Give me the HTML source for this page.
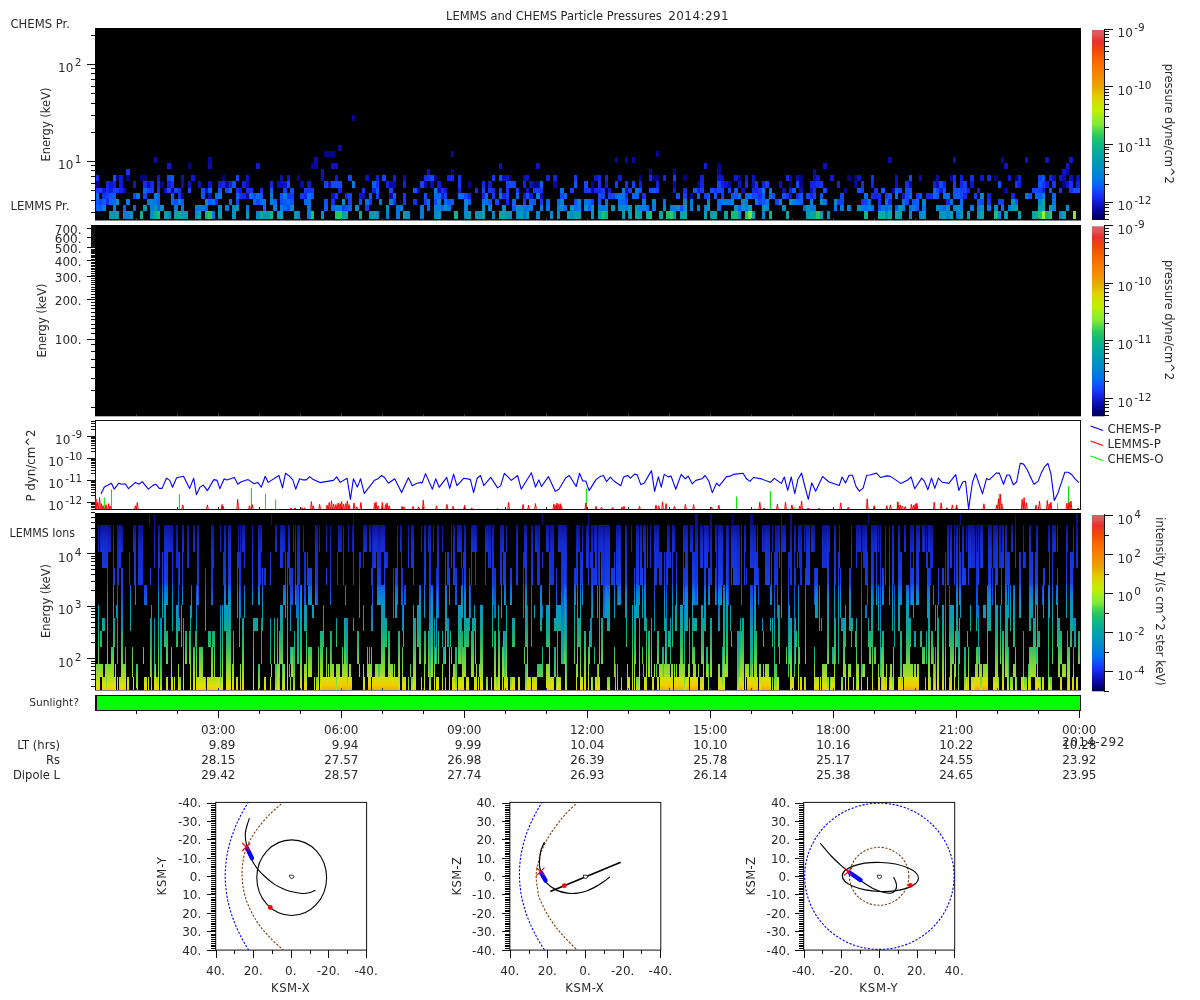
<!DOCTYPE html>
<html><head><meta charset="utf-8"><title>LEMMS and CHEMS Particle Pressures</title>
<style>html,body{margin:0;padding:0;background:#fff}svg{display:block;will-change:transform}text{font-family:"DejaVu Sans","Liberation Sans",sans-serif;fill:#2a2a2a}</style></head><body>
<svg width="1200" height="1000" viewBox="0 0 1200 1000">
<defs>
<linearGradient id="cb" x1="0" y1="1" x2="0" y2="0">
<stop offset="0.000" stop-color="#000050"/>
<stop offset="0.021" stop-color="#000070"/>
<stop offset="0.053" stop-color="#0808a0"/>
<stop offset="0.089" stop-color="#1018d0"/>
<stop offset="0.126" stop-color="#1830f8"/>
<stop offset="0.163" stop-color="#1050ff"/>
<stop offset="0.200" stop-color="#0070f0"/>
<stop offset="0.253" stop-color="#0088d0"/>
<stop offset="0.300" stop-color="#0098b8"/>
<stop offset="0.353" stop-color="#08a8a0"/>
<stop offset="0.400" stop-color="#10b880"/>
<stop offset="0.442" stop-color="#28c860"/>
<stop offset="0.474" stop-color="#50d850"/>
<stop offset="0.500" stop-color="#80e838"/>
<stop offset="0.547" stop-color="#a0f020"/>
<stop offset="0.574" stop-color="#c0f000"/>
<stop offset="0.600" stop-color="#c8e800"/>
<stop offset="0.647" stop-color="#e0d000"/>
<stop offset="0.700" stop-color="#e8a800"/>
<stop offset="0.747" stop-color="#f09000"/>
<stop offset="0.800" stop-color="#f87800"/>
<stop offset="0.847" stop-color="#f86000"/>
<stop offset="0.895" stop-color="#f04808"/>
<stop offset="0.942" stop-color="#e83030"/>
<stop offset="0.979" stop-color="#e05858"/>
<stop offset="1.000" stop-color="#d86068"/>
</linearGradient>
<linearGradient id="p4" gradientUnits="userSpaceOnUse" x1="0" y1="514" x2="0" y2="690.5">
<stop offset="0.0000" stop-color="#0c0c80"/>
<stop offset="0.0680" stop-color="#0c1498"/>
<stop offset="0.1473" stop-color="#1428c8"/>
<stop offset="0.2153" stop-color="#1430d8"/>
<stop offset="0.3173" stop-color="#1838e0"/>
<stop offset="0.3909" stop-color="#1840e8"/>
<stop offset="0.4164" stop-color="#1064e8"/>
<stop offset="0.4589" stop-color="#0c80dc"/>
<stop offset="0.5156" stop-color="#0898c4"/>
<stop offset="0.5892" stop-color="#08a0b0"/>
<stop offset="0.6629" stop-color="#10ac88"/>
<stop offset="0.7535" stop-color="#30c060"/>
<stop offset="0.8499" stop-color="#78d838"/>
<stop offset="0.9235" stop-color="#b0dc20"/>
<stop offset="0.9745" stop-color="#e0e008"/>
<stop offset="1.0000" stop-color="#f0c800"/>
</linearGradient>
<linearGradient id="p4b" gradientUnits="userSpaceOnUse" x1="0" y1="514" x2="0" y2="690.5">
<stop offset="0.0000" stop-color="#080870"/>
<stop offset="0.0680" stop-color="#0c1090"/>
<stop offset="0.1473" stop-color="#1020b8"/>
<stop offset="0.2153" stop-color="#1428d0"/>
<stop offset="0.3173" stop-color="#1430d8"/>
<stop offset="0.4023" stop-color="#1438e0"/>
<stop offset="0.4589" stop-color="#1050e8"/>
<stop offset="0.5156" stop-color="#0c68e0"/>
<stop offset="0.5892" stop-color="#0880c8"/>
<stop offset="0.6629" stop-color="#0898b8"/>
<stop offset="0.7535" stop-color="#10a8a0"/>
<stop offset="0.8499" stop-color="#28c070"/>
<stop offset="0.9235" stop-color="#60d048"/>
<stop offset="0.9745" stop-color="#98e030"/>
<stop offset="1.0000" stop-color="#c0e818"/>
</linearGradient>
<linearGradient id="p4c" gradientUnits="userSpaceOnUse" x1="0" y1="514" x2="0" y2="690.5">
<stop offset="0.0000" stop-color="#0c0c80"/>
<stop offset="0.8499" stop-color="#a0e030"/>
<stop offset="0.9235" stop-color="#d0e010"/>
<stop offset="0.9688" stop-color="#f0d000"/>
<stop offset="1.0000" stop-color="#f0a800"/>
</linearGradient>
</defs>
<rect width="1200" height="1000" fill="#fff"/>
<text y="20" font-size="11.5"><tspan x="446">LEMMS and CHEMS Particle Pressures  </tspan><tspan x="668.2" font-size="12" textLength="60.5" lengthAdjust="spacing">2014:291</tspan></text>
<rect x="95" y="28" width="986" height="192.5" fill="#000"/>
<g shape-rendering="crispEdges">
<rect x="96" y="205" width="3" height="6" fill="#036af3"/>
<rect x="96" y="199" width="3" height="6" fill="#0d56fc"/>
<rect x="96" y="193" width="3" height="6" fill="#0469f3"/>
<rect x="96" y="188" width="3" height="5" fill="#1638fa"/>
<rect x="96" y="181" width="3" height="7" fill="#040485"/>
<rect x="96" y="175" width="3" height="6" fill="#172cf1"/>
<rect x="99" y="205" width="3" height="6" fill="#095ff8"/>
<rect x="99" y="199" width="3" height="6" fill="#1345fd"/>
<rect x="99" y="188" width="3" height="5" fill="#1345fd"/>
<rect x="102" y="205" width="4" height="6" fill="#0082d8"/>
<rect x="102" y="199" width="4" height="6" fill="#095ef9"/>
<rect x="102" y="193" width="4" height="6" fill="#1831f8"/>
<rect x="102" y="188" width="4" height="5" fill="#111ad3"/>
<rect x="106" y="199" width="3" height="6" fill="#162bf0"/>
<rect x="106" y="193" width="3" height="6" fill="#1441fc"/>
<rect x="106" y="188" width="3" height="5" fill="#162bef"/>
<rect x="106" y="181" width="3" height="7" fill="#1526e7"/>
<rect x="109" y="211" width="4" height="8" fill="#019bb4"/>
<rect x="109" y="199" width="4" height="6" fill="#0468f4"/>
<rect x="109" y="193" width="4" height="6" fill="#0a5bfa"/>
<rect x="109" y="188" width="4" height="5" fill="#121eda"/>
<rect x="109" y="181" width="4" height="7" fill="#0f16c9"/>
<rect x="113" y="211" width="3" height="8" fill="#0093c0"/>
<rect x="113" y="205" width="3" height="6" fill="#0083d7"/>
<rect x="113" y="199" width="3" height="6" fill="#0762f6"/>
<rect x="113" y="193" width="3" height="6" fill="#0c59fb"/>
<rect x="113" y="188" width="3" height="5" fill="#1343fc"/>
<rect x="113" y="181" width="3" height="7" fill="#121fdc"/>
<rect x="113" y="175" width="3" height="6" fill="#0f52fe"/>
<rect x="116" y="211" width="3" height="8" fill="#029cb2"/>
<rect x="116" y="199" width="3" height="6" fill="#0090c5"/>
<rect x="116" y="188" width="3" height="5" fill="#153bfa"/>
<rect x="116" y="175" width="3" height="6" fill="#040485"/>
<rect x="119" y="188" width="4" height="5" fill="#1423e2"/>
<rect x="119" y="181" width="4" height="7" fill="#111bd5"/>
<rect x="119" y="175" width="4" height="6" fill="#111ad4"/>
<rect x="123" y="211" width="3" height="8" fill="#0082d9"/>
<rect x="123" y="205" width="3" height="6" fill="#0d56fc"/>
<rect x="123" y="188" width="3" height="5" fill="#0e13c2"/>
<rect x="126" y="211" width="4" height="8" fill="#007ce0"/>
<rect x="126" y="199" width="4" height="6" fill="#007ede"/>
<rect x="126" y="175" width="4" height="6" fill="#040485"/>
<rect x="126" y="169" width="4" height="6" fill="#1831f8"/>
<rect x="130" y="211" width="3" height="8" fill="#0094bd"/>
<rect x="133" y="205" width="3" height="6" fill="#095ef8"/>
<rect x="133" y="193" width="3" height="6" fill="#1440fb"/>
<rect x="133" y="181" width="3" height="7" fill="#1018cf"/>
<rect x="136" y="193" width="4" height="6" fill="#0078e5"/>
<rect x="140" y="211" width="3" height="8" fill="#0cb08f"/>
<rect x="140" y="175" width="3" height="6" fill="#040485"/>
<rect x="143" y="205" width="4" height="6" fill="#0098b8"/>
<rect x="143" y="193" width="4" height="6" fill="#143ffb"/>
<rect x="143" y="188" width="4" height="5" fill="#0369f3"/>
<rect x="143" y="181" width="4" height="7" fill="#162aee"/>
<rect x="143" y="175" width="4" height="6" fill="#040485"/>
<rect x="147" y="199" width="3" height="6" fill="#0079e4"/>
<rect x="147" y="188" width="3" height="5" fill="#1248fd"/>
<rect x="147" y="181" width="3" height="7" fill="#0b0eb2"/>
<rect x="150" y="211" width="4" height="8" fill="#008fc5"/>
<rect x="150" y="205" width="4" height="6" fill="#007ede"/>
<rect x="150" y="199" width="4" height="6" fill="#0083d6"/>
<rect x="150" y="188" width="4" height="5" fill="#1735f9"/>
<rect x="150" y="181" width="4" height="7" fill="#162aef"/>
<rect x="154" y="211" width="3" height="8" fill="#0baf93"/>
<rect x="154" y="205" width="3" height="6" fill="#0094bd"/>
<rect x="154" y="199" width="3" height="6" fill="#0073ec"/>
<rect x="154" y="193" width="3" height="6" fill="#0077e6"/>
<rect x="157" y="211" width="3" height="8" fill="#1bbf72"/>
<rect x="157" y="205" width="3" height="6" fill="#0762f7"/>
<rect x="157" y="199" width="3" height="6" fill="#0663f6"/>
<rect x="157" y="193" width="3" height="6" fill="#0860f8"/>
<rect x="157" y="188" width="3" height="5" fill="#1830f8"/>
<rect x="157" y="181" width="3" height="7" fill="#1424e5"/>
<rect x="157" y="175" width="3" height="6" fill="#1017ce"/>
<rect x="160" y="205" width="4" height="6" fill="#008fc6"/>
<rect x="160" y="181" width="4" height="7" fill="#040485"/>
<rect x="164" y="211" width="3" height="8" fill="#04a0ac"/>
<rect x="164" y="188" width="3" height="5" fill="#0e14c5"/>
<rect x="167" y="211" width="4" height="8" fill="#008cc9"/>
<rect x="167" y="188" width="4" height="5" fill="#124afe"/>
<rect x="167" y="181" width="4" height="7" fill="#121eda"/>
<rect x="167" y="175" width="4" height="6" fill="#1346fd"/>
<rect x="167" y="163" width="4" height="6" fill="#1018d0"/>
<rect x="171" y="199" width="3" height="6" fill="#0467f4"/>
<rect x="171" y="193" width="3" height="6" fill="#026bf2"/>
<rect x="171" y="188" width="3" height="5" fill="#040485"/>
<rect x="171" y="181" width="3" height="7" fill="#182ff6"/>
<rect x="171" y="175" width="3" height="6" fill="#095df9"/>
<rect x="174" y="211" width="4" height="8" fill="#07a6a3"/>
<rect x="174" y="205" width="4" height="6" fill="#007edd"/>
<rect x="174" y="199" width="4" height="6" fill="#114cfe"/>
<rect x="174" y="188" width="4" height="5" fill="#1248fd"/>
<rect x="178" y="211" width="3" height="8" fill="#09ab9b"/>
<rect x="178" y="199" width="3" height="6" fill="#007be2"/>
<rect x="178" y="193" width="3" height="6" fill="#182ff6"/>
<rect x="178" y="188" width="3" height="5" fill="#172ef5"/>
<rect x="181" y="211" width="3" height="8" fill="#039eb0"/>
<rect x="181" y="205" width="3" height="6" fill="#0079e3"/>
<rect x="181" y="199" width="3" height="6" fill="#0d56fc"/>
<rect x="181" y="193" width="3" height="6" fill="#05058e"/>
<rect x="181" y="181" width="3" height="7" fill="#0a0cad"/>
<rect x="181" y="175" width="3" height="6" fill="#0c10b8"/>
<rect x="184" y="211" width="4" height="8" fill="#0099b7"/>
<rect x="188" y="188" width="3" height="5" fill="#124afe"/>
<rect x="188" y="181" width="3" height="7" fill="#0e13c2"/>
<rect x="188" y="163" width="3" height="6" fill="#040485"/>
<rect x="191" y="175" width="4" height="6" fill="#1019d2"/>
<rect x="195" y="211" width="3" height="8" fill="#008ec7"/>
<rect x="195" y="205" width="3" height="6" fill="#0077e6"/>
<rect x="198" y="211" width="3" height="8" fill="#06a5a5"/>
<rect x="198" y="205" width="3" height="6" fill="#0079e4"/>
<rect x="198" y="181" width="3" height="7" fill="#0d12be"/>
<rect x="201" y="205" width="4" height="6" fill="#0074eb"/>
<rect x="201" y="193" width="4" height="6" fill="#0e54fd"/>
<rect x="201" y="188" width="4" height="5" fill="#104fff"/>
<rect x="205" y="211" width="3" height="8" fill="#0fb684"/>
<rect x="205" y="205" width="3" height="6" fill="#0d57fc"/>
<rect x="205" y="199" width="3" height="6" fill="#008acd"/>
<rect x="205" y="188" width="3" height="5" fill="#0e14c3"/>
<rect x="208" y="211" width="4" height="8" fill="#26c763"/>
<rect x="208" y="199" width="4" height="6" fill="#0a5cfa"/>
<rect x="208" y="193" width="4" height="6" fill="#0b0daf"/>
<rect x="208" y="188" width="4" height="5" fill="#095df9"/>
<rect x="208" y="181" width="4" height="7" fill="#0f16cb"/>
<rect x="208" y="157" width="4" height="6" fill="#0808a0"/>
<rect x="212" y="211" width="3" height="8" fill="#0075e9"/>
<rect x="212" y="199" width="3" height="6" fill="#006ff0"/>
<rect x="215" y="199" width="3" height="6" fill="#162aed"/>
<rect x="215" y="193" width="3" height="6" fill="#0566f5"/>
<rect x="218" y="211" width="4" height="8" fill="#04a0ac"/>
<rect x="218" y="205" width="4" height="6" fill="#0090c4"/>
<rect x="218" y="193" width="4" height="6" fill="#0078e5"/>
<rect x="218" y="188" width="4" height="5" fill="#0c58fb"/>
<rect x="218" y="181" width="4" height="7" fill="#121ed9"/>
<rect x="222" y="181" width="3" height="7" fill="#162aee"/>
<rect x="222" y="175" width="3" height="6" fill="#040485"/>
<rect x="225" y="205" width="4" height="6" fill="#0079e4"/>
<rect x="225" y="188" width="4" height="5" fill="#1345fd"/>
<rect x="225" y="181" width="4" height="7" fill="#0a0ba9"/>
<rect x="229" y="199" width="3" height="6" fill="#0074eb"/>
<rect x="229" y="188" width="3" height="5" fill="#0075e9"/>
<rect x="229" y="181" width="3" height="7" fill="#1321df"/>
<rect x="232" y="211" width="4" height="8" fill="#0095bd"/>
<rect x="232" y="205" width="4" height="6" fill="#0090c3"/>
<rect x="232" y="181" width="4" height="7" fill="#0e53fd"/>
<rect x="236" y="205" width="3" height="6" fill="#0097b9"/>
<rect x="236" y="199" width="3" height="6" fill="#153bfa"/>
<rect x="236" y="193" width="3" height="6" fill="#095df9"/>
<rect x="236" y="188" width="3" height="5" fill="#1830f8"/>
<rect x="236" y="175" width="3" height="6" fill="#1344fc"/>
<rect x="239" y="193" width="3" height="6" fill="#1629ed"/>
<rect x="239" y="188" width="3" height="5" fill="#111bd5"/>
<rect x="242" y="193" width="4" height="6" fill="#1526e8"/>
<rect x="242" y="181" width="4" height="7" fill="#121fdb"/>
<rect x="246" y="211" width="3" height="8" fill="#0098b8"/>
<rect x="246" y="205" width="3" height="6" fill="#0073ec"/>
<rect x="246" y="193" width="3" height="6" fill="#0a0baa"/>
<rect x="246" y="188" width="3" height="5" fill="#182ff6"/>
<rect x="246" y="181" width="3" height="7" fill="#0b0db0"/>
<rect x="246" y="175" width="3" height="6" fill="#0f16c9"/>
<rect x="249" y="193" width="4" height="6" fill="#0073ec"/>
<rect x="249" y="188" width="4" height="5" fill="#172ef4"/>
<rect x="253" y="199" width="3" height="6" fill="#0566f5"/>
<rect x="253" y="193" width="3" height="6" fill="#1345fd"/>
<rect x="256" y="211" width="4" height="8" fill="#008dc9"/>
<rect x="256" y="199" width="4" height="6" fill="#1441fc"/>
<rect x="256" y="193" width="4" height="6" fill="#016df1"/>
<rect x="256" y="163" width="4" height="6" fill="#111ad4"/>
<rect x="260" y="211" width="3" height="8" fill="#08a99e"/>
<rect x="260" y="199" width="3" height="6" fill="#026bf2"/>
<rect x="260" y="193" width="3" height="6" fill="#0d57fc"/>
<rect x="260" y="188" width="3" height="5" fill="#162aee"/>
<rect x="263" y="211" width="3" height="8" fill="#0097b9"/>
<rect x="263" y="205" width="3" height="6" fill="#0664f6"/>
<rect x="263" y="199" width="3" height="6" fill="#0076e8"/>
<rect x="266" y="211" width="4" height="8" fill="#019bb4"/>
<rect x="270" y="211" width="3" height="8" fill="#0fb685"/>
<rect x="270" y="199" width="3" height="6" fill="#007fdd"/>
<rect x="270" y="193" width="3" height="6" fill="#007ae3"/>
<rect x="270" y="188" width="3" height="5" fill="#0861f7"/>
<rect x="270" y="181" width="3" height="7" fill="#1527e8"/>
<rect x="273" y="205" width="4" height="6" fill="#007fdd"/>
<rect x="273" y="199" width="4" height="6" fill="#0664f6"/>
<rect x="277" y="211" width="3" height="8" fill="#019ab5"/>
<rect x="277" y="181" width="3" height="7" fill="#0a0dae"/>
<rect x="280" y="211" width="3" height="8" fill="#039fae"/>
<rect x="280" y="205" width="3" height="6" fill="#0081d9"/>
<rect x="280" y="199" width="3" height="6" fill="#1248fd"/>
<rect x="280" y="193" width="3" height="6" fill="#0f52fe"/>
<rect x="280" y="181" width="3" height="7" fill="#0c11bb"/>
<rect x="280" y="175" width="3" height="6" fill="#0c10b7"/>
<rect x="283" y="205" width="4" height="6" fill="#0663f6"/>
<rect x="283" y="199" width="4" height="6" fill="#0d57fc"/>
<rect x="283" y="193" width="4" height="6" fill="#0080da"/>
<rect x="283" y="188" width="4" height="5" fill="#1442fc"/>
<rect x="283" y="181" width="4" height="7" fill="#0e14c5"/>
<rect x="287" y="205" width="3" height="6" fill="#1344fc"/>
<rect x="287" y="199" width="3" height="6" fill="#016ef1"/>
<rect x="287" y="193" width="3" height="6" fill="#1734f9"/>
<rect x="287" y="181" width="3" height="7" fill="#114dfe"/>
<rect x="287" y="175" width="3" height="6" fill="#0f16cb"/>
<rect x="290" y="205" width="4" height="6" fill="#008cca"/>
<rect x="290" y="199" width="4" height="6" fill="#0f52fe"/>
<rect x="290" y="193" width="4" height="6" fill="#1638fa"/>
<rect x="290" y="188" width="4" height="5" fill="#0f51fe"/>
<rect x="294" y="211" width="3" height="8" fill="#019bb4"/>
<rect x="297" y="211" width="3" height="8" fill="#008acd"/>
<rect x="297" y="175" width="3" height="6" fill="#040485"/>
<rect x="300" y="193" width="4" height="6" fill="#1637fa"/>
<rect x="300" y="181" width="4" height="7" fill="#0a0dae"/>
<rect x="304" y="199" width="3" height="6" fill="#0468f4"/>
<rect x="304" y="193" width="3" height="6" fill="#1527e9"/>
<rect x="304" y="188" width="3" height="5" fill="#163afa"/>
<rect x="307" y="211" width="4" height="8" fill="#007ddf"/>
<rect x="307" y="205" width="4" height="6" fill="#0074eb"/>
<rect x="307" y="199" width="4" height="6" fill="#0070f0"/>
<rect x="307" y="193" width="4" height="6" fill="#0076e8"/>
<rect x="307" y="188" width="4" height="5" fill="#1830f8"/>
<rect x="307" y="181" width="4" height="7" fill="#0f16cb"/>
<rect x="311" y="211" width="3" height="8" fill="#1dc16e"/>
<rect x="311" y="193" width="3" height="6" fill="#0e54fd"/>
<rect x="311" y="188" width="3" height="5" fill="#153bfa"/>
<rect x="321" y="211" width="3" height="8" fill="#0094be"/>
<rect x="324" y="205" width="4" height="6" fill="#0b5afa"/>
<rect x="324" y="199" width="4" height="6" fill="#104fff"/>
<rect x="324" y="181" width="4" height="7" fill="#1345fd"/>
<rect x="328" y="181" width="3" height="7" fill="#0e13c1"/>
<rect x="331" y="205" width="4" height="6" fill="#0469f3"/>
<rect x="331" y="199" width="4" height="6" fill="#172cf1"/>
<rect x="331" y="193" width="4" height="6" fill="#0d13c1"/>
<rect x="331" y="181" width="4" height="7" fill="#1248fd"/>
<rect x="335" y="211" width="3" height="8" fill="#21c369"/>
<rect x="335" y="205" width="3" height="6" fill="#007ae3"/>
<rect x="335" y="193" width="3" height="6" fill="#1735f9"/>
<rect x="335" y="181" width="3" height="7" fill="#1050ff"/>
<rect x="335" y="175" width="3" height="6" fill="#111ad3"/>
<rect x="338" y="211" width="4" height="8" fill="#28c860"/>
<rect x="338" y="205" width="4" height="6" fill="#0077e6"/>
<rect x="338" y="188" width="4" height="5" fill="#1320dd"/>
<rect x="338" y="181" width="4" height="7" fill="#114dfe"/>
<rect x="342" y="211" width="3" height="8" fill="#039fae"/>
<rect x="342" y="205" width="3" height="6" fill="#1639fa"/>
<rect x="342" y="199" width="3" height="6" fill="#0091c3"/>
<rect x="345" y="211" width="3" height="8" fill="#06a4a6"/>
<rect x="345" y="205" width="3" height="6" fill="#0e53fd"/>
<rect x="345" y="193" width="3" height="6" fill="#1527e9"/>
<rect x="348" y="205" width="4" height="6" fill="#0761f7"/>
<rect x="348" y="199" width="4" height="6" fill="#153dfb"/>
<rect x="348" y="193" width="4" height="6" fill="#1343fc"/>
<rect x="348" y="175" width="4" height="6" fill="#1246fd"/>
<rect x="352" y="181" width="3" height="7" fill="#007edd"/>
<rect x="355" y="205" width="4" height="6" fill="#008dc8"/>
<rect x="359" y="211" width="3" height="8" fill="#07a6a3"/>
<rect x="359" y="199" width="3" height="6" fill="#1249fd"/>
<rect x="359" y="193" width="3" height="6" fill="#0f17cd"/>
<rect x="362" y="193" width="3" height="6" fill="#0c11ba"/>
<rect x="362" y="188" width="3" height="5" fill="#1832f8"/>
<rect x="365" y="205" width="4" height="6" fill="#1638fa"/>
<rect x="365" y="199" width="4" height="6" fill="#0072ee"/>
<rect x="365" y="175" width="4" height="6" fill="#0c11ba"/>
<rect x="369" y="211" width="3" height="8" fill="#0094be"/>
<rect x="369" y="199" width="3" height="6" fill="#1732f8"/>
<rect x="369" y="193" width="3" height="6" fill="#0e54fd"/>
<rect x="372" y="211" width="4" height="8" fill="#04a0ac"/>
<rect x="372" y="188" width="4" height="5" fill="#1322e0"/>
<rect x="372" y="181" width="4" height="7" fill="#0861f7"/>
<rect x="376" y="211" width="3" height="8" fill="#0091c2"/>
<rect x="376" y="193" width="3" height="6" fill="#153dfb"/>
<rect x="376" y="188" width="3" height="5" fill="#0c58fb"/>
<rect x="376" y="181" width="3" height="7" fill="#1732f8"/>
<rect x="376" y="175" width="3" height="6" fill="#121fdc"/>
<rect x="379" y="199" width="3" height="6" fill="#007edd"/>
<rect x="382" y="175" width="4" height="6" fill="#1248fd"/>
<rect x="386" y="211" width="3" height="8" fill="#007ddf"/>
<rect x="386" y="205" width="3" height="6" fill="#0092c0"/>
<rect x="386" y="181" width="3" height="7" fill="#1423e2"/>
<rect x="389" y="199" width="4" height="6" fill="#007ae3"/>
<rect x="389" y="193" width="4" height="6" fill="#0b0eb2"/>
<rect x="389" y="188" width="4" height="5" fill="#1346fd"/>
<rect x="389" y="181" width="4" height="7" fill="#090ba8"/>
<rect x="393" y="199" width="3" height="6" fill="#1832f8"/>
<rect x="393" y="193" width="3" height="6" fill="#0a5cf9"/>
<rect x="393" y="181" width="3" height="7" fill="#090aa5"/>
<rect x="393" y="175" width="3" height="6" fill="#1322e1"/>
<rect x="396" y="211" width="4" height="8" fill="#0076e9"/>
<rect x="396" y="205" width="4" height="6" fill="#0073ec"/>
<rect x="400" y="205" width="3" height="6" fill="#007edd"/>
<rect x="403" y="211" width="3" height="8" fill="#039db0"/>
<rect x="403" y="199" width="3" height="6" fill="#1637fa"/>
<rect x="403" y="193" width="3" height="6" fill="#1637f9"/>
<rect x="403" y="181" width="3" height="7" fill="#1321df"/>
<rect x="403" y="175" width="3" height="6" fill="#0a0cac"/>
<rect x="406" y="211" width="4" height="8" fill="#008fc5"/>
<rect x="413" y="199" width="4" height="6" fill="#1732f8"/>
<rect x="413" y="188" width="4" height="5" fill="#0e54fd"/>
<rect x="417" y="188" width="3" height="5" fill="#0a0cab"/>
<rect x="420" y="211" width="4" height="8" fill="#007ddf"/>
<rect x="420" y="205" width="4" height="6" fill="#0077e6"/>
<rect x="420" y="181" width="4" height="7" fill="#1343fc"/>
<rect x="424" y="199" width="3" height="6" fill="#153cfb"/>
<rect x="424" y="193" width="3" height="6" fill="#114cfe"/>
<rect x="424" y="181" width="3" height="7" fill="#0b0eb2"/>
<rect x="424" y="175" width="3" height="6" fill="#1528eb"/>
<rect x="427" y="205" width="3" height="6" fill="#0663f6"/>
<rect x="427" y="199" width="3" height="6" fill="#0071ef"/>
<rect x="427" y="175" width="3" height="6" fill="#1831f8"/>
<rect x="427" y="169" width="3" height="6" fill="#0d12bd"/>
<rect x="430" y="181" width="4" height="7" fill="#0b0db0"/>
<rect x="430" y="175" width="4" height="6" fill="#114afe"/>
<rect x="434" y="211" width="3" height="8" fill="#008dc9"/>
<rect x="434" y="205" width="3" height="6" fill="#0081d9"/>
<rect x="434" y="199" width="3" height="6" fill="#1344fc"/>
<rect x="434" y="193" width="3" height="6" fill="#0469f3"/>
<rect x="434" y="188" width="3" height="5" fill="#007be2"/>
<rect x="434" y="175" width="3" height="6" fill="#060696"/>
<rect x="437" y="211" width="4" height="8" fill="#0095bc"/>
<rect x="437" y="205" width="4" height="6" fill="#0079e4"/>
<rect x="437" y="199" width="4" height="6" fill="#0088d0"/>
<rect x="437" y="193" width="4" height="6" fill="#0565f5"/>
<rect x="437" y="188" width="4" height="5" fill="#0a0cad"/>
<rect x="437" y="181" width="4" height="7" fill="#111bd5"/>
<rect x="441" y="205" width="3" height="6" fill="#0469f3"/>
<rect x="441" y="193" width="3" height="6" fill="#121fdc"/>
<rect x="441" y="188" width="3" height="5" fill="#172df2"/>
<rect x="444" y="205" width="3" height="6" fill="#008bcc"/>
<rect x="444" y="199" width="3" height="6" fill="#0469f3"/>
<rect x="444" y="193" width="3" height="6" fill="#143ffb"/>
<rect x="444" y="188" width="3" height="5" fill="#111bd4"/>
<rect x="447" y="205" width="4" height="6" fill="#0076e8"/>
<rect x="447" y="199" width="4" height="6" fill="#114dfe"/>
<rect x="447" y="175" width="4" height="6" fill="#1424e5"/>
<rect x="451" y="199" width="3" height="6" fill="#0762f7"/>
<rect x="451" y="175" width="3" height="6" fill="#162bf0"/>
<rect x="451" y="169" width="3" height="6" fill="#040485"/>
<rect x="454" y="211" width="4" height="8" fill="#0db28c"/>
<rect x="458" y="193" width="3" height="6" fill="#0071ef"/>
<rect x="458" y="188" width="3" height="5" fill="#121fdb"/>
<rect x="458" y="181" width="3" height="7" fill="#1735f9"/>
<rect x="458" y="175" width="3" height="6" fill="#1830f8"/>
<rect x="461" y="193" width="3" height="6" fill="#016ef1"/>
<rect x="464" y="211" width="4" height="8" fill="#008bcb"/>
<rect x="464" y="205" width="4" height="6" fill="#0081d9"/>
<rect x="464" y="199" width="4" height="6" fill="#0084d5"/>
<rect x="464" y="193" width="4" height="6" fill="#1442fc"/>
<rect x="468" y="211" width="3" height="8" fill="#019ab5"/>
<rect x="468" y="199" width="3" height="6" fill="#0663f6"/>
<rect x="468" y="193" width="3" height="6" fill="#121fdc"/>
<rect x="468" y="181" width="3" height="7" fill="#05058e"/>
<rect x="475" y="211" width="3" height="8" fill="#0098b8"/>
<rect x="475" y="188" width="3" height="5" fill="#172df4"/>
<rect x="478" y="211" width="4" height="8" fill="#0091c2"/>
<rect x="482" y="211" width="3" height="8" fill="#06a4a6"/>
<rect x="482" y="205" width="3" height="6" fill="#0091c2"/>
<rect x="482" y="199" width="3" height="6" fill="#0074eb"/>
<rect x="482" y="193" width="3" height="6" fill="#1424e4"/>
<rect x="482" y="188" width="3" height="5" fill="#1344fc"/>
<rect x="482" y="181" width="3" height="7" fill="#162bf0"/>
<rect x="485" y="199" width="3" height="6" fill="#026bf2"/>
<rect x="485" y="193" width="3" height="6" fill="#0566f5"/>
<rect x="488" y="205" width="4" height="6" fill="#0086d2"/>
<rect x="488" y="199" width="4" height="6" fill="#0c59fb"/>
<rect x="488" y="188" width="4" height="5" fill="#1733f9"/>
<rect x="488" y="181" width="4" height="7" fill="#1018d0"/>
<rect x="492" y="211" width="3" height="8" fill="#008acd"/>
<rect x="492" y="193" width="3" height="6" fill="#1638fa"/>
<rect x="492" y="188" width="3" height="5" fill="#1528eb"/>
<rect x="492" y="175" width="3" height="6" fill="#153bfa"/>
<rect x="495" y="199" width="4" height="6" fill="#1346fd"/>
<rect x="499" y="211" width="3" height="8" fill="#06a5a5"/>
<rect x="499" y="193" width="3" height="6" fill="#0077e7"/>
<rect x="499" y="188" width="3" height="5" fill="#143ffb"/>
<rect x="499" y="175" width="3" height="6" fill="#0e54fd"/>
<rect x="502" y="211" width="4" height="8" fill="#05a3a8"/>
<rect x="502" y="205" width="4" height="6" fill="#0090c4"/>
<rect x="502" y="193" width="4" height="6" fill="#1423e2"/>
<rect x="502" y="175" width="4" height="6" fill="#0b0daf"/>
<rect x="506" y="211" width="3" height="8" fill="#019ab6"/>
<rect x="506" y="199" width="3" height="6" fill="#1527ea"/>
<rect x="506" y="193" width="3" height="6" fill="#153bfa"/>
<rect x="506" y="188" width="3" height="5" fill="#1736f9"/>
<rect x="506" y="181" width="3" height="7" fill="#1441fc"/>
<rect x="506" y="175" width="3" height="6" fill="#0e15c6"/>
<rect x="509" y="211" width="3" height="8" fill="#0090c4"/>
<rect x="509" y="181" width="3" height="7" fill="#114efe"/>
<rect x="509" y="175" width="3" height="6" fill="#040485"/>
<rect x="512" y="205" width="4" height="6" fill="#0c58fb"/>
<rect x="512" y="199" width="4" height="6" fill="#026bf2"/>
<rect x="512" y="181" width="4" height="7" fill="#1246fd"/>
<rect x="516" y="211" width="3" height="8" fill="#008ec8"/>
<rect x="516" y="205" width="3" height="6" fill="#0094be"/>
<rect x="516" y="193" width="3" height="6" fill="#0566f5"/>
<rect x="516" y="188" width="3" height="5" fill="#153cfb"/>
<rect x="519" y="211" width="4" height="8" fill="#029cb2"/>
<rect x="519" y="205" width="4" height="6" fill="#0086d3"/>
<rect x="523" y="211" width="3" height="8" fill="#0073ec"/>
<rect x="523" y="205" width="3" height="6" fill="#0077e6"/>
<rect x="523" y="199" width="3" height="6" fill="#153cfb"/>
<rect x="523" y="193" width="3" height="6" fill="#111bd4"/>
<rect x="523" y="181" width="3" height="7" fill="#1320dd"/>
<rect x="523" y="175" width="3" height="6" fill="#0b0fb4"/>
<rect x="526" y="211" width="3" height="8" fill="#019ab6"/>
<rect x="526" y="205" width="3" height="6" fill="#0070ef"/>
<rect x="526" y="193" width="3" height="6" fill="#1051ff"/>
<rect x="526" y="188" width="3" height="5" fill="#0f15c8"/>
<rect x="526" y="175" width="3" height="6" fill="#0f16c9"/>
<rect x="529" y="205" width="4" height="6" fill="#0077e7"/>
<rect x="529" y="199" width="4" height="6" fill="#0860f7"/>
<rect x="529" y="193" width="4" height="6" fill="#111ad4"/>
<rect x="529" y="181" width="4" height="7" fill="#0e14c3"/>
<rect x="533" y="199" width="3" height="6" fill="#0e55fd"/>
<rect x="533" y="188" width="3" height="5" fill="#153cfb"/>
<rect x="533" y="181" width="3" height="7" fill="#040485"/>
<rect x="536" y="211" width="4" height="8" fill="#0088d0"/>
<rect x="536" y="193" width="4" height="6" fill="#007ce0"/>
<rect x="536" y="188" width="4" height="5" fill="#153dfb"/>
<rect x="536" y="181" width="4" height="7" fill="#05058e"/>
<rect x="540" y="205" width="3" height="6" fill="#007ce0"/>
<rect x="540" y="199" width="3" height="6" fill="#1735f9"/>
<rect x="540" y="193" width="3" height="6" fill="#0a0baa"/>
<rect x="540" y="188" width="3" height="5" fill="#1831f8"/>
<rect x="540" y="181" width="3" height="7" fill="#0860f8"/>
<rect x="546" y="205" width="4" height="6" fill="#0076e7"/>
<rect x="546" y="199" width="4" height="6" fill="#0663f6"/>
<rect x="546" y="175" width="4" height="6" fill="#1322e0"/>
<rect x="550" y="211" width="3" height="8" fill="#0089ce"/>
<rect x="553" y="181" width="4" height="7" fill="#08089f"/>
<rect x="553" y="175" width="4" height="6" fill="#1322e1"/>
<rect x="557" y="211" width="3" height="8" fill="#008bcb"/>
<rect x="557" y="205" width="3" height="6" fill="#0077e7"/>
<rect x="557" y="199" width="3" height="6" fill="#0663f6"/>
<rect x="560" y="205" width="4" height="6" fill="#008acc"/>
<rect x="560" y="199" width="4" height="6" fill="#0081d9"/>
<rect x="560" y="193" width="4" height="6" fill="#1249fd"/>
<rect x="560" y="188" width="4" height="5" fill="#0071ef"/>
<rect x="564" y="205" width="3" height="6" fill="#036bf3"/>
<rect x="564" y="193" width="3" height="6" fill="#0664f6"/>
<rect x="567" y="211" width="3" height="8" fill="#04a0ac"/>
<rect x="570" y="211" width="4" height="8" fill="#008ec7"/>
<rect x="570" y="205" width="4" height="6" fill="#0095bc"/>
<rect x="570" y="188" width="4" height="5" fill="#1342fc"/>
<rect x="574" y="211" width="3" height="8" fill="#06a3a7"/>
<rect x="574" y="205" width="3" height="6" fill="#026df1"/>
<rect x="574" y="199" width="3" height="6" fill="#114bfe"/>
<rect x="574" y="181" width="3" height="7" fill="#0a5cf9"/>
<rect x="574" y="175" width="3" height="6" fill="#1637f9"/>
<rect x="577" y="211" width="4" height="8" fill="#039fae"/>
<rect x="577" y="205" width="4" height="6" fill="#007ce0"/>
<rect x="577" y="199" width="4" height="6" fill="#0089cf"/>
<rect x="584" y="205" width="4" height="6" fill="#0097b9"/>
<rect x="584" y="199" width="4" height="6" fill="#0074eb"/>
<rect x="584" y="188" width="4" height="5" fill="#1637f9"/>
<rect x="584" y="181" width="4" height="7" fill="#1249fe"/>
<rect x="588" y="205" width="3" height="6" fill="#095df9"/>
<rect x="588" y="199" width="3" height="6" fill="#0072ee"/>
<rect x="588" y="188" width="3" height="5" fill="#153afa"/>
<rect x="591" y="211" width="3" height="8" fill="#0096bb"/>
<rect x="591" y="205" width="3" height="6" fill="#0099b7"/>
<rect x="591" y="199" width="3" height="6" fill="#143efb"/>
<rect x="591" y="188" width="3" height="5" fill="#060692"/>
<rect x="591" y="181" width="3" height="7" fill="#050591"/>
<rect x="594" y="188" width="4" height="5" fill="#1526e8"/>
<rect x="594" y="175" width="4" height="6" fill="#1017ce"/>
<rect x="598" y="211" width="3" height="8" fill="#05a1aa"/>
<rect x="598" y="205" width="3" height="6" fill="#007fdd"/>
<rect x="598" y="199" width="3" height="6" fill="#0d57fc"/>
<rect x="598" y="193" width="3" height="6" fill="#114dfe"/>
<rect x="598" y="188" width="3" height="5" fill="#1527e9"/>
<rect x="598" y="181" width="3" height="7" fill="#182ff6"/>
<rect x="598" y="175" width="3" height="6" fill="#1526e7"/>
<rect x="601" y="211" width="4" height="8" fill="#1bbf71"/>
<rect x="601" y="205" width="4" height="6" fill="#0077e7"/>
<rect x="601" y="193" width="4" height="6" fill="#1246fd"/>
<rect x="601" y="188" width="4" height="5" fill="#1638fa"/>
<rect x="605" y="211" width="3" height="8" fill="#0baf92"/>
<rect x="605" y="205" width="3" height="6" fill="#0080db"/>
<rect x="605" y="199" width="3" height="6" fill="#0073ec"/>
<rect x="605" y="181" width="3" height="7" fill="#111bd5"/>
<rect x="605" y="175" width="3" height="6" fill="#1425e6"/>
<rect x="608" y="193" width="3" height="6" fill="#1344fc"/>
<rect x="608" y="188" width="3" height="5" fill="#111cd7"/>
<rect x="611" y="205" width="4" height="6" fill="#0098b8"/>
<rect x="611" y="193" width="4" height="6" fill="#1440fc"/>
<rect x="615" y="193" width="3" height="6" fill="#0073ec"/>
<rect x="615" y="181" width="3" height="7" fill="#153afa"/>
<rect x="615" y="157" width="3" height="6" fill="#07079c"/>
<rect x="618" y="205" width="4" height="6" fill="#0089ce"/>
<rect x="618" y="199" width="4" height="6" fill="#026cf2"/>
<rect x="618" y="193" width="4" height="6" fill="#0079e4"/>
<rect x="618" y="175" width="4" height="6" fill="#1018cf"/>
<rect x="622" y="211" width="3" height="8" fill="#039db0"/>
<rect x="622" y="205" width="3" height="6" fill="#008dc8"/>
<rect x="622" y="199" width="3" height="6" fill="#0763f6"/>
<rect x="622" y="193" width="3" height="6" fill="#0071ef"/>
<rect x="622" y="188" width="3" height="5" fill="#0079e4"/>
<rect x="625" y="205" width="3" height="6" fill="#007ddf"/>
<rect x="625" y="199" width="3" height="6" fill="#114cfe"/>
<rect x="625" y="193" width="3" height="6" fill="#172cf1"/>
<rect x="625" y="188" width="3" height="5" fill="#0909a3"/>
<rect x="625" y="181" width="3" height="7" fill="#172df4"/>
<rect x="628" y="211" width="4" height="8" fill="#04a0ac"/>
<rect x="628" y="205" width="4" height="6" fill="#0097b9"/>
<rect x="628" y="188" width="4" height="5" fill="#1441fc"/>
<rect x="632" y="193" width="3" height="6" fill="#0467f4"/>
<rect x="632" y="181" width="3" height="7" fill="#1441fc"/>
<rect x="635" y="211" width="4" height="8" fill="#08a89f"/>
<rect x="635" y="205" width="4" height="6" fill="#0091c2"/>
<rect x="635" y="193" width="4" height="6" fill="#0762f7"/>
<rect x="635" y="188" width="4" height="5" fill="#0078e5"/>
<rect x="639" y="211" width="3" height="8" fill="#019bb4"/>
<rect x="639" y="205" width="3" height="6" fill="#0081d9"/>
<rect x="639" y="188" width="3" height="5" fill="#1050ff"/>
<rect x="639" y="181" width="3" height="7" fill="#121dd9"/>
<rect x="639" y="175" width="3" height="6" fill="#040485"/>
<rect x="642" y="205" width="4" height="6" fill="#0082d8"/>
<rect x="642" y="199" width="4" height="6" fill="#0079e4"/>
<rect x="642" y="193" width="4" height="6" fill="#182ff6"/>
<rect x="646" y="211" width="3" height="8" fill="#0bad95"/>
<rect x="646" y="205" width="3" height="6" fill="#0070f0"/>
<rect x="649" y="211" width="3" height="8" fill="#18be75"/>
<rect x="649" y="188" width="3" height="5" fill="#104eff"/>
<rect x="649" y="175" width="3" height="6" fill="#1527e9"/>
<rect x="649" y="169" width="3" height="6" fill="#070799"/>
<rect x="652" y="205" width="4" height="6" fill="#007edd"/>
<rect x="652" y="199" width="4" height="6" fill="#0087d2"/>
<rect x="652" y="188" width="4" height="5" fill="#0c58fb"/>
<rect x="652" y="175" width="4" height="6" fill="#040485"/>
<rect x="656" y="188" width="3" height="5" fill="#1343fc"/>
<rect x="656" y="181" width="3" height="7" fill="#1423e3"/>
<rect x="656" y="175" width="3" height="6" fill="#040485"/>
<rect x="659" y="211" width="4" height="8" fill="#06a5a5"/>
<rect x="663" y="205" width="3" height="6" fill="#0090c4"/>
<rect x="663" y="199" width="3" height="6" fill="#0073eb"/>
<rect x="663" y="175" width="3" height="6" fill="#1526e7"/>
<rect x="666" y="211" width="4" height="8" fill="#19be74"/>
<rect x="670" y="211" width="3" height="8" fill="#25c664"/>
<rect x="670" y="205" width="3" height="6" fill="#0078e5"/>
<rect x="673" y="211" width="3" height="8" fill="#029db1"/>
<rect x="673" y="205" width="3" height="6" fill="#0080db"/>
<rect x="673" y="188" width="3" height="5" fill="#111bd5"/>
<rect x="673" y="181" width="3" height="7" fill="#0909a4"/>
<rect x="673" y="175" width="3" height="6" fill="#1638fa"/>
<rect x="673" y="169" width="3" height="6" fill="#060695"/>
<rect x="676" y="205" width="4" height="6" fill="#008fc5"/>
<rect x="676" y="193" width="4" height="6" fill="#1051ff"/>
<rect x="680" y="211" width="3" height="8" fill="#05a2a9"/>
<rect x="680" y="205" width="3" height="6" fill="#104fff"/>
<rect x="683" y="211" width="4" height="8" fill="#08a89f"/>
<rect x="683" y="205" width="4" height="6" fill="#0092c1"/>
<rect x="683" y="199" width="4" height="6" fill="#0082d8"/>
<rect x="683" y="193" width="4" height="6" fill="#1442fc"/>
<rect x="683" y="188" width="4" height="5" fill="#172cf1"/>
<rect x="683" y="175" width="4" height="6" fill="#040485"/>
<rect x="690" y="205" width="3" height="6" fill="#007ddf"/>
<rect x="690" y="199" width="3" height="6" fill="#007be2"/>
<rect x="690" y="193" width="3" height="6" fill="#070798"/>
<rect x="693" y="188" width="4" height="5" fill="#0e54fd"/>
<rect x="697" y="205" width="3" height="6" fill="#0085d4"/>
<rect x="697" y="193" width="3" height="6" fill="#0763f6"/>
<rect x="697" y="188" width="3" height="5" fill="#1320de"/>
<rect x="697" y="181" width="3" height="7" fill="#040485"/>
<rect x="700" y="188" width="4" height="5" fill="#153dfb"/>
<rect x="700" y="181" width="4" height="7" fill="#1425e5"/>
<rect x="700" y="175" width="4" height="6" fill="#121fdc"/>
<rect x="704" y="211" width="3" height="8" fill="#049fad"/>
<rect x="704" y="205" width="3" height="6" fill="#0084d5"/>
<rect x="704" y="193" width="3" height="6" fill="#1440fb"/>
<rect x="704" y="163" width="3" height="6" fill="#111cd6"/>
<rect x="707" y="205" width="3" height="6" fill="#039eaf"/>
<rect x="707" y="199" width="3" height="6" fill="#008cc9"/>
<rect x="707" y="193" width="3" height="6" fill="#114efe"/>
<rect x="710" y="211" width="4" height="8" fill="#039eaf"/>
<rect x="710" y="188" width="4" height="5" fill="#0e54fd"/>
<rect x="714" y="211" width="3" height="8" fill="#07a7a2"/>
<rect x="714" y="193" width="3" height="6" fill="#0d56fc"/>
<rect x="714" y="188" width="3" height="5" fill="#1831f8"/>
<rect x="717" y="205" width="4" height="6" fill="#026cf2"/>
<rect x="717" y="199" width="4" height="6" fill="#0762f7"/>
<rect x="717" y="188" width="4" height="5" fill="#1249fd"/>
<rect x="717" y="181" width="4" height="7" fill="#1345fd"/>
<rect x="717" y="175" width="4" height="6" fill="#0f16cb"/>
<rect x="717" y="169" width="4" height="6" fill="#070798"/>
<rect x="717" y="163" width="4" height="6" fill="#040485"/>
<rect x="721" y="199" width="3" height="6" fill="#0079e4"/>
<rect x="721" y="193" width="3" height="6" fill="#153efb"/>
<rect x="721" y="188" width="3" height="5" fill="#1440fc"/>
<rect x="721" y="181" width="3" height="7" fill="#121dd8"/>
<rect x="721" y="175" width="3" height="6" fill="#0c10b8"/>
<rect x="724" y="211" width="4" height="8" fill="#05a2a9"/>
<rect x="724" y="199" width="4" height="6" fill="#0077e6"/>
<rect x="724" y="181" width="4" height="7" fill="#0f16ca"/>
<rect x="728" y="199" width="3" height="6" fill="#0074eb"/>
<rect x="728" y="188" width="3" height="5" fill="#1248fd"/>
<rect x="728" y="181" width="3" height="7" fill="#090aa5"/>
<rect x="731" y="211" width="3" height="8" fill="#14bb7b"/>
<rect x="731" y="199" width="3" height="6" fill="#0084d5"/>
<rect x="731" y="193" width="3" height="6" fill="#1051ff"/>
<rect x="734" y="211" width="4" height="8" fill="#18bd75"/>
<rect x="734" y="205" width="4" height="6" fill="#019ab4"/>
<rect x="734" y="193" width="4" height="6" fill="#0f52fe"/>
<rect x="734" y="188" width="4" height="5" fill="#0b5afa"/>
<rect x="734" y="175" width="4" height="6" fill="#111bd5"/>
<rect x="738" y="211" width="3" height="8" fill="#0094bf"/>
<rect x="738" y="205" width="3" height="6" fill="#0665f5"/>
<rect x="738" y="193" width="3" height="6" fill="#0078e5"/>
<rect x="738" y="181" width="3" height="7" fill="#0d13c1"/>
<rect x="738" y="175" width="3" height="6" fill="#05058c"/>
<rect x="741" y="205" width="4" height="6" fill="#0097ba"/>
<rect x="741" y="199" width="4" height="6" fill="#008cca"/>
<rect x="741" y="188" width="4" height="5" fill="#0c0fb5"/>
<rect x="745" y="211" width="3" height="8" fill="#1dc16e"/>
<rect x="745" y="205" width="3" height="6" fill="#0077e6"/>
<rect x="745" y="199" width="3" height="6" fill="#0076e8"/>
<rect x="745" y="193" width="3" height="6" fill="#0567f4"/>
<rect x="745" y="181" width="3" height="7" fill="#1629ec"/>
<rect x="745" y="175" width="3" height="6" fill="#111bd5"/>
<rect x="748" y="211" width="4" height="8" fill="#73e43f"/>
<rect x="748" y="205" width="4" height="6" fill="#04a0ac"/>
<rect x="748" y="193" width="4" height="6" fill="#026cf2"/>
<rect x="752" y="211" width="3" height="8" fill="#04a0ab"/>
<rect x="752" y="193" width="3" height="6" fill="#1246fd"/>
<rect x="752" y="188" width="3" height="5" fill="#1528ea"/>
<rect x="752" y="181" width="3" height="7" fill="#0c10b8"/>
<rect x="752" y="175" width="3" height="6" fill="#0f16c9"/>
<rect x="755" y="199" width="3" height="6" fill="#0078e6"/>
<rect x="755" y="193" width="3" height="6" fill="#1343fc"/>
<rect x="755" y="188" width="3" height="5" fill="#1528ea"/>
<rect x="755" y="181" width="3" height="7" fill="#182ff6"/>
<rect x="758" y="199" width="4" height="6" fill="#1345fd"/>
<rect x="758" y="193" width="4" height="6" fill="#1629ec"/>
<rect x="758" y="188" width="4" height="5" fill="#1639fa"/>
<rect x="762" y="211" width="3" height="8" fill="#0089ce"/>
<rect x="762" y="205" width="3" height="6" fill="#0099b7"/>
<rect x="762" y="199" width="3" height="6" fill="#0f52fe"/>
<rect x="762" y="193" width="3" height="6" fill="#095df9"/>
<rect x="762" y="188" width="3" height="5" fill="#007be1"/>
<rect x="762" y="181" width="3" height="7" fill="#1321de"/>
<rect x="765" y="205" width="4" height="6" fill="#0091c2"/>
<rect x="765" y="199" width="4" height="6" fill="#007ce0"/>
<rect x="765" y="181" width="4" height="7" fill="#143ffb"/>
<rect x="769" y="211" width="3" height="8" fill="#0fb684"/>
<rect x="769" y="193" width="3" height="6" fill="#026cf2"/>
<rect x="769" y="188" width="3" height="5" fill="#007dde"/>
<rect x="772" y="193" width="3" height="6" fill="#1050ff"/>
<rect x="775" y="199" width="4" height="6" fill="#1342fc"/>
<rect x="779" y="199" width="3" height="6" fill="#008acd"/>
<rect x="779" y="181" width="3" height="7" fill="#0e14c5"/>
<rect x="782" y="205" width="4" height="6" fill="#008acd"/>
<rect x="782" y="193" width="4" height="6" fill="#104eff"/>
<rect x="782" y="188" width="4" height="5" fill="#0c10b8"/>
<rect x="786" y="211" width="3" height="8" fill="#08a8a0"/>
<rect x="786" y="193" width="3" height="6" fill="#1732f9"/>
<rect x="786" y="175" width="3" height="6" fill="#162aef"/>
<rect x="789" y="199" width="3" height="6" fill="#0091c3"/>
<rect x="789" y="193" width="3" height="6" fill="#0c0fb5"/>
<rect x="789" y="188" width="3" height="5" fill="#1322e1"/>
<rect x="789" y="181" width="3" height="7" fill="#040485"/>
<rect x="789" y="175" width="3" height="6" fill="#090aa5"/>
<rect x="792" y="199" width="4" height="6" fill="#0083d7"/>
<rect x="792" y="188" width="4" height="5" fill="#0b59fb"/>
<rect x="796" y="199" width="3" height="6" fill="#0567f4"/>
<rect x="796" y="193" width="3" height="6" fill="#162aee"/>
<rect x="796" y="181" width="3" height="7" fill="#1249fd"/>
<rect x="796" y="175" width="3" height="6" fill="#0a0cab"/>
<rect x="799" y="199" width="4" height="6" fill="#095df9"/>
<rect x="799" y="193" width="4" height="6" fill="#0e55fd"/>
<rect x="799" y="188" width="4" height="5" fill="#0b0fb4"/>
<rect x="799" y="181" width="4" height="7" fill="#040485"/>
<rect x="799" y="175" width="4" height="6" fill="#040485"/>
<rect x="803" y="205" width="3" height="6" fill="#0567f4"/>
<rect x="806" y="211" width="4" height="8" fill="#019ab5"/>
<rect x="806" y="205" width="4" height="6" fill="#019bb4"/>
<rect x="806" y="193" width="4" height="6" fill="#1248fd"/>
<rect x="810" y="211" width="3" height="8" fill="#07a7a2"/>
<rect x="810" y="205" width="3" height="6" fill="#0076e8"/>
<rect x="810" y="199" width="3" height="6" fill="#0080da"/>
<rect x="810" y="193" width="3" height="6" fill="#1424e4"/>
<rect x="810" y="188" width="3" height="5" fill="#0e13c2"/>
<rect x="810" y="181" width="3" height="7" fill="#1423e3"/>
<rect x="813" y="211" width="3" height="8" fill="#06a5a5"/>
<rect x="813" y="205" width="3" height="6" fill="#0072ed"/>
<rect x="813" y="193" width="3" height="6" fill="#1342fc"/>
<rect x="813" y="188" width="3" height="5" fill="#162aef"/>
<rect x="813" y="181" width="3" height="7" fill="#1424e4"/>
<rect x="813" y="175" width="3" height="6" fill="#0a0daf"/>
<rect x="813" y="169" width="3" height="6" fill="#0b0daf"/>
<rect x="816" y="211" width="4" height="8" fill="#2cca5e"/>
<rect x="816" y="181" width="4" height="7" fill="#172cf1"/>
<rect x="816" y="175" width="4" height="6" fill="#111ad3"/>
<rect x="820" y="211" width="3" height="8" fill="#029cb3"/>
<rect x="820" y="199" width="3" height="6" fill="#0093bf"/>
<rect x="820" y="193" width="3" height="6" fill="#0c57fc"/>
<rect x="820" y="181" width="3" height="7" fill="#1734f9"/>
<rect x="823" y="199" width="4" height="6" fill="#026cf2"/>
<rect x="823" y="188" width="4" height="5" fill="#114dfe"/>
<rect x="823" y="163" width="4" height="6" fill="#0c11ba"/>
<rect x="827" y="211" width="3" height="8" fill="#008bcc"/>
<rect x="830" y="175" width="4" height="6" fill="#1018cf"/>
<rect x="834" y="205" width="3" height="6" fill="#0075e9"/>
<rect x="834" y="199" width="3" height="6" fill="#008bcb"/>
<rect x="837" y="199" width="3" height="6" fill="#1735f9"/>
<rect x="837" y="181" width="3" height="7" fill="#1322e0"/>
<rect x="840" y="205" width="4" height="6" fill="#0079e4"/>
<rect x="840" y="199" width="4" height="6" fill="#153efb"/>
<rect x="840" y="193" width="4" height="6" fill="#1345fd"/>
<rect x="844" y="188" width="3" height="5" fill="#08089f"/>
<rect x="847" y="205" width="4" height="6" fill="#0085d4"/>
<rect x="847" y="175" width="4" height="6" fill="#040485"/>
<rect x="854" y="181" width="3" height="7" fill="#070799"/>
<rect x="854" y="175" width="3" height="6" fill="#040485"/>
<rect x="857" y="205" width="4" height="6" fill="#0090c4"/>
<rect x="857" y="188" width="4" height="5" fill="#0f52fe"/>
<rect x="857" y="175" width="4" height="6" fill="#0d12bf"/>
<rect x="861" y="205" width="3" height="6" fill="#007ae2"/>
<rect x="861" y="199" width="3" height="6" fill="#1832f8"/>
<rect x="861" y="188" width="3" height="5" fill="#153cfb"/>
<rect x="861" y="181" width="3" height="7" fill="#162bf0"/>
<rect x="864" y="211" width="4" height="8" fill="#0fb685"/>
<rect x="864" y="205" width="4" height="6" fill="#0072ee"/>
<rect x="864" y="199" width="4" height="6" fill="#143ffb"/>
<rect x="864" y="193" width="4" height="6" fill="#0074eb"/>
<rect x="868" y="205" width="3" height="6" fill="#0086d2"/>
<rect x="868" y="199" width="3" height="6" fill="#0073ec"/>
<rect x="871" y="205" width="3" height="6" fill="#0074ea"/>
<rect x="871" y="193" width="3" height="6" fill="#1527ea"/>
<rect x="871" y="181" width="3" height="7" fill="#1424e3"/>
<rect x="871" y="175" width="3" height="6" fill="#182ff7"/>
<rect x="874" y="193" width="4" height="6" fill="#1322e0"/>
<rect x="874" y="188" width="4" height="5" fill="#182ff6"/>
<rect x="878" y="211" width="3" height="8" fill="#0aac98"/>
<rect x="878" y="205" width="3" height="6" fill="#114dfe"/>
<rect x="878" y="199" width="3" height="6" fill="#172ef4"/>
<rect x="878" y="193" width="3" height="6" fill="#162bef"/>
<rect x="881" y="211" width="4" height="8" fill="#0cb18f"/>
<rect x="881" y="205" width="4" height="6" fill="#007ce0"/>
<rect x="881" y="188" width="4" height="5" fill="#0762f6"/>
<rect x="885" y="211" width="3" height="8" fill="#008bcb"/>
<rect x="885" y="205" width="3" height="6" fill="#095df9"/>
<rect x="885" y="199" width="3" height="6" fill="#0073ec"/>
<rect x="885" y="193" width="3" height="6" fill="#153bfa"/>
<rect x="888" y="211" width="4" height="8" fill="#0aad96"/>
<rect x="888" y="205" width="4" height="6" fill="#007edd"/>
<rect x="888" y="199" width="4" height="6" fill="#1528ea"/>
<rect x="888" y="193" width="4" height="6" fill="#1050ff"/>
<rect x="892" y="188" width="3" height="5" fill="#0b0fb4"/>
<rect x="895" y="211" width="3" height="8" fill="#08a7a1"/>
<rect x="895" y="205" width="3" height="6" fill="#1050ff"/>
<rect x="895" y="193" width="3" height="6" fill="#0076e8"/>
<rect x="895" y="188" width="3" height="5" fill="#0762f7"/>
<rect x="895" y="181" width="3" height="7" fill="#0d12bd"/>
<rect x="895" y="175" width="3" height="6" fill="#0b0fb4"/>
<rect x="898" y="211" width="4" height="8" fill="#049fad"/>
<rect x="898" y="205" width="4" height="6" fill="#0199b6"/>
<rect x="898" y="188" width="4" height="5" fill="#114dfe"/>
<rect x="902" y="205" width="3" height="6" fill="#0081d9"/>
<rect x="902" y="199" width="3" height="6" fill="#006ff0"/>
<rect x="902" y="193" width="3" height="6" fill="#0e14c4"/>
<rect x="905" y="199" width="4" height="6" fill="#1346fd"/>
<rect x="905" y="193" width="4" height="6" fill="#114afe"/>
<rect x="905" y="188" width="4" height="5" fill="#114bfe"/>
<rect x="905" y="181" width="4" height="7" fill="#172df2"/>
<rect x="909" y="211" width="3" height="8" fill="#008bcc"/>
<rect x="909" y="205" width="3" height="6" fill="#026df2"/>
<rect x="909" y="193" width="3" height="6" fill="#036bf2"/>
<rect x="909" y="188" width="3" height="5" fill="#1050ff"/>
<rect x="909" y="181" width="3" height="7" fill="#0a0dae"/>
<rect x="909" y="175" width="3" height="6" fill="#1247fd"/>
<rect x="912" y="205" width="4" height="6" fill="#007dde"/>
<rect x="912" y="199" width="4" height="6" fill="#0e55fd"/>
<rect x="916" y="205" width="3" height="6" fill="#0b5afa"/>
<rect x="916" y="199" width="3" height="6" fill="#0762f7"/>
<rect x="916" y="193" width="3" height="6" fill="#1832f8"/>
<rect x="919" y="211" width="3" height="8" fill="#0089cf"/>
<rect x="919" y="193" width="3" height="6" fill="#1051ff"/>
<rect x="919" y="175" width="3" height="6" fill="#0b0daf"/>
<rect x="922" y="211" width="4" height="8" fill="#0093bf"/>
<rect x="922" y="205" width="4" height="6" fill="#0077e7"/>
<rect x="922" y="199" width="4" height="6" fill="#0088cf"/>
<rect x="926" y="193" width="3" height="6" fill="#1424e5"/>
<rect x="929" y="193" width="4" height="6" fill="#1527ea"/>
<rect x="933" y="193" width="3" height="6" fill="#0071ee"/>
<rect x="933" y="188" width="3" height="5" fill="#016df1"/>
<rect x="933" y="181" width="3" height="7" fill="#1320dd"/>
<rect x="936" y="205" width="3" height="6" fill="#008bcb"/>
<rect x="936" y="193" width="3" height="6" fill="#0b5afa"/>
<rect x="936" y="188" width="3" height="5" fill="#1246fd"/>
<rect x="936" y="181" width="3" height="7" fill="#0c10b7"/>
<rect x="936" y="175" width="3" height="6" fill="#0a0cac"/>
<rect x="939" y="211" width="4" height="8" fill="#0094be"/>
<rect x="939" y="205" width="4" height="6" fill="#007ce0"/>
<rect x="939" y="188" width="4" height="5" fill="#121dd8"/>
<rect x="939" y="181" width="4" height="7" fill="#1247fd"/>
<rect x="943" y="211" width="3" height="8" fill="#039fae"/>
<rect x="943" y="205" width="3" height="6" fill="#0860f8"/>
<rect x="943" y="193" width="3" height="6" fill="#0070ef"/>
<rect x="943" y="188" width="3" height="5" fill="#104eff"/>
<rect x="943" y="181" width="3" height="7" fill="#1320de"/>
<rect x="946" y="211" width="4" height="8" fill="#0081da"/>
<rect x="946" y="205" width="4" height="6" fill="#0089ce"/>
<rect x="946" y="199" width="4" height="6" fill="#1424e4"/>
<rect x="946" y="193" width="4" height="6" fill="#016df1"/>
<rect x="950" y="211" width="3" height="8" fill="#039fae"/>
<rect x="950" y="199" width="3" height="6" fill="#0071ee"/>
<rect x="950" y="175" width="3" height="6" fill="#08089e"/>
<rect x="953" y="205" width="3" height="6" fill="#0083d6"/>
<rect x="953" y="193" width="3" height="6" fill="#0e54fd"/>
<rect x="953" y="188" width="3" height="5" fill="#104eff"/>
<rect x="953" y="181" width="3" height="7" fill="#1638fa"/>
<rect x="953" y="175" width="3" height="6" fill="#162bf0"/>
<rect x="956" y="211" width="4" height="8" fill="#007ae2"/>
<rect x="956" y="205" width="4" height="6" fill="#0089cf"/>
<rect x="956" y="193" width="4" height="6" fill="#0a5df9"/>
<rect x="956" y="188" width="4" height="5" fill="#0f51fe"/>
<rect x="960" y="211" width="3" height="8" fill="#0097b9"/>
<rect x="960" y="205" width="3" height="6" fill="#007ae3"/>
<rect x="960" y="199" width="3" height="6" fill="#0070f0"/>
<rect x="960" y="193" width="3" height="6" fill="#1247fd"/>
<rect x="960" y="188" width="3" height="5" fill="#1342fc"/>
<rect x="960" y="181" width="3" height="7" fill="#1528eb"/>
<rect x="960" y="175" width="3" height="6" fill="#1321df"/>
<rect x="963" y="193" width="4" height="6" fill="#1527e9"/>
<rect x="963" y="188" width="4" height="5" fill="#153efb"/>
<rect x="963" y="181" width="4" height="7" fill="#153cfb"/>
<rect x="967" y="211" width="3" height="8" fill="#04a0ad"/>
<rect x="967" y="188" width="3" height="5" fill="#1322e1"/>
<rect x="970" y="205" width="4" height="6" fill="#0079e4"/>
<rect x="970" y="181" width="4" height="7" fill="#0f16c9"/>
<rect x="970" y="175" width="4" height="6" fill="#172ef5"/>
<rect x="974" y="193" width="3" height="6" fill="#153cfb"/>
<rect x="977" y="211" width="3" height="8" fill="#008fc5"/>
<rect x="977" y="205" width="3" height="6" fill="#0078e5"/>
<rect x="977" y="199" width="3" height="6" fill="#0c58fb"/>
<rect x="977" y="188" width="3" height="5" fill="#121dd9"/>
<rect x="980" y="211" width="4" height="8" fill="#08a7a1"/>
<rect x="980" y="205" width="4" height="6" fill="#008dc9"/>
<rect x="980" y="199" width="4" height="6" fill="#1248fd"/>
<rect x="980" y="193" width="4" height="6" fill="#0088d0"/>
<rect x="980" y="175" width="4" height="6" fill="#1019d1"/>
<rect x="987" y="205" width="4" height="6" fill="#007be2"/>
<rect x="987" y="199" width="4" height="6" fill="#182ff7"/>
<rect x="987" y="193" width="4" height="6" fill="#121fdc"/>
<rect x="987" y="175" width="4" height="6" fill="#1629ed"/>
<rect x="994" y="211" width="4" height="8" fill="#1bbf72"/>
<rect x="994" y="205" width="4" height="6" fill="#008cca"/>
<rect x="994" y="175" width="4" height="6" fill="#040485"/>
<rect x="998" y="211" width="3" height="8" fill="#0084d5"/>
<rect x="998" y="199" width="3" height="6" fill="#153dfb"/>
<rect x="998" y="181" width="3" height="7" fill="#0e55fd"/>
<rect x="1001" y="205" width="3" height="6" fill="#0078e6"/>
<rect x="1001" y="199" width="3" height="6" fill="#153cfb"/>
<rect x="1004" y="211" width="4" height="8" fill="#039eaf"/>
<rect x="1004" y="188" width="4" height="5" fill="#08089e"/>
<rect x="1008" y="205" width="3" height="6" fill="#007fdc"/>
<rect x="1008" y="175" width="3" height="6" fill="#1019d1"/>
<rect x="1011" y="205" width="4" height="6" fill="#029bb3"/>
<rect x="1011" y="199" width="4" height="6" fill="#0094be"/>
<rect x="1011" y="193" width="4" height="6" fill="#1527e9"/>
<rect x="1015" y="205" width="3" height="6" fill="#05a2a8"/>
<rect x="1015" y="199" width="3" height="6" fill="#0f51fe"/>
<rect x="1015" y="181" width="3" height="7" fill="#1831f8"/>
<rect x="1015" y="175" width="3" height="6" fill="#040485"/>
<rect x="1018" y="211" width="3" height="8" fill="#04a0ac"/>
<rect x="1018" y="181" width="3" height="7" fill="#121dd8"/>
<rect x="1018" y="175" width="3" height="6" fill="#121fdb"/>
<rect x="1025" y="193" width="3" height="6" fill="#007ce1"/>
<rect x="1028" y="193" width="4" height="6" fill="#0f53fe"/>
<rect x="1032" y="211" width="3" height="8" fill="#06a4a6"/>
<rect x="1032" y="188" width="3" height="5" fill="#1344fc"/>
<rect x="1035" y="211" width="3" height="8" fill="#0baf93"/>
<rect x="1035" y="193" width="3" height="6" fill="#0468f4"/>
<rect x="1035" y="188" width="3" height="5" fill="#1246fd"/>
<rect x="1038" y="211" width="4" height="8" fill="#22c467"/>
<rect x="1038" y="205" width="4" height="6" fill="#06a3a7"/>
<rect x="1038" y="199" width="4" height="6" fill="#0088d0"/>
<rect x="1038" y="193" width="4" height="6" fill="#0a5cf9"/>
<rect x="1038" y="188" width="4" height="5" fill="#143ffb"/>
<rect x="1038" y="181" width="4" height="7" fill="#0e55fd"/>
<rect x="1038" y="175" width="4" height="6" fill="#153dfb"/>
<rect x="1042" y="211" width="3" height="8" fill="#9ff021"/>
<rect x="1042" y="205" width="3" height="6" fill="#06a4a7"/>
<rect x="1042" y="199" width="3" height="6" fill="#08a8a0"/>
<rect x="1042" y="193" width="3" height="6" fill="#007ce0"/>
<rect x="1042" y="188" width="3" height="5" fill="#1321e0"/>
<rect x="1042" y="181" width="3" height="7" fill="#1639fa"/>
<rect x="1042" y="175" width="3" height="6" fill="#0a5cf9"/>
<rect x="1045" y="211" width="4" height="8" fill="#10b87f"/>
<rect x="1045" y="181" width="4" height="7" fill="#111cd6"/>
<rect x="1045" y="157" width="4" height="6" fill="#0d12be"/>
<rect x="1049" y="211" width="3" height="8" fill="#26c763"/>
<rect x="1049" y="205" width="3" height="6" fill="#06a4a6"/>
<rect x="1049" y="188" width="3" height="5" fill="#0d56fc"/>
<rect x="1049" y="175" width="3" height="6" fill="#1425e6"/>
<rect x="1052" y="205" width="4" height="6" fill="#008bcb"/>
<rect x="1052" y="199" width="4" height="6" fill="#007ae3"/>
<rect x="1052" y="193" width="4" height="6" fill="#0468f4"/>
<rect x="1052" y="181" width="4" height="7" fill="#1637fa"/>
<rect x="1052" y="175" width="4" height="6" fill="#0c10b9"/>
<rect x="1059" y="211" width="3" height="8" fill="#0089ce"/>
<rect x="1059" y="188" width="3" height="5" fill="#1734f9"/>
<rect x="1059" y="175" width="3" height="6" fill="#1017cd"/>
<rect x="1062" y="211" width="4" height="8" fill="#04a0ac"/>
<rect x="1062" y="181" width="4" height="7" fill="#040485"/>
<rect x="1062" y="175" width="4" height="6" fill="#0a0ba9"/>
<rect x="1066" y="205" width="3" height="6" fill="#008dc8"/>
<rect x="1066" y="181" width="3" height="7" fill="#0f16ca"/>
<rect x="1066" y="169" width="3" height="6" fill="#0809a2"/>
<rect x="1069" y="188" width="4" height="5" fill="#1830f8"/>
<rect x="1069" y="181" width="4" height="7" fill="#1732f8"/>
<rect x="1069" y="175" width="4" height="6" fill="#0c10b7"/>
<rect x="1073" y="211" width="3" height="8" fill="#87ea32"/>
<rect x="1073" y="188" width="3" height="5" fill="#0b5afb"/>
<rect x="1076" y="188" width="4" height="5" fill="#114eff"/>
<rect x="1076" y="181" width="4" height="7" fill="#1322e0"/>
<rect x="1076" y="175" width="4" height="6" fill="#0d12be"/>
<rect x="338" y="145" width="4" height="6" fill="#0a0ba9"/>
<rect x="324" y="151" width="4" height="6" fill="#05058c"/>
<rect x="328" y="151" width="3" height="6" fill="#05058c"/>
<rect x="331" y="151" width="4" height="6" fill="#05058c"/>
<rect x="331" y="163" width="4" height="6" fill="#0e14c4"/>
<rect x="335" y="163" width="3" height="6" fill="#0e14c4"/>
<rect x="314" y="157" width="4" height="6" fill="#0a0ba9"/>
<rect x="311" y="163" width="3" height="6" fill="#07079c"/>
<rect x="314" y="163" width="4" height="6" fill="#07079c"/>
<rect x="321" y="169" width="3" height="6" fill="#0e14c4"/>
<rect x="321" y="175" width="3" height="6" fill="#0c10b7"/>
<rect x="154" y="157" width="3" height="6" fill="#0a0ba9"/>
<rect x="208" y="163" width="4" height="6" fill="#0a0ba9"/>
<rect x="352" y="115" width="3" height="6" fill="#07079c"/>
<rect x="451" y="151" width="3" height="6" fill="#07079c"/>
<rect x="625" y="157" width="3" height="6" fill="#07079c"/>
<rect x="632" y="157" width="3" height="6" fill="#07079c"/>
<rect x="656" y="151" width="3" height="6" fill="#07079c"/>
<rect x="499" y="163" width="3" height="6" fill="#0c10b7"/>
<rect x="536" y="163" width="4" height="6" fill="#0e14c4"/>
<rect x="888" y="157" width="4" height="6" fill="#0a0ba9"/>
<rect x="953" y="157" width="3" height="6" fill="#0a0ba9"/>
<rect x="1001" y="157" width="3" height="6" fill="#07079c"/>
<rect x="1025" y="157" width="3" height="6" fill="#0e14c4"/>
<rect x="1069" y="157" width="4" height="6" fill="#1019d1"/>
<rect x="1066" y="163" width="3" height="6" fill="#1019d1"/>
<rect x="1062" y="169" width="4" height="6" fill="#0e14c4"/>
<rect x="1004" y="163" width="4" height="6" fill="#0e14c4"/>
</g>
<line x1="95.00" y1="212.50" x2="91.00" y2="212.50" stroke="#111" stroke-width="1" shape-rendering="crispEdges"/>
<line x1="95.00" y1="200.50" x2="91.00" y2="200.50" stroke="#111" stroke-width="1" shape-rendering="crispEdges"/>
<line x1="95.00" y1="190.50" x2="91.00" y2="190.50" stroke="#111" stroke-width="1" shape-rendering="crispEdges"/>
<line x1="95.00" y1="183.50" x2="91.00" y2="183.50" stroke="#111" stroke-width="1" shape-rendering="crispEdges"/>
<line x1="95.00" y1="176.50" x2="91.00" y2="176.50" stroke="#111" stroke-width="1" shape-rendering="crispEdges"/>
<line x1="95.00" y1="170.50" x2="91.00" y2="170.50" stroke="#111" stroke-width="1" shape-rendering="crispEdges"/>
<line x1="95.00" y1="165.50" x2="91.00" y2="165.50" stroke="#111" stroke-width="1" shape-rendering="crispEdges"/>
<line x1="95.00" y1="161.50" x2="87.00" y2="161.50" stroke="#111" stroke-width="1" shape-rendering="crispEdges"/>
<line x1="95.00" y1="132.50" x2="91.00" y2="132.50" stroke="#111" stroke-width="1" shape-rendering="crispEdges"/>
<line x1="95.00" y1="115.50" x2="91.00" y2="115.50" stroke="#111" stroke-width="1" shape-rendering="crispEdges"/>
<line x1="95.00" y1="103.50" x2="91.00" y2="103.50" stroke="#111" stroke-width="1" shape-rendering="crispEdges"/>
<line x1="95.00" y1="93.50" x2="91.00" y2="93.50" stroke="#111" stroke-width="1" shape-rendering="crispEdges"/>
<line x1="95.00" y1="86.50" x2="91.00" y2="86.50" stroke="#111" stroke-width="1" shape-rendering="crispEdges"/>
<line x1="95.00" y1="79.50" x2="91.00" y2="79.50" stroke="#111" stroke-width="1" shape-rendering="crispEdges"/>
<line x1="95.00" y1="73.50" x2="91.00" y2="73.50" stroke="#111" stroke-width="1" shape-rendering="crispEdges"/>
<line x1="95.00" y1="68.50" x2="91.00" y2="68.50" stroke="#111" stroke-width="1" shape-rendering="crispEdges"/>
<line x1="95.00" y1="64.50" x2="87.00" y2="64.50" stroke="#111" stroke-width="1" shape-rendering="crispEdges"/>
<line x1="95.00" y1="35.50" x2="91.00" y2="35.50" stroke="#111" stroke-width="1" shape-rendering="crispEdges"/>
<text x="81.50" y="72.00" text-anchor="end" font-size="12">10<tspan dx="1.5" dy="-6" font-size="10.5">2</tspan></text>
<text x="81.50" y="169.00" text-anchor="end" font-size="12">10<tspan dx="1.5" dy="-6" font-size="10.5">1</tspan></text>
<text transform="translate(50.00,124.50) rotate(-90)" text-anchor="middle" font-size="11.5" >Energy (keV)</text>
<text x="10.50" y="28.00" text-anchor="start" font-size="11.6" >CHEMS Pr.</text>
<text x="10.50" y="209.50" text-anchor="start" font-size="11.6" >LEMMS Pr.</text>
<line x1="136.50" y1="218.00" x2="136.50" y2="220.00" stroke="#3a3a3a" stroke-width="1" shape-rendering="crispEdges"/>
<line x1="177.50" y1="218.00" x2="177.50" y2="220.00" stroke="#3a3a3a" stroke-width="1" shape-rendering="crispEdges"/>
<line x1="218.50" y1="218.00" x2="218.50" y2="220.00" stroke="#3a3a3a" stroke-width="1" shape-rendering="crispEdges"/>
<line x1="259.50" y1="218.00" x2="259.50" y2="220.00" stroke="#3a3a3a" stroke-width="1" shape-rendering="crispEdges"/>
<line x1="300.50" y1="218.00" x2="300.50" y2="220.00" stroke="#3a3a3a" stroke-width="1" shape-rendering="crispEdges"/>
<line x1="341.50" y1="218.00" x2="341.50" y2="220.00" stroke="#3a3a3a" stroke-width="1" shape-rendering="crispEdges"/>
<line x1="382.50" y1="218.00" x2="382.50" y2="220.00" stroke="#3a3a3a" stroke-width="1" shape-rendering="crispEdges"/>
<line x1="423.50" y1="218.00" x2="423.50" y2="220.00" stroke="#3a3a3a" stroke-width="1" shape-rendering="crispEdges"/>
<line x1="464.50" y1="218.00" x2="464.50" y2="220.00" stroke="#3a3a3a" stroke-width="1" shape-rendering="crispEdges"/>
<line x1="505.50" y1="218.00" x2="505.50" y2="220.00" stroke="#3a3a3a" stroke-width="1" shape-rendering="crispEdges"/>
<line x1="546.50" y1="218.00" x2="546.50" y2="220.00" stroke="#3a3a3a" stroke-width="1" shape-rendering="crispEdges"/>
<line x1="587.50" y1="218.00" x2="587.50" y2="220.00" stroke="#3a3a3a" stroke-width="1" shape-rendering="crispEdges"/>
<line x1="628.50" y1="218.00" x2="628.50" y2="220.00" stroke="#3a3a3a" stroke-width="1" shape-rendering="crispEdges"/>
<line x1="669.50" y1="218.00" x2="669.50" y2="220.00" stroke="#3a3a3a" stroke-width="1" shape-rendering="crispEdges"/>
<line x1="710.50" y1="218.00" x2="710.50" y2="220.00" stroke="#3a3a3a" stroke-width="1" shape-rendering="crispEdges"/>
<line x1="751.50" y1="218.00" x2="751.50" y2="220.00" stroke="#3a3a3a" stroke-width="1" shape-rendering="crispEdges"/>
<line x1="792.50" y1="218.00" x2="792.50" y2="220.00" stroke="#3a3a3a" stroke-width="1" shape-rendering="crispEdges"/>
<line x1="833.50" y1="218.00" x2="833.50" y2="220.00" stroke="#3a3a3a" stroke-width="1" shape-rendering="crispEdges"/>
<line x1="874.50" y1="218.00" x2="874.50" y2="220.00" stroke="#3a3a3a" stroke-width="1" shape-rendering="crispEdges"/>
<line x1="915.50" y1="218.00" x2="915.50" y2="220.00" stroke="#3a3a3a" stroke-width="1" shape-rendering="crispEdges"/>
<line x1="956.50" y1="218.00" x2="956.50" y2="220.00" stroke="#3a3a3a" stroke-width="1" shape-rendering="crispEdges"/>
<line x1="997.50" y1="218.00" x2="997.50" y2="220.00" stroke="#3a3a3a" stroke-width="1" shape-rendering="crispEdges"/>
<line x1="1038.50" y1="218.00" x2="1038.50" y2="220.00" stroke="#3a3a3a" stroke-width="1" shape-rendering="crispEdges"/>
<rect x="1092" y="30" width="12.5" height="190" fill="url(#cb)"/>
<line x1="1104.50" y1="30.00" x2="1104.50" y2="220.00" stroke="#111" stroke-width="1" shape-rendering="crispEdges"/>
<line x1="1104.00" y1="219.50" x2="1109.00" y2="219.50" stroke="#111" stroke-width="1" shape-rendering="crispEdges"/>
<line x1="1104.00" y1="214.50" x2="1109.00" y2="214.50" stroke="#111" stroke-width="1" shape-rendering="crispEdges"/>
<line x1="1104.00" y1="211.50" x2="1109.00" y2="211.50" stroke="#111" stroke-width="1" shape-rendering="crispEdges"/>
<line x1="1104.00" y1="207.50" x2="1109.00" y2="207.50" stroke="#111" stroke-width="1" shape-rendering="crispEdges"/>
<line x1="1104.00" y1="204.50" x2="1109.00" y2="204.50" stroke="#111" stroke-width="1" shape-rendering="crispEdges"/>
<line x1="1104.00" y1="202.50" x2="1113.00" y2="202.50" stroke="#111" stroke-width="1" shape-rendering="crispEdges"/>
<line x1="1104.00" y1="184.50" x2="1109.00" y2="184.50" stroke="#111" stroke-width="1" shape-rendering="crispEdges"/>
<line x1="1104.00" y1="174.50" x2="1109.00" y2="174.50" stroke="#111" stroke-width="1" shape-rendering="crispEdges"/>
<line x1="1104.00" y1="167.50" x2="1109.00" y2="167.50" stroke="#111" stroke-width="1" shape-rendering="crispEdges"/>
<line x1="1104.00" y1="161.50" x2="1109.00" y2="161.50" stroke="#111" stroke-width="1" shape-rendering="crispEdges"/>
<line x1="1104.00" y1="157.50" x2="1109.00" y2="157.50" stroke="#111" stroke-width="1" shape-rendering="crispEdges"/>
<line x1="1104.00" y1="153.50" x2="1109.00" y2="153.50" stroke="#111" stroke-width="1" shape-rendering="crispEdges"/>
<line x1="1104.00" y1="149.50" x2="1109.00" y2="149.50" stroke="#111" stroke-width="1" shape-rendering="crispEdges"/>
<line x1="1104.00" y1="147.50" x2="1109.00" y2="147.50" stroke="#111" stroke-width="1" shape-rendering="crispEdges"/>
<line x1="1104.00" y1="144.50" x2="1113.00" y2="144.50" stroke="#111" stroke-width="1" shape-rendering="crispEdges"/>
<line x1="1104.00" y1="127.50" x2="1109.00" y2="127.50" stroke="#111" stroke-width="1" shape-rendering="crispEdges"/>
<line x1="1104.00" y1="116.50" x2="1109.00" y2="116.50" stroke="#111" stroke-width="1" shape-rendering="crispEdges"/>
<line x1="1104.00" y1="109.50" x2="1109.00" y2="109.50" stroke="#111" stroke-width="1" shape-rendering="crispEdges"/>
<line x1="1104.00" y1="104.50" x2="1109.00" y2="104.50" stroke="#111" stroke-width="1" shape-rendering="crispEdges"/>
<line x1="1104.00" y1="99.50" x2="1109.00" y2="99.50" stroke="#111" stroke-width="1" shape-rendering="crispEdges"/>
<line x1="1104.00" y1="95.50" x2="1109.00" y2="95.50" stroke="#111" stroke-width="1" shape-rendering="crispEdges"/>
<line x1="1104.00" y1="92.50" x2="1109.00" y2="92.50" stroke="#111" stroke-width="1" shape-rendering="crispEdges"/>
<line x1="1104.00" y1="89.50" x2="1109.00" y2="89.50" stroke="#111" stroke-width="1" shape-rendering="crispEdges"/>
<line x1="1104.00" y1="86.50" x2="1113.00" y2="86.50" stroke="#111" stroke-width="1" shape-rendering="crispEdges"/>
<line x1="1104.00" y1="69.50" x2="1109.00" y2="69.50" stroke="#111" stroke-width="1" shape-rendering="crispEdges"/>
<line x1="1104.00" y1="59.50" x2="1109.00" y2="59.50" stroke="#111" stroke-width="1" shape-rendering="crispEdges"/>
<line x1="1104.00" y1="51.50" x2="1109.00" y2="51.50" stroke="#111" stroke-width="1" shape-rendering="crispEdges"/>
<line x1="1104.00" y1="46.50" x2="1109.00" y2="46.50" stroke="#111" stroke-width="1" shape-rendering="crispEdges"/>
<line x1="1104.00" y1="41.50" x2="1109.00" y2="41.50" stroke="#111" stroke-width="1" shape-rendering="crispEdges"/>
<line x1="1104.00" y1="37.50" x2="1109.00" y2="37.50" stroke="#111" stroke-width="1" shape-rendering="crispEdges"/>
<line x1="1104.00" y1="34.50" x2="1109.00" y2="34.50" stroke="#111" stroke-width="1" shape-rendering="crispEdges"/>
<line x1="1104.00" y1="31.50" x2="1109.00" y2="31.50" stroke="#111" stroke-width="1" shape-rendering="crispEdges"/>
<line x1="1104.00" y1="29.50" x2="1113.00" y2="29.50" stroke="#111" stroke-width="1" shape-rendering="crispEdges"/>
<text x="1117.50" y="37.00" font-size="12">10<tspan dx="1.5" dy="-6" font-size="10.5">-9</tspan></text>
<text x="1117.50" y="94.50" font-size="12">10<tspan dx="1.5" dy="-6" font-size="10.5">-10</tspan></text>
<text x="1117.50" y="152.30" font-size="12">10<tspan dx="1.5" dy="-6" font-size="10.5">-11</tspan></text>
<text x="1117.50" y="210.00" font-size="12">10<tspan dx="1.5" dy="-6" font-size="10.5">-12</tspan></text>
<text transform="translate(1164.50,123.80) rotate(90)" text-anchor="middle" font-size="11.5" >pressure dyne/cm^2</text>
<rect x="95" y="225" width="986" height="191.3" fill="#000"/>
<line x1="136.50" y1="414.00" x2="136.50" y2="416.00" stroke="#3a3a3a" stroke-width="1" shape-rendering="crispEdges"/>
<line x1="177.50" y1="414.00" x2="177.50" y2="416.00" stroke="#3a3a3a" stroke-width="1" shape-rendering="crispEdges"/>
<line x1="218.50" y1="414.00" x2="218.50" y2="416.00" stroke="#3a3a3a" stroke-width="1" shape-rendering="crispEdges"/>
<line x1="259.50" y1="414.00" x2="259.50" y2="416.00" stroke="#3a3a3a" stroke-width="1" shape-rendering="crispEdges"/>
<line x1="300.50" y1="414.00" x2="300.50" y2="416.00" stroke="#3a3a3a" stroke-width="1" shape-rendering="crispEdges"/>
<line x1="341.50" y1="414.00" x2="341.50" y2="416.00" stroke="#3a3a3a" stroke-width="1" shape-rendering="crispEdges"/>
<line x1="382.50" y1="414.00" x2="382.50" y2="416.00" stroke="#3a3a3a" stroke-width="1" shape-rendering="crispEdges"/>
<line x1="423.50" y1="414.00" x2="423.50" y2="416.00" stroke="#3a3a3a" stroke-width="1" shape-rendering="crispEdges"/>
<line x1="464.50" y1="414.00" x2="464.50" y2="416.00" stroke="#3a3a3a" stroke-width="1" shape-rendering="crispEdges"/>
<line x1="505.50" y1="414.00" x2="505.50" y2="416.00" stroke="#3a3a3a" stroke-width="1" shape-rendering="crispEdges"/>
<line x1="546.50" y1="414.00" x2="546.50" y2="416.00" stroke="#3a3a3a" stroke-width="1" shape-rendering="crispEdges"/>
<line x1="587.50" y1="414.00" x2="587.50" y2="416.00" stroke="#3a3a3a" stroke-width="1" shape-rendering="crispEdges"/>
<line x1="628.50" y1="414.00" x2="628.50" y2="416.00" stroke="#3a3a3a" stroke-width="1" shape-rendering="crispEdges"/>
<line x1="669.50" y1="414.00" x2="669.50" y2="416.00" stroke="#3a3a3a" stroke-width="1" shape-rendering="crispEdges"/>
<line x1="710.50" y1="414.00" x2="710.50" y2="416.00" stroke="#3a3a3a" stroke-width="1" shape-rendering="crispEdges"/>
<line x1="751.50" y1="414.00" x2="751.50" y2="416.00" stroke="#3a3a3a" stroke-width="1" shape-rendering="crispEdges"/>
<line x1="792.50" y1="414.00" x2="792.50" y2="416.00" stroke="#3a3a3a" stroke-width="1" shape-rendering="crispEdges"/>
<line x1="833.50" y1="414.00" x2="833.50" y2="416.00" stroke="#3a3a3a" stroke-width="1" shape-rendering="crispEdges"/>
<line x1="874.50" y1="414.00" x2="874.50" y2="416.00" stroke="#3a3a3a" stroke-width="1" shape-rendering="crispEdges"/>
<line x1="915.50" y1="414.00" x2="915.50" y2="416.00" stroke="#3a3a3a" stroke-width="1" shape-rendering="crispEdges"/>
<line x1="956.50" y1="414.00" x2="956.50" y2="416.00" stroke="#3a3a3a" stroke-width="1" shape-rendering="crispEdges"/>
<line x1="997.50" y1="414.00" x2="997.50" y2="416.00" stroke="#3a3a3a" stroke-width="1" shape-rendering="crispEdges"/>
<line x1="1038.50" y1="414.00" x2="1038.50" y2="416.00" stroke="#3a3a3a" stroke-width="1" shape-rendering="crispEdges"/>
<line x1="95.00" y1="407.50" x2="91.00" y2="407.50" stroke="#111" stroke-width="1" shape-rendering="crispEdges"/>
<line x1="95.00" y1="390.50" x2="91.00" y2="390.50" stroke="#111" stroke-width="1" shape-rendering="crispEdges"/>
<line x1="95.00" y1="378.50" x2="91.00" y2="378.50" stroke="#111" stroke-width="1" shape-rendering="crispEdges"/>
<line x1="95.00" y1="367.50" x2="91.00" y2="367.50" stroke="#111" stroke-width="1" shape-rendering="crispEdges"/>
<line x1="95.00" y1="359.50" x2="91.00" y2="359.50" stroke="#111" stroke-width="1" shape-rendering="crispEdges"/>
<line x1="95.00" y1="351.50" x2="91.00" y2="351.50" stroke="#111" stroke-width="1" shape-rendering="crispEdges"/>
<line x1="95.00" y1="344.50" x2="91.00" y2="344.50" stroke="#111" stroke-width="1" shape-rendering="crispEdges"/>
<line x1="95.00" y1="339.50" x2="87.00" y2="339.50" stroke="#111" stroke-width="1" shape-rendering="crispEdges"/>
<line x1="95.00" y1="333.50" x2="91.00" y2="333.50" stroke="#111" stroke-width="1" shape-rendering="crispEdges"/>
<line x1="95.00" y1="328.50" x2="91.00" y2="328.50" stroke="#111" stroke-width="1" shape-rendering="crispEdges"/>
<line x1="95.00" y1="324.50" x2="91.00" y2="324.50" stroke="#111" stroke-width="1" shape-rendering="crispEdges"/>
<line x1="95.00" y1="319.50" x2="91.00" y2="319.50" stroke="#111" stroke-width="1" shape-rendering="crispEdges"/>
<line x1="95.00" y1="316.50" x2="91.00" y2="316.50" stroke="#111" stroke-width="1" shape-rendering="crispEdges"/>
<line x1="95.00" y1="312.50" x2="91.00" y2="312.50" stroke="#111" stroke-width="1" shape-rendering="crispEdges"/>
<line x1="95.00" y1="308.50" x2="91.00" y2="308.50" stroke="#111" stroke-width="1" shape-rendering="crispEdges"/>
<line x1="95.00" y1="305.50" x2="91.00" y2="305.50" stroke="#111" stroke-width="1" shape-rendering="crispEdges"/>
<line x1="95.00" y1="302.50" x2="91.00" y2="302.50" stroke="#111" stroke-width="1" shape-rendering="crispEdges"/>
<line x1="95.00" y1="299.50" x2="87.00" y2="299.50" stroke="#111" stroke-width="1" shape-rendering="crispEdges"/>
<line x1="95.00" y1="297.50" x2="91.00" y2="297.50" stroke="#111" stroke-width="1" shape-rendering="crispEdges"/>
<line x1="95.00" y1="294.50" x2="91.00" y2="294.50" stroke="#111" stroke-width="1" shape-rendering="crispEdges"/>
<line x1="95.00" y1="291.50" x2="91.00" y2="291.50" stroke="#111" stroke-width="1" shape-rendering="crispEdges"/>
<line x1="95.00" y1="289.50" x2="91.00" y2="289.50" stroke="#111" stroke-width="1" shape-rendering="crispEdges"/>
<line x1="95.00" y1="287.50" x2="91.00" y2="287.50" stroke="#111" stroke-width="1" shape-rendering="crispEdges"/>
<line x1="95.00" y1="284.50" x2="91.00" y2="284.50" stroke="#111" stroke-width="1" shape-rendering="crispEdges"/>
<line x1="95.00" y1="282.50" x2="91.00" y2="282.50" stroke="#111" stroke-width="1" shape-rendering="crispEdges"/>
<line x1="95.00" y1="280.50" x2="91.00" y2="280.50" stroke="#111" stroke-width="1" shape-rendering="crispEdges"/>
<line x1="95.00" y1="278.50" x2="91.00" y2="278.50" stroke="#111" stroke-width="1" shape-rendering="crispEdges"/>
<line x1="95.00" y1="276.50" x2="87.00" y2="276.50" stroke="#111" stroke-width="1" shape-rendering="crispEdges"/>
<line x1="95.00" y1="275.50" x2="91.00" y2="275.50" stroke="#111" stroke-width="1" shape-rendering="crispEdges"/>
<line x1="95.00" y1="273.50" x2="91.00" y2="273.50" stroke="#111" stroke-width="1" shape-rendering="crispEdges"/>
<line x1="95.00" y1="271.50" x2="91.00" y2="271.50" stroke="#111" stroke-width="1" shape-rendering="crispEdges"/>
<line x1="95.00" y1="269.50" x2="91.00" y2="269.50" stroke="#111" stroke-width="1" shape-rendering="crispEdges"/>
<line x1="95.00" y1="268.50" x2="91.00" y2="268.50" stroke="#111" stroke-width="1" shape-rendering="crispEdges"/>
<line x1="95.00" y1="266.50" x2="91.00" y2="266.50" stroke="#111" stroke-width="1" shape-rendering="crispEdges"/>
<line x1="95.00" y1="265.50" x2="91.00" y2="265.50" stroke="#111" stroke-width="1" shape-rendering="crispEdges"/>
<line x1="95.00" y1="263.50" x2="91.00" y2="263.50" stroke="#111" stroke-width="1" shape-rendering="crispEdges"/>
<line x1="95.00" y1="262.50" x2="91.00" y2="262.50" stroke="#111" stroke-width="1" shape-rendering="crispEdges"/>
<line x1="95.00" y1="260.50" x2="87.00" y2="260.50" stroke="#111" stroke-width="1" shape-rendering="crispEdges"/>
<line x1="95.00" y1="259.50" x2="91.00" y2="259.50" stroke="#111" stroke-width="1" shape-rendering="crispEdges"/>
<line x1="95.00" y1="257.50" x2="91.00" y2="257.50" stroke="#111" stroke-width="1" shape-rendering="crispEdges"/>
<line x1="95.00" y1="256.50" x2="91.00" y2="256.50" stroke="#111" stroke-width="1" shape-rendering="crispEdges"/>
<line x1="95.00" y1="255.50" x2="91.00" y2="255.50" stroke="#111" stroke-width="1" shape-rendering="crispEdges"/>
<line x1="95.00" y1="253.50" x2="91.00" y2="253.50" stroke="#111" stroke-width="1" shape-rendering="crispEdges"/>
<line x1="95.00" y1="252.50" x2="91.00" y2="252.50" stroke="#111" stroke-width="1" shape-rendering="crispEdges"/>
<line x1="95.00" y1="251.50" x2="91.00" y2="251.50" stroke="#111" stroke-width="1" shape-rendering="crispEdges"/>
<line x1="95.00" y1="250.50" x2="91.00" y2="250.50" stroke="#111" stroke-width="1" shape-rendering="crispEdges"/>
<line x1="95.00" y1="249.50" x2="91.00" y2="249.50" stroke="#111" stroke-width="1" shape-rendering="crispEdges"/>
<line x1="95.00" y1="247.50" x2="87.00" y2="247.50" stroke="#111" stroke-width="1" shape-rendering="crispEdges"/>
<line x1="95.00" y1="246.50" x2="91.00" y2="246.50" stroke="#111" stroke-width="1" shape-rendering="crispEdges"/>
<line x1="95.00" y1="245.50" x2="91.00" y2="245.50" stroke="#111" stroke-width="1" shape-rendering="crispEdges"/>
<line x1="95.00" y1="244.50" x2="91.00" y2="244.50" stroke="#111" stroke-width="1" shape-rendering="crispEdges"/>
<line x1="95.00" y1="243.50" x2="91.00" y2="243.50" stroke="#111" stroke-width="1" shape-rendering="crispEdges"/>
<line x1="95.00" y1="242.50" x2="91.00" y2="242.50" stroke="#111" stroke-width="1" shape-rendering="crispEdges"/>
<line x1="95.00" y1="241.50" x2="91.00" y2="241.50" stroke="#111" stroke-width="1" shape-rendering="crispEdges"/>
<line x1="95.00" y1="240.50" x2="91.00" y2="240.50" stroke="#111" stroke-width="1" shape-rendering="crispEdges"/>
<line x1="95.00" y1="239.50" x2="91.00" y2="239.50" stroke="#111" stroke-width="1" shape-rendering="crispEdges"/>
<line x1="95.00" y1="238.50" x2="91.00" y2="238.50" stroke="#111" stroke-width="1" shape-rendering="crispEdges"/>
<line x1="95.00" y1="237.50" x2="87.00" y2="237.50" stroke="#111" stroke-width="1" shape-rendering="crispEdges"/>
<line x1="95.00" y1="236.50" x2="91.00" y2="236.50" stroke="#111" stroke-width="1" shape-rendering="crispEdges"/>
<line x1="95.00" y1="235.50" x2="91.00" y2="235.50" stroke="#111" stroke-width="1" shape-rendering="crispEdges"/>
<line x1="95.00" y1="234.50" x2="91.00" y2="234.50" stroke="#111" stroke-width="1" shape-rendering="crispEdges"/>
<line x1="95.00" y1="234.50" x2="91.00" y2="234.50" stroke="#111" stroke-width="1" shape-rendering="crispEdges"/>
<line x1="95.00" y1="233.50" x2="91.00" y2="233.50" stroke="#111" stroke-width="1" shape-rendering="crispEdges"/>
<line x1="95.00" y1="232.50" x2="91.00" y2="232.50" stroke="#111" stroke-width="1" shape-rendering="crispEdges"/>
<line x1="95.00" y1="231.50" x2="91.00" y2="231.50" stroke="#111" stroke-width="1" shape-rendering="crispEdges"/>
<line x1="95.00" y1="230.50" x2="91.00" y2="230.50" stroke="#111" stroke-width="1" shape-rendering="crispEdges"/>
<line x1="95.00" y1="229.50" x2="91.00" y2="229.50" stroke="#111" stroke-width="1" shape-rendering="crispEdges"/>
<line x1="95.00" y1="228.50" x2="87.00" y2="228.50" stroke="#111" stroke-width="1" shape-rendering="crispEdges"/>
<line x1="95.00" y1="228.50" x2="91.00" y2="228.50" stroke="#111" stroke-width="1" shape-rendering="crispEdges"/>
<line x1="95.00" y1="227.50" x2="91.00" y2="227.50" stroke="#111" stroke-width="1" shape-rendering="crispEdges"/>
<line x1="95.00" y1="226.50" x2="91.00" y2="226.50" stroke="#111" stroke-width="1" shape-rendering="crispEdges"/>
<line x1="95.00" y1="225.50" x2="91.00" y2="225.50" stroke="#111" stroke-width="1" shape-rendering="crispEdges"/>
<line x1="95.00" y1="225.50" x2="91.00" y2="225.50" stroke="#111" stroke-width="1" shape-rendering="crispEdges"/>
<text x="81.50" y="234.37" text-anchor="end" font-size="12" >700.</text>
<text x="81.50" y="243.08" text-anchor="end" font-size="12" >600.</text>
<text x="81.50" y="253.39" text-anchor="end" font-size="12" >500.</text>
<text x="81.50" y="266.01" text-anchor="end" font-size="12" >400.</text>
<text x="81.50" y="282.28" text-anchor="end" font-size="12" >300.</text>
<text x="81.50" y="305.21" text-anchor="end" font-size="12" >200.</text>
<text x="81.50" y="344.40" text-anchor="end" font-size="12" >100.</text>
<text transform="translate(45.75,320.50) rotate(-90)" text-anchor="middle" font-size="11.5" >Energy (keV)</text>
<rect x="1092" y="226.3" width="12.5" height="190.0" fill="url(#cb)"/>
<line x1="1104.50" y1="226.00" x2="1104.50" y2="416.00" stroke="#111" stroke-width="1" shape-rendering="crispEdges"/>
<line x1="1104.00" y1="415.50" x2="1109.00" y2="415.50" stroke="#111" stroke-width="1" shape-rendering="crispEdges"/>
<line x1="1104.00" y1="411.50" x2="1109.00" y2="411.50" stroke="#111" stroke-width="1" shape-rendering="crispEdges"/>
<line x1="1104.00" y1="407.50" x2="1109.00" y2="407.50" stroke="#111" stroke-width="1" shape-rendering="crispEdges"/>
<line x1="1104.00" y1="404.50" x2="1109.00" y2="404.50" stroke="#111" stroke-width="1" shape-rendering="crispEdges"/>
<line x1="1104.00" y1="401.50" x2="1109.00" y2="401.50" stroke="#111" stroke-width="1" shape-rendering="crispEdges"/>
<line x1="1104.00" y1="398.50" x2="1113.00" y2="398.50" stroke="#111" stroke-width="1" shape-rendering="crispEdges"/>
<line x1="1104.00" y1="381.50" x2="1109.00" y2="381.50" stroke="#111" stroke-width="1" shape-rendering="crispEdges"/>
<line x1="1104.00" y1="371.50" x2="1109.00" y2="371.50" stroke="#111" stroke-width="1" shape-rendering="crispEdges"/>
<line x1="1104.00" y1="363.50" x2="1109.00" y2="363.50" stroke="#111" stroke-width="1" shape-rendering="crispEdges"/>
<line x1="1104.00" y1="358.50" x2="1109.00" y2="358.50" stroke="#111" stroke-width="1" shape-rendering="crispEdges"/>
<line x1="1104.00" y1="353.50" x2="1109.00" y2="353.50" stroke="#111" stroke-width="1" shape-rendering="crispEdges"/>
<line x1="1104.00" y1="349.50" x2="1109.00" y2="349.50" stroke="#111" stroke-width="1" shape-rendering="crispEdges"/>
<line x1="1104.00" y1="346.50" x2="1109.00" y2="346.50" stroke="#111" stroke-width="1" shape-rendering="crispEdges"/>
<line x1="1104.00" y1="343.50" x2="1109.00" y2="343.50" stroke="#111" stroke-width="1" shape-rendering="crispEdges"/>
<line x1="1104.00" y1="340.50" x2="1113.00" y2="340.50" stroke="#111" stroke-width="1" shape-rendering="crispEdges"/>
<line x1="1104.00" y1="323.50" x2="1109.00" y2="323.50" stroke="#111" stroke-width="1" shape-rendering="crispEdges"/>
<line x1="1104.00" y1="313.50" x2="1109.00" y2="313.50" stroke="#111" stroke-width="1" shape-rendering="crispEdges"/>
<line x1="1104.00" y1="306.50" x2="1109.00" y2="306.50" stroke="#111" stroke-width="1" shape-rendering="crispEdges"/>
<line x1="1104.00" y1="300.50" x2="1109.00" y2="300.50" stroke="#111" stroke-width="1" shape-rendering="crispEdges"/>
<line x1="1104.00" y1="296.50" x2="1109.00" y2="296.50" stroke="#111" stroke-width="1" shape-rendering="crispEdges"/>
<line x1="1104.00" y1="292.50" x2="1109.00" y2="292.50" stroke="#111" stroke-width="1" shape-rendering="crispEdges"/>
<line x1="1104.00" y1="288.50" x2="1109.00" y2="288.50" stroke="#111" stroke-width="1" shape-rendering="crispEdges"/>
<line x1="1104.00" y1="285.50" x2="1109.00" y2="285.50" stroke="#111" stroke-width="1" shape-rendering="crispEdges"/>
<line x1="1104.00" y1="283.50" x2="1113.00" y2="283.50" stroke="#111" stroke-width="1" shape-rendering="crispEdges"/>
<line x1="1104.00" y1="265.50" x2="1109.00" y2="265.50" stroke="#111" stroke-width="1" shape-rendering="crispEdges"/>
<line x1="1104.00" y1="255.50" x2="1109.00" y2="255.50" stroke="#111" stroke-width="1" shape-rendering="crispEdges"/>
<line x1="1104.00" y1="248.50" x2="1109.00" y2="248.50" stroke="#111" stroke-width="1" shape-rendering="crispEdges"/>
<line x1="1104.00" y1="242.50" x2="1109.00" y2="242.50" stroke="#111" stroke-width="1" shape-rendering="crispEdges"/>
<line x1="1104.00" y1="238.50" x2="1109.00" y2="238.50" stroke="#111" stroke-width="1" shape-rendering="crispEdges"/>
<line x1="1104.00" y1="234.50" x2="1109.00" y2="234.50" stroke="#111" stroke-width="1" shape-rendering="crispEdges"/>
<line x1="1104.00" y1="231.50" x2="1109.00" y2="231.50" stroke="#111" stroke-width="1" shape-rendering="crispEdges"/>
<line x1="1104.00" y1="228.50" x2="1109.00" y2="228.50" stroke="#111" stroke-width="1" shape-rendering="crispEdges"/>
<line x1="1104.00" y1="225.50" x2="1113.00" y2="225.50" stroke="#111" stroke-width="1" shape-rendering="crispEdges"/>
<text x="1117.50" y="233.50" font-size="12">10<tspan dx="1.5" dy="-6" font-size="10.5">-9</tspan></text>
<text x="1117.50" y="290.50" font-size="12">10<tspan dx="1.5" dy="-6" font-size="10.5">-10</tspan></text>
<text x="1117.50" y="349.00" font-size="12">10<tspan dx="1.5" dy="-6" font-size="10.5">-11</tspan></text>
<text x="1117.50" y="406.50" font-size="12">10<tspan dx="1.5" dy="-6" font-size="10.5">-12</tspan></text>
<text transform="translate(1164.50,320.00) rotate(90)" text-anchor="middle" font-size="11.5" >pressure dyne/cm^2</text>
<rect x="95.5" y="420.5" width="985" height="89.0" fill="#fff" stroke="#111" stroke-width="1"/>
<line x1="136.50" y1="507.00" x2="136.50" y2="510.00" stroke="#222" stroke-width="1" shape-rendering="crispEdges"/>
<line x1="177.50" y1="507.00" x2="177.50" y2="510.00" stroke="#222" stroke-width="1" shape-rendering="crispEdges"/>
<line x1="218.50" y1="507.00" x2="218.50" y2="510.00" stroke="#222" stroke-width="1" shape-rendering="crispEdges"/>
<line x1="259.50" y1="507.00" x2="259.50" y2="510.00" stroke="#222" stroke-width="1" shape-rendering="crispEdges"/>
<line x1="300.50" y1="507.00" x2="300.50" y2="510.00" stroke="#222" stroke-width="1" shape-rendering="crispEdges"/>
<line x1="341.50" y1="507.00" x2="341.50" y2="510.00" stroke="#222" stroke-width="1" shape-rendering="crispEdges"/>
<line x1="382.50" y1="507.00" x2="382.50" y2="510.00" stroke="#222" stroke-width="1" shape-rendering="crispEdges"/>
<line x1="423.50" y1="507.00" x2="423.50" y2="510.00" stroke="#222" stroke-width="1" shape-rendering="crispEdges"/>
<line x1="464.50" y1="507.00" x2="464.50" y2="510.00" stroke="#222" stroke-width="1" shape-rendering="crispEdges"/>
<line x1="505.50" y1="507.00" x2="505.50" y2="510.00" stroke="#222" stroke-width="1" shape-rendering="crispEdges"/>
<line x1="546.50" y1="507.00" x2="546.50" y2="510.00" stroke="#222" stroke-width="1" shape-rendering="crispEdges"/>
<line x1="587.50" y1="507.00" x2="587.50" y2="510.00" stroke="#222" stroke-width="1" shape-rendering="crispEdges"/>
<line x1="628.50" y1="507.00" x2="628.50" y2="510.00" stroke="#222" stroke-width="1" shape-rendering="crispEdges"/>
<line x1="669.50" y1="507.00" x2="669.50" y2="510.00" stroke="#222" stroke-width="1" shape-rendering="crispEdges"/>
<line x1="710.50" y1="507.00" x2="710.50" y2="510.00" stroke="#222" stroke-width="1" shape-rendering="crispEdges"/>
<line x1="751.50" y1="507.00" x2="751.50" y2="510.00" stroke="#222" stroke-width="1" shape-rendering="crispEdges"/>
<line x1="792.50" y1="507.00" x2="792.50" y2="510.00" stroke="#222" stroke-width="1" shape-rendering="crispEdges"/>
<line x1="833.50" y1="507.00" x2="833.50" y2="510.00" stroke="#222" stroke-width="1" shape-rendering="crispEdges"/>
<line x1="874.50" y1="507.00" x2="874.50" y2="510.00" stroke="#222" stroke-width="1" shape-rendering="crispEdges"/>
<line x1="915.50" y1="507.00" x2="915.50" y2="510.00" stroke="#222" stroke-width="1" shape-rendering="crispEdges"/>
<line x1="956.50" y1="507.00" x2="956.50" y2="510.00" stroke="#222" stroke-width="1" shape-rendering="crispEdges"/>
<line x1="997.50" y1="507.00" x2="997.50" y2="510.00" stroke="#222" stroke-width="1" shape-rendering="crispEdges"/>
<line x1="1038.50" y1="507.00" x2="1038.50" y2="510.00" stroke="#222" stroke-width="1" shape-rendering="crispEdges"/>
<line x1="95.00" y1="509.50" x2="91.00" y2="509.50" stroke="#111" stroke-width="1" shape-rendering="crispEdges"/>
<line x1="95.00" y1="507.50" x2="91.00" y2="507.50" stroke="#111" stroke-width="1" shape-rendering="crispEdges"/>
<line x1="95.00" y1="506.50" x2="91.00" y2="506.50" stroke="#111" stroke-width="1" shape-rendering="crispEdges"/>
<line x1="95.00" y1="504.50" x2="91.00" y2="504.50" stroke="#111" stroke-width="1" shape-rendering="crispEdges"/>
<line x1="95.00" y1="503.50" x2="91.00" y2="503.50" stroke="#111" stroke-width="1" shape-rendering="crispEdges"/>
<line x1="95.00" y1="502.50" x2="87.00" y2="502.50" stroke="#111" stroke-width="1" shape-rendering="crispEdges"/>
<line x1="95.00" y1="495.50" x2="91.00" y2="495.50" stroke="#111" stroke-width="1" shape-rendering="crispEdges"/>
<line x1="95.00" y1="492.50" x2="91.00" y2="492.50" stroke="#111" stroke-width="1" shape-rendering="crispEdges"/>
<line x1="95.00" y1="489.50" x2="91.00" y2="489.50" stroke="#111" stroke-width="1" shape-rendering="crispEdges"/>
<line x1="95.00" y1="487.50" x2="91.00" y2="487.50" stroke="#111" stroke-width="1" shape-rendering="crispEdges"/>
<line x1="95.00" y1="485.50" x2="91.00" y2="485.50" stroke="#111" stroke-width="1" shape-rendering="crispEdges"/>
<line x1="95.00" y1="484.50" x2="91.00" y2="484.50" stroke="#111" stroke-width="1" shape-rendering="crispEdges"/>
<line x1="95.00" y1="482.50" x2="91.00" y2="482.50" stroke="#111" stroke-width="1" shape-rendering="crispEdges"/>
<line x1="95.00" y1="481.50" x2="91.00" y2="481.50" stroke="#111" stroke-width="1" shape-rendering="crispEdges"/>
<line x1="95.00" y1="480.50" x2="87.00" y2="480.50" stroke="#111" stroke-width="1" shape-rendering="crispEdges"/>
<line x1="95.00" y1="473.50" x2="91.00" y2="473.50" stroke="#111" stroke-width="1" shape-rendering="crispEdges"/>
<line x1="95.00" y1="470.50" x2="91.00" y2="470.50" stroke="#111" stroke-width="1" shape-rendering="crispEdges"/>
<line x1="95.00" y1="467.50" x2="91.00" y2="467.50" stroke="#111" stroke-width="1" shape-rendering="crispEdges"/>
<line x1="95.00" y1="465.50" x2="91.00" y2="465.50" stroke="#111" stroke-width="1" shape-rendering="crispEdges"/>
<line x1="95.00" y1="463.50" x2="91.00" y2="463.50" stroke="#111" stroke-width="1" shape-rendering="crispEdges"/>
<line x1="95.00" y1="462.50" x2="91.00" y2="462.50" stroke="#111" stroke-width="1" shape-rendering="crispEdges"/>
<line x1="95.00" y1="460.50" x2="91.00" y2="460.50" stroke="#111" stroke-width="1" shape-rendering="crispEdges"/>
<line x1="95.00" y1="459.50" x2="91.00" y2="459.50" stroke="#111" stroke-width="1" shape-rendering="crispEdges"/>
<line x1="95.00" y1="458.50" x2="87.00" y2="458.50" stroke="#111" stroke-width="1" shape-rendering="crispEdges"/>
<line x1="95.00" y1="451.50" x2="91.00" y2="451.50" stroke="#111" stroke-width="1" shape-rendering="crispEdges"/>
<line x1="95.00" y1="448.50" x2="91.00" y2="448.50" stroke="#111" stroke-width="1" shape-rendering="crispEdges"/>
<line x1="95.00" y1="445.50" x2="91.00" y2="445.50" stroke="#111" stroke-width="1" shape-rendering="crispEdges"/>
<line x1="95.00" y1="443.50" x2="91.00" y2="443.50" stroke="#111" stroke-width="1" shape-rendering="crispEdges"/>
<line x1="95.00" y1="441.50" x2="91.00" y2="441.50" stroke="#111" stroke-width="1" shape-rendering="crispEdges"/>
<line x1="95.00" y1="440.50" x2="91.00" y2="440.50" stroke="#111" stroke-width="1" shape-rendering="crispEdges"/>
<line x1="95.00" y1="438.50" x2="91.00" y2="438.50" stroke="#111" stroke-width="1" shape-rendering="crispEdges"/>
<line x1="95.00" y1="437.50" x2="91.00" y2="437.50" stroke="#111" stroke-width="1" shape-rendering="crispEdges"/>
<line x1="95.00" y1="436.50" x2="87.00" y2="436.50" stroke="#111" stroke-width="1" shape-rendering="crispEdges"/>
<line x1="95.00" y1="429.50" x2="91.00" y2="429.50" stroke="#111" stroke-width="1" shape-rendering="crispEdges"/>
<line x1="95.00" y1="426.50" x2="91.00" y2="426.50" stroke="#111" stroke-width="1" shape-rendering="crispEdges"/>
<line x1="95.00" y1="423.50" x2="91.00" y2="423.50" stroke="#111" stroke-width="1" shape-rendering="crispEdges"/>
<line x1="95.00" y1="421.50" x2="91.00" y2="421.50" stroke="#111" stroke-width="1" shape-rendering="crispEdges"/>
<text x="82.30" y="443.80" text-anchor="end" font-size="12">10<tspan dx="1.5" dy="-6" font-size="10.5">-9</tspan></text>
<text x="82.30" y="465.70" text-anchor="end" font-size="12">10<tspan dx="1.5" dy="-6" font-size="10.5">-10</tspan></text>
<text x="82.30" y="487.80" text-anchor="end" font-size="12">10<tspan dx="1.5" dy="-6" font-size="10.5">-11</tspan></text>
<text x="82.30" y="509.70" text-anchor="end" font-size="12">10<tspan dx="1.5" dy="-6" font-size="10.5">-12</tspan></text>
<text transform="translate(35.00,465.50) rotate(-90)" text-anchor="middle" font-size="11.8" >P dyn/cm^2</text>
<polyline fill="none" stroke="#0000ff" stroke-width="1.1" stroke-linejoin="round" points="101.0,493.9 104.3,487.1 111.5,483.2 114.2,489.2 118.9,483.2 121.6,484.3 125.2,483.8 128.5,488.7 135.4,482.4 138.9,484.3 142.2,481.6 148.3,489.2 153.2,485.1 156.0,484.3 159.3,488.4 162.1,488.4 166.4,478.2 169.8,480.4 172.5,487.3 176.6,477.7 183.5,476.3 189.6,488.4 193.7,478.2 196.4,494.8 200.0,487.1 203.3,485.1 207.4,490.6 213.8,479.6 217.1,480.4 219.8,488.7 224.2,478.8 226.7,479.9 234.4,477.4 237.7,484.3 241.2,481.8 248.1,479.6 254.2,483.8 257.8,482.4 261.3,487.3 265.2,476.3 268.2,482.4 278.9,475.5 282.5,487.9 285.5,473.3 289.4,476.1 292.7,479.6 295.7,489.2 299.6,478.8 303.1,479.9 306.4,479.9 309.7,476.6 313.3,479.6 319.9,482.6 333.4,480.4 336.7,476.9 340.2,482.4 347.1,478.2 350.4,499.4 353.4,478.8 357.3,487.1 360.6,478.8 364.2,493.4 374.6,480.2 377.9,478.8 381.5,475.5 384.8,477.7 388.4,483.2 394.7,478.8 401.6,492.6 408.4,477.7 412.3,485.7 415.9,483.8 420.0,482.4 422.2,482.9 425.5,473.6 432.4,489.2 435.7,478.8 439.2,487.3 446.7,477.4 449.7,488.4 453.6,474.1 456.9,485.7 464.0,478.2 470.3,479.4 473.6,492.6 477.2,478.2 480.5,475.5 483.8,485.7 490.7,477.4 497.6,487.9 500.6,485.9 504.4,473.3 511.3,480.4 517.6,475.5 521.2,489.2 531.4,472.8 535.5,487.1 538.8,479.9 541.5,486.5 548.4,476.6 555.3,491.4 558.9,489.2 565.8,477.7 569.3,475.5 576.2,486.5 579.5,473.3 582.8,481.0 585.8,481.0 589.1,490.6 596.0,479.6 600.1,476.6 603.4,475.5 606.5,481.6 610.3,477.1 613.9,481.0 620.8,485.7 623.5,477.1 627.6,475.5 630.4,478.2 634.5,474.1 637.2,474.9 640.8,484.6 644.1,483.2 651.5,470.6 654.6,491.4 658.4,476.9 661.2,487.1 664.2,474.4 668.3,476.9 671.1,476.1 675.8,489.2 681.2,474.4 685.4,478.8 688.1,476.1 692.2,483.8 695.8,480.4 701.9,478.8 705.2,475.5 708.8,481.0 712.3,492.6 716.5,483.2 719.2,485.9 726.6,476.6 730.2,476.1 733.5,474.4 743.1,473.3 746.4,478.8 750.0,481.4 753.4,477.5 760.3,478.6 770.4,482.3 774.3,478.4 781.3,483.4 784.3,477.0 787.7,490.4 791.3,477.0 794.7,493.7 798.0,479.2 801.6,473.1 805.0,487.0 808.3,499.3 811.7,482.8 815.6,491.2 822.6,476.4 829.0,482.0 839.3,485.4 842.1,477.0 845.5,483.1 849.1,475.3 852.5,475.3 856.1,486.7 859.4,491.2 863.1,488.1 866.7,475.3 870.0,475.0 876.5,473.1 880.4,477.5 886.8,475.9 890.4,476.4 900.8,483.4 907.7,480.0 911.1,477.0 914.7,488.7 921.7,478.1 924.5,481.4 927.8,489.8 931.5,478.1 934.8,488.4 938.4,478.1 941.8,482.0 948.8,483.4 955.7,474.7 958.8,490.4 962.7,482.0 965.5,481.2 968.6,508.8 972.5,482.0 975.6,473.6 982.5,493.7 986.5,478.6 989.2,479.8 996.2,473.1 999.3,473.1 1003.5,484.2 1006.8,475.0 1009.6,475.0 1013.3,484.8 1016.6,482.0 1020.2,463.3 1023.6,464.1 1027.2,469.7 1033.9,484.2 1038.1,481.4 1041.2,473.1 1044.5,466.9 1047.9,463.3 1050.9,473.6 1054.3,500.4 1057.9,493.2 1064.9,472.2 1068.2,472.2 1071.6,474.5 1075.2,479.2 1078.9,482.6"/>
<path d="M104.3,509.0V497.5M111.5,509.0V489.2M179.4,509.0V494.2M251.4,509.0V488.1M265.5,509.0V493.4M275.6,509.0V499.4M497.6,509.0V507.9M586.4,509.0V488.4M736.5,509.0V496.4M770.4,509.0V490.9M794.1,509.0V507.1M897.4,509.0V501.5M999.3,509.0V494.0M1057.6,509.0V503.2M1068.5,509.0V486.2" stroke="#00ee00" stroke-width="1.1" fill="none"/>
<path d="M95.2,509.0L96.0,498.9L96.8,509.0M96.9,509.0L97.7,502.4L98.5,509.0M98.8,509.0L99.6,497.5L100.4,509.0M100.8,509.0L101.5,503.6L102.3,509.0M102.4,509.0L103.2,505.8L104.0,509.0M105.2,509.0L106.0,504.6L106.8,509.0M107.9,509.0L108.7,503.6L109.5,509.0M109.5,509.0L110.3,506.3L111.1,509.0M134.6,509.0L135.4,505.8L136.2,509.0M136.5,509.0L137.3,502.4L138.1,509.0M181.9,509.0L182.7,504.9L183.5,509.0M206.6,509.0L207.4,504.9L208.2,509.0M221.2,509.0L222.0,504.4L222.8,509.0M222.3,509.0L223.1,506.3L223.9,509.0M236.9,509.0L237.7,499.4L238.5,509.0M248.7,509.0L249.5,505.8L250.3,509.0M251.4,509.0L252.2,504.6L253.1,509.0M289.9,509.0L290.8,507.9L291.6,509.0M294.1,509.0L294.9,507.9L295.7,509.0M300.9,509.0L301.8,507.7L302.6,509.0M303.7,509.0L304.5,507.7L305.3,509.0M310.6,509.0L311.4,501.6L312.2,509.0M312.5,509.0L313.3,505.8L314.1,509.0M318.8,509.0L319.6,504.4L320.4,509.0M326.2,509.0L327.1,505.2L327.9,509.0M328.4,509.0L329.2,502.4L330.1,509.0M330.7,509.0L331.5,500.8L332.3,509.0M332.8,509.0L333.6,504.1L334.4,509.0M335.1,509.0L335.9,504.6L336.7,509.0M337.2,509.0L338.1,503.0L338.9,509.0M339.4,509.0L340.2,503.6L341.1,509.0M340.8,509.0L341.6,501.4L342.4,509.0M342.8,509.0L343.6,504.1L344.4,509.0M344.9,509.0L345.8,503.6L346.6,509.0M346.6,509.0L347.4,500.8L348.2,509.0M348.2,509.0L349.1,504.6L349.9,509.0M353.2,509.0L354.0,503.0L354.8,509.0M355.9,509.0L356.8,506.9L357.6,509.0M360.1,509.0L360.9,502.4L361.7,509.0M373.8,509.0L374.6,503.0L375.4,509.0M375.2,509.0L376.0,501.9L376.8,509.0M377.4,509.0L378.2,505.8L379.0,509.0M381.5,509.0L382.3,502.4L383.1,509.0M384.8,509.0L385.6,504.6L386.4,509.0M386.2,509.0L387.0,503.0L387.8,509.0M388.4,509.0L389.2,505.8L390.0,509.0M401.3,509.0L402.1,506.3L402.9,509.0M403.2,509.0L404.1,506.9L404.9,509.0M412.3,509.0L413.1,506.3L413.9,509.0M417.8,509.0L418.6,506.9L419.4,509.0M422.5,509.0L423.3,500.2L424.1,509.0M435.7,509.0L436.5,505.8L437.3,509.0M446.1,509.0L446.9,504.4L447.8,509.0M452.2,509.0L453.0,506.3L453.8,509.0M463.8,509.0L464.6,505.2L465.4,509.0M470.9,509.0L471.7,507.9L472.5,509.0M507.8,509.0L508.6,502.4L509.4,509.0M522.3,509.0L523.1,504.4L523.9,509.0M527.8,509.0L528.6,505.2L529.4,509.0M534.7,509.0L535.5,503.6L536.3,509.0M553.1,509.0L553.9,504.1L554.7,509.0M554.8,509.0L555.6,505.2L556.4,509.0M556.2,509.0L557.0,503.0L557.8,509.0M557.8,509.0L558.6,504.6L559.4,509.0M559.5,509.0L560.2,503.6L561.0,509.0M560.6,509.0L561.4,505.8L562.1,509.0M585.0,509.0L585.8,503.0L586.6,509.0M595.2,509.0L596.0,506.3L596.8,509.0M600.7,509.0L601.5,507.1L602.3,509.0M611.7,509.0L612.5,507.4L613.3,509.0M621.3,509.0L622.1,506.9L622.9,509.0M623.2,509.0L624.0,506.3L624.8,509.0M638.7,509.0L639.5,506.3L640.2,509.0M655.2,509.0L656.0,505.2L656.8,509.0M657.9,509.0L658.7,505.8L659.5,509.0M661.8,509.0L662.5,501.9L663.3,509.0M665.3,509.0L666.1,503.6L666.9,509.0M673.6,509.0L674.4,506.3L675.2,509.0M684.6,509.0L685.4,504.4L686.2,509.0M692.8,509.0L693.6,504.6L694.4,509.0M710.7,509.0L711.5,506.9L712.3,509.0M718.1,509.0L718.9,505.2L719.7,509.0M759.0,509.0L759.8,502.1L760.6,509.0M763.2,509.0L764.0,508.0L764.8,509.0M776.6,509.0L777.4,504.3L778.2,509.0M784.7,509.0L785.5,502.1L786.3,509.0M791.1,509.0L791.9,504.9L792.7,509.0M798.9,509.0L799.7,506.0L800.5,509.0M800.8,509.0L801.6,501.0L802.4,509.0M807.3,509.0L808.1,508.0L808.9,509.0M818.4,509.0L819.2,508.0L820.0,509.0M839.9,509.0L840.7,502.9L841.5,509.0M847.5,509.0L848.3,507.1L849.1,509.0M866.5,509.0L867.2,498.8L868.0,509.0M873.4,509.0L874.2,505.7L875.0,509.0M886.0,509.0L886.8,505.7L887.6,509.0M889.6,509.0L890.4,504.9L891.2,509.0M897.2,509.0L898.0,502.1L898.8,509.0M899.4,509.0L900.2,504.9L901.0,509.0M901.6,509.0L902.4,506.0L903.2,509.0M904.4,509.0L905.2,506.6L906.0,509.0M910.6,509.0L911.4,504.3L912.2,509.0M912.8,509.0L913.6,505.4L914.4,509.0M914.5,509.0L915.3,503.8L916.1,509.0M916.1,509.0L916.9,503.2L917.7,509.0M933.5,509.0L934.2,502.1L935.0,509.0M940.4,509.0L941.2,502.9L942.0,509.0M946.0,509.0L946.8,507.7L947.6,509.0M951.6,509.0L952.4,504.9L953.2,509.0M955.8,509.0L956.6,504.9L957.4,509.0M983.1,509.0L983.9,503.8L984.7,509.0M996.0,509.0L996.8,504.9L997.6,509.0M997.7,509.0L998.5,498.8L999.3,509.0M999.6,509.0L1000.4,494.3L1001.2,509.0M1001.0,509.0L1001.8,503.8L1002.6,509.0M1021.4,509.0L1022.2,499.3L1023.0,509.0M1023.3,509.0L1024.1,497.6L1024.9,509.0M1025.6,509.0L1026.4,502.7L1027.2,509.0M1035.3,509.0L1036.1,504.9L1036.9,509.0M1038.7,509.0L1039.5,501.0L1040.3,509.0M1046.5,509.0L1047.3,500.4L1048.1,509.0M1048.5,509.0L1049.3,503.8L1050.1,509.0M1050.1,509.0L1050.9,502.1L1051.7,509.0M1066.1,509.0L1066.9,503.2L1067.7,509.0M1068.3,509.0L1069.1,502.1L1069.9,509.0M1070.2,509.0L1071.0,501.0L1071.8,509.0M1077.2,509.0L1078.0,508.0L1078.8,509.0" stroke="#ff0000" stroke-width="1" fill="none" stroke-linejoin="round"/>
<line x1="1090.50" y1="426.00" x2="1103.00" y2="430.50" stroke="#0000ff" stroke-width="1.2" />
<text x="1107.50" y="432.50" text-anchor="start" font-size="11.8" >CHEMS-P</text>
<line x1="1090.50" y1="441.00" x2="1103.00" y2="445.50" stroke="#ff0000" stroke-width="1.2" />
<text x="1107.50" y="447.50" text-anchor="start" font-size="11.8" >LEMMS-P</text>
<line x1="1090.50" y1="456.00" x2="1103.00" y2="460.50" stroke="#00ee00" stroke-width="1.2" />
<text x="1107.50" y="462.50" text-anchor="start" font-size="11.8" >CHEMS-O</text>
<rect x="95" y="513" width="986" height="177.5" fill="#000"/>
<path d="M149,514.0h1v11.4h-1zM154,514.0h1v11.4h-1zM271,514.0h1v11.4h-1zM353,514.0h1v11.4h-1zM542,514.0h1v11.4h-1zM588,514.0h1v11.4h-1zM695,514.0h3v11.4h-3zM781,514.0h1v11.4h-1zM790,514.0h2v11.4h-2zM868,514.0h1v11.4h-1zM960,514.0h1v11.4h-1zM1076,514.0h2v11.4h-2zM100,525.4h8v26.4h-8zM113,525.4h1v26.4h-1zM119,525.4h2v26.4h-2zM133,525.4h3v26.4h-3zM154,525.4h1v26.4h-1zM158,525.4h1v26.4h-1zM164,525.4h6v26.4h-6zM172,525.4h1v26.4h-1zM182,525.4h2v26.4h-2zM193,525.4h2v26.4h-2zM197,525.4h1v26.4h-1zM211,525.4h1v26.4h-1zM213,525.4h1v26.4h-1zM224,525.4h2v26.4h-2zM228,525.4h3v26.4h-3zM242,525.4h3v26.4h-3zM252,525.4h1v26.4h-1zM258,525.4h2v26.4h-2zM261,525.4h1v26.4h-1zM275,525.4h2v26.4h-2zM280,525.4h5v26.4h-5zM288,525.4h2v26.4h-2zM293,525.4h1v26.4h-1zM295,525.4h1v26.4h-1zM299,525.4h1v26.4h-1zM303,525.4h1v26.4h-1zM315,525.4h1v26.4h-1zM326,525.4h1v26.4h-1zM338,525.4h1v26.4h-1zM343,525.4h1v26.4h-1zM353,525.4h1v26.4h-1zM364,525.4h3v26.4h-3zM369,525.4h2v26.4h-2zM373,525.4h4v26.4h-4zM381,525.4h4v26.4h-4zM397,525.4h1v26.4h-1zM400,525.4h1v26.4h-1zM408,525.4h1v26.4h-1zM411,525.4h3v26.4h-3zM424,525.4h2v26.4h-2zM428,525.4h1v26.4h-1zM433,525.4h1v26.4h-1zM437,525.4h1v26.4h-1zM451,525.4h1v26.4h-1zM453,525.4h2v26.4h-2zM458,525.4h3v26.4h-3zM464,525.4h2v26.4h-2zM471,525.4h5v26.4h-5zM485,525.4h3v26.4h-3zM492,525.4h1v26.4h-1zM501,525.4h3v26.4h-3zM506,525.4h1v26.4h-1zM517,525.4h1v26.4h-1zM524,525.4h3v26.4h-3zM532,525.4h1v26.4h-1zM535,525.4h2v26.4h-2zM546,525.4h3v26.4h-3zM558,525.4h8v26.4h-8zM577,525.4h1v26.4h-1zM582,525.4h1v26.4h-1zM586,525.4h3v26.4h-3zM592,525.4h1v26.4h-1zM594,525.4h3v26.4h-3zM599,525.4h4v26.4h-4zM605,525.4h5v26.4h-5zM616,525.4h1v26.4h-1zM618,525.4h3v26.4h-3zM625,525.4h2v26.4h-2zM636,525.4h3v26.4h-3zM640,525.4h2v26.4h-2zM643,525.4h3v26.4h-3zM647,525.4h1v26.4h-1zM650,525.4h1v26.4h-1zM654,525.4h2v26.4h-2zM657,525.4h2v26.4h-2zM667,525.4h1v26.4h-1zM672,525.4h3v26.4h-3zM683,525.4h5v26.4h-5zM690,525.4h3v26.4h-3zM697,525.4h1v26.4h-1zM700,525.4h3v26.4h-3zM704,525.4h4v26.4h-4zM715,525.4h1v26.4h-1zM718,525.4h5v26.4h-5zM726,525.4h2v26.4h-2zM731,525.4h6v26.4h-6zM741,525.4h1v26.4h-1zM744,525.4h2v26.4h-2zM750,525.4h3v26.4h-3zM754,525.4h2v26.4h-2zM757,525.4h1v26.4h-1zM762,525.4h1v26.4h-1zM765,525.4h5v26.4h-5zM772,525.4h1v26.4h-1zM779,525.4h1v26.4h-1zM781,525.4h5v26.4h-5zM798,525.4h1v26.4h-1zM804,525.4h1v26.4h-1zM806,525.4h4v26.4h-4zM811,525.4h3v26.4h-3zM822,525.4h1v26.4h-1zM827,525.4h2v26.4h-2zM834,525.4h2v26.4h-2zM839,525.4h1v26.4h-1zM851,525.4h1v26.4h-1zM856,525.4h1v26.4h-1zM859,525.4h2v26.4h-2zM865,525.4h2v26.4h-2zM871,525.4h2v26.4h-2zM874,525.4h3v26.4h-3zM878,525.4h1v26.4h-1zM885,525.4h1v26.4h-1zM889,525.4h1v26.4h-1zM892,525.4h2v26.4h-2zM898,525.4h2v26.4h-2zM904,525.4h2v26.4h-2zM913,525.4h1v26.4h-1zM916,525.4h4v26.4h-4zM922,525.4h3v26.4h-3zM928,525.4h2v26.4h-2zM947,525.4h2v26.4h-2zM950,525.4h2v26.4h-2zM954,525.4h1v26.4h-1zM956,525.4h2v26.4h-2zM959,525.4h1v26.4h-1zM962,525.4h2v26.4h-2zM968,525.4h3v26.4h-3zM978,525.4h1v26.4h-1zM980,525.4h3v26.4h-3zM988,525.4h3v26.4h-3zM995,525.4h3v26.4h-3zM1002,525.4h2v26.4h-2zM1005,525.4h2v26.4h-2zM1011,525.4h2v26.4h-2zM1015,525.4h1v26.4h-1zM1023,525.4h1v26.4h-1zM1029,525.4h2v26.4h-2zM1036,525.4h2v26.4h-2zM1049,525.4h1v26.4h-1zM1052,525.4h4v26.4h-4zM1057,525.4h1v26.4h-1zM1066,525.4h1v26.4h-1zM1073,525.4h1v26.4h-1zM102,551.8h6v16.6h-6zM113,551.8h1v16.6h-1zM119,551.8h2v16.6h-2zM134,551.8h2v16.6h-2zM154,551.8h1v16.6h-1zM158,551.8h2v16.6h-2zM162,551.8h1v16.6h-1zM164,551.8h4v16.6h-4zM172,551.8h1v16.6h-1zM179,551.8h1v16.6h-1zM182,551.8h1v16.6h-1zM197,551.8h1v16.6h-1zM213,551.8h1v16.6h-1zM224,551.8h2v16.6h-2zM228,551.8h3v16.6h-3zM237,551.8h1v16.6h-1zM239,551.8h1v16.6h-1zM244,551.8h1v16.6h-1zM252,551.8h1v16.6h-1zM258,551.8h2v16.6h-2zM270,551.8h1v16.6h-1zM280,551.8h3v16.6h-3zM285,551.8h1v16.6h-1zM287,551.8h3v16.6h-3zM295,551.8h1v16.6h-1zM299,551.8h1v16.6h-1zM307,551.8h1v16.6h-1zM315,551.8h1v16.6h-1zM343,551.8h1v16.6h-1zM353,551.8h1v16.6h-1zM359,551.8h1v16.6h-1zM373,551.8h3v16.6h-3zM384,551.8h3v16.6h-3zM397,551.8h1v16.6h-1zM408,551.8h1v16.6h-1zM411,551.8h3v16.6h-3zM424,551.8h2v16.6h-2zM437,551.8h1v16.6h-1zM445,551.8h1v16.6h-1zM447,551.8h2v16.6h-2zM451,551.8h1v16.6h-1zM453,551.8h2v16.6h-2zM463,551.8h3v16.6h-3zM471,551.8h1v16.6h-1zM475,551.8h1v16.6h-1zM485,551.8h1v16.6h-1zM492,551.8h1v16.6h-1zM501,551.8h1v16.6h-1zM503,551.8h3v16.6h-3zM517,551.8h1v16.6h-1zM524,551.8h3v16.6h-3zM532,551.8h1v16.6h-1zM542,551.8h1v16.6h-1zM549,551.8h1v16.6h-1zM561,551.8h5v16.6h-5zM577,551.8h1v16.6h-1zM580,551.8h3v16.6h-3zM586,551.8h3v16.6h-3zM590,551.8h1v16.6h-1zM592,551.8h1v16.6h-1zM595,551.8h2v16.6h-2zM599,551.8h1v16.6h-1zM601,551.8h2v16.6h-2zM605,551.8h5v16.6h-5zM614,551.8h1v16.6h-1zM616,551.8h1v16.6h-1zM618,551.8h3v16.6h-3zM625,551.8h2v16.6h-2zM636,551.8h3v16.6h-3zM640,551.8h2v16.6h-2zM644,551.8h2v16.6h-2zM647,551.8h1v16.6h-1zM650,551.8h1v16.6h-1zM655,551.8h1v16.6h-1zM664,551.8h1v16.6h-1zM667,551.8h1v16.6h-1zM670,551.8h1v16.6h-1zM672,551.8h1v16.6h-1zM676,551.8h1v16.6h-1zM683,551.8h1v16.6h-1zM685,551.8h3v16.6h-3zM692,551.8h3v16.6h-3zM697,551.8h1v16.6h-1zM700,551.8h3v16.6h-3zM704,551.8h4v16.6h-4zM718,551.8h5v16.6h-5zM726,551.8h2v16.6h-2zM731,551.8h6v16.6h-6zM741,551.8h1v16.6h-1zM744,551.8h1v16.6h-1zM750,551.8h3v16.6h-3zM754,551.8h4v16.6h-4zM765,551.8h5v16.6h-5zM771,551.8h1v16.6h-1zM779,551.8h1v16.6h-1zM781,551.8h1v16.6h-1zM797,551.8h1v16.6h-1zM806,551.8h4v16.6h-4zM822,551.8h1v16.6h-1zM827,551.8h2v16.6h-2zM834,551.8h2v16.6h-2zM838,551.8h2v16.6h-2zM851,551.8h1v16.6h-1zM856,551.8h1v16.6h-1zM865,551.8h2v16.6h-2zM871,551.8h2v16.6h-2zM876,551.8h1v16.6h-1zM885,551.8h1v16.6h-1zM889,551.8h1v16.6h-1zM892,551.8h2v16.6h-2zM898,551.8h4v16.6h-4zM913,551.8h1v16.6h-1zM916,551.8h3v16.6h-3zM926,551.8h2v16.6h-2zM947,551.8h2v16.6h-2zM950,551.8h2v16.6h-2zM954,551.8h1v16.6h-1zM956,551.8h2v16.6h-2zM959,551.8h2v16.6h-2zM962,551.8h2v16.6h-2zM968,551.8h3v16.6h-3zM978,551.8h1v16.6h-1zM980,551.8h3v16.6h-3zM988,551.8h3v16.6h-3zM995,551.8h3v16.6h-3zM1001,551.8h3v16.6h-3zM1005,551.8h4v16.6h-4zM1015,551.8h1v16.6h-1zM1019,551.8h2v16.6h-2zM1023,551.8h1v16.6h-1zM1029,551.8h4v16.6h-4zM1035,551.8h3v16.6h-3zM1049,551.8h1v16.6h-1zM1052,551.8h1v16.6h-1zM1066,551.8h1v16.6h-1zM1070,551.8h4v16.6h-4zM107,568.4h1v16.6h-1zM113,568.4h2v16.6h-2zM121,568.4h2v16.6h-2zM134,568.4h2v16.6h-2zM150,568.4h1v16.6h-1zM158,568.4h1v16.6h-1zM162,568.4h1v16.6h-1zM164,568.4h4v16.6h-4zM172,568.4h1v16.6h-1zM179,568.4h1v16.6h-1zM182,568.4h1v16.6h-1zM197,568.4h1v16.6h-1zM205,568.4h1v16.6h-1zM224,568.4h2v16.6h-2zM228,568.4h3v16.6h-3zM237,568.4h1v16.6h-1zM239,568.4h1v16.6h-1zM252,568.4h1v16.6h-1zM258,568.4h2v16.6h-2zM262,568.4h1v16.6h-1zM270,568.4h1v16.6h-1zM285,568.4h1v16.6h-1zM287,568.4h1v16.6h-1zM289,568.4h1v16.6h-1zM295,568.4h1v16.6h-1zM299,568.4h1v16.6h-1zM307,568.4h5v16.6h-5zM315,568.4h1v16.6h-1zM326,568.4h1v16.6h-1zM343,568.4h1v16.6h-1zM353,568.4h1v16.6h-1zM359,568.4h1v16.6h-1zM371,568.4h1v16.6h-1zM377,568.4h4v16.6h-4zM384,568.4h1v16.6h-1zM395,568.4h3v16.6h-3zM413,568.4h1v16.6h-1zM424,568.4h2v16.6h-2zM437,568.4h1v16.6h-1zM445,568.4h1v16.6h-1zM447,568.4h3v16.6h-3zM453,568.4h2v16.6h-2zM462,568.4h1v16.6h-1zM464,568.4h2v16.6h-2zM469,568.4h1v16.6h-1zM471,568.4h1v16.6h-1zM475,568.4h1v16.6h-1zM485,568.4h1v16.6h-1zM492,568.4h1v16.6h-1zM501,568.4h1v16.6h-1zM503,568.4h3v16.6h-3zM510,568.4h2v16.6h-2zM517,568.4h1v16.6h-1zM525,568.4h2v16.6h-2zM532,568.4h1v16.6h-1zM549,568.4h1v16.6h-1zM564,568.4h2v16.6h-2zM575,568.4h1v16.6h-1zM577,568.4h1v16.6h-1zM580,568.4h3v16.6h-3zM588,568.4h1v16.6h-1zM592,568.4h1v16.6h-1zM595,568.4h2v16.6h-2zM599,568.4h1v16.6h-1zM601,568.4h2v16.6h-2zM605,568.4h5v16.6h-5zM611,568.4h4v16.6h-4zM616,568.4h1v16.6h-1zM618,568.4h3v16.6h-3zM625,568.4h2v16.6h-2zM634,568.4h1v16.6h-1zM636,568.4h3v16.6h-3zM640,568.4h3v16.6h-3zM644,568.4h2v16.6h-2zM655,568.4h1v16.6h-1zM664,568.4h1v16.6h-1zM667,568.4h1v16.6h-1zM672,568.4h1v16.6h-1zM676,568.4h1v16.6h-1zM683,568.4h1v16.6h-1zM685,568.4h3v16.6h-3zM692,568.4h3v16.6h-3zM697,568.4h1v16.6h-1zM704,568.4h2v16.6h-2zM708,568.4h2v16.6h-2zM715,568.4h1v16.6h-1zM718,568.4h5v16.6h-5zM726,568.4h2v16.6h-2zM731,568.4h1v16.6h-1zM733,568.4h4v16.6h-4zM744,568.4h1v16.6h-1zM754,568.4h4v16.6h-4zM765,568.4h5v16.6h-5zM771,568.4h1v16.6h-1zM781,568.4h1v16.6h-1zM805,568.4h5v16.6h-5zM815,568.4h3v16.6h-3zM827,568.4h2v16.6h-2zM834,568.4h2v16.6h-2zM838,568.4h1v16.6h-1zM840,568.4h1v16.6h-1zM849,568.4h2v16.6h-2zM865,568.4h2v16.6h-2zM871,568.4h2v16.6h-2zM876,568.4h1v16.6h-1zM882,568.4h2v16.6h-2zM885,568.4h1v16.6h-1zM889,568.4h1v16.6h-1zM892,568.4h2v16.6h-2zM898,568.4h4v16.6h-4zM911,568.4h3v16.6h-3zM916,568.4h3v16.6h-3zM927,568.4h3v16.6h-3zM938,568.4h1v16.6h-1zM942,568.4h2v16.6h-2zM947,568.4h2v16.6h-2zM954,568.4h1v16.6h-1zM956,568.4h2v16.6h-2zM959,568.4h2v16.6h-2zM962,568.4h4v16.6h-4zM968,568.4h1v16.6h-1zM978,568.4h1v16.6h-1zM988,568.4h3v16.6h-3zM995,568.4h3v16.6h-3zM1001,568.4h1v16.6h-1zM1005,568.4h4v16.6h-4zM1019,568.4h2v16.6h-2zM1029,568.4h4v16.6h-4zM1035,568.4h3v16.6h-3zM1043,568.4h2v16.6h-2zM1049,568.4h1v16.6h-1zM1052,568.4h1v16.6h-1zM1057,568.4h1v16.6h-1zM1066,568.4h1v16.6h-1zM1070,568.4h3v16.6h-3zM107,585.0h1v20.4h-1zM113,585.0h1v20.4h-1zM130,585.0h1v20.4h-1zM135,585.0h1v20.4h-1zM158,585.0h1v20.4h-1zM162,585.0h1v20.4h-1zM164,585.0h4v20.4h-4zM172,585.0h1v20.4h-1zM182,585.0h1v20.4h-1zM191,585.0h1v20.4h-1zM197,585.0h1v20.4h-1zM205,585.0h1v20.4h-1zM224,585.0h2v20.4h-2zM228,585.0h3v20.4h-3zM237,585.0h1v20.4h-1zM239,585.0h1v20.4h-1zM244,585.0h1v20.4h-1zM252,585.0h1v20.4h-1zM258,585.0h2v20.4h-2zM262,585.0h1v20.4h-1zM283,585.0h3v20.4h-3zM287,585.0h1v20.4h-1zM295,585.0h1v20.4h-1zM300,585.0h2v20.4h-2zM308,585.0h4v20.4h-4zM315,585.0h1v20.4h-1zM345,585.0h1v20.4h-1zM359,585.0h1v20.4h-1zM377,585.0h8v20.4h-8zM395,585.0h3v20.4h-3zM419,585.0h2v20.4h-2zM424,585.0h1v20.4h-1zM431,585.0h2v20.4h-2zM437,585.0h1v20.4h-1zM445,585.0h2v20.4h-2zM449,585.0h1v20.4h-1zM461,585.0h2v20.4h-2zM464,585.0h2v20.4h-2zM469,585.0h1v20.4h-1zM492,585.0h1v20.4h-1zM501,585.0h1v20.4h-1zM504,585.0h2v20.4h-2zM510,585.0h2v20.4h-2zM525,585.0h2v20.4h-2zM540,585.0h2v20.4h-2zM549,585.0h1v20.4h-1zM564,585.0h2v20.4h-2zM574,585.0h2v20.4h-2zM577,585.0h1v20.4h-1zM580,585.0h1v20.4h-1zM582,585.0h1v20.4h-1zM592,585.0h1v20.4h-1zM597,585.0h1v20.4h-1zM599,585.0h1v20.4h-1zM605,585.0h5v20.4h-5zM614,585.0h1v20.4h-1zM618,585.0h3v20.4h-3zM625,585.0h2v20.4h-2zM634,585.0h1v20.4h-1zM636,585.0h4v20.4h-4zM642,585.0h1v20.4h-1zM644,585.0h2v20.4h-2zM664,585.0h1v20.4h-1zM672,585.0h1v20.4h-1zM676,585.0h1v20.4h-1zM683,585.0h1v20.4h-1zM685,585.0h3v20.4h-3zM692,585.0h3v20.4h-3zM697,585.0h1v20.4h-1zM704,585.0h2v20.4h-2zM708,585.0h2v20.4h-2zM715,585.0h1v20.4h-1zM718,585.0h4v20.4h-4zM723,585.0h2v20.4h-2zM726,585.0h2v20.4h-2zM754,585.0h2v20.4h-2zM770,585.0h2v20.4h-2zM781,585.0h1v20.4h-1zM798,585.0h1v20.4h-1zM805,585.0h1v20.4h-1zM815,585.0h3v20.4h-3zM819,585.0h1v20.4h-1zM827,585.0h2v20.4h-2zM834,585.0h1v20.4h-1zM838,585.0h1v20.4h-1zM840,585.0h1v20.4h-1zM849,585.0h2v20.4h-2zM871,585.0h2v20.4h-2zM876,585.0h1v20.4h-1zM878,585.0h1v20.4h-1zM882,585.0h2v20.4h-2zM889,585.0h1v20.4h-1zM892,585.0h1v20.4h-1zM898,585.0h4v20.4h-4zM906,585.0h3v20.4h-3zM911,585.0h3v20.4h-3zM916,585.0h3v20.4h-3zM927,585.0h3v20.4h-3zM933,585.0h1v20.4h-1zM956,585.0h2v20.4h-2zM959,585.0h2v20.4h-2zM987,585.0h4v20.4h-4zM995,585.0h1v20.4h-1zM1001,585.0h1v20.4h-1zM1005,585.0h2v20.4h-2zM1008,585.0h1v20.4h-1zM1010,585.0h1v20.4h-1zM1013,585.0h2v20.4h-2zM1019,585.0h2v20.4h-2zM1029,585.0h4v20.4h-4zM1035,585.0h3v20.4h-3zM1043,585.0h1v20.4h-1zM1048,585.0h2v20.4h-2zM1052,585.0h1v20.4h-1zM1056,585.0h2v20.4h-2zM1066,585.0h1v20.4h-1zM1070,585.0h3v20.4h-3zM98,605.4h1v12.6h-1zM107,605.4h1v12.6h-1zM113,605.4h1v12.6h-1zM116,605.4h1v12.6h-1zM130,605.4h1v12.6h-1zM151,605.4h1v12.6h-1zM158,605.4h1v12.6h-1zM162,605.4h1v12.6h-1zM164,605.4h2v12.6h-2zM172,605.4h1v12.6h-1zM176,605.4h2v12.6h-2zM181,605.4h1v12.6h-1zM190,605.4h2v12.6h-2zM205,605.4h1v12.6h-1zM222,605.4h1v12.6h-1zM224,605.4h7v12.6h-7zM237,605.4h1v12.6h-1zM239,605.4h1v12.6h-1zM244,605.4h1v12.6h-1zM262,605.4h1v12.6h-1zM280,605.4h3v12.6h-3zM285,605.4h1v12.6h-1zM287,605.4h1v12.6h-1zM300,605.4h2v12.6h-2zM304,605.4h3v12.6h-3zM312,605.4h2v12.6h-2zM323,605.4h1v12.6h-1zM359,605.4h1v12.6h-1zM363,605.4h1v12.6h-1zM381,605.4h4v12.6h-4zM395,605.4h2v12.6h-2zM403,605.4h1v12.6h-1zM413,605.4h1v12.6h-1zM417,605.4h4v12.6h-4zM424,605.4h1v12.6h-1zM431,605.4h2v12.6h-2zM437,605.4h1v12.6h-1zM445,605.4h2v12.6h-2zM458,605.4h5v12.6h-5zM464,605.4h2v12.6h-2zM469,605.4h1v12.6h-1zM474,605.4h1v12.6h-1zM480,605.4h3v12.6h-3zM492,605.4h1v12.6h-1zM498,605.4h1v12.6h-1zM501,605.4h1v12.6h-1zM506,605.4h1v12.6h-1zM525,605.4h2v12.6h-2zM534,605.4h1v12.6h-1zM540,605.4h2v12.6h-2zM546,605.4h4v12.6h-4zM556,605.4h5v12.6h-5zM564,605.4h2v12.6h-2zM574,605.4h1v12.6h-1zM577,605.4h1v12.6h-1zM580,605.4h1v12.6h-1zM592,605.4h1v12.6h-1zM597,605.4h1v12.6h-1zM599,605.4h1v12.6h-1zM605,605.4h5v12.6h-5zM614,605.4h1v12.6h-1zM625,605.4h2v12.6h-2zM632,605.4h1v12.6h-1zM634,605.4h5v12.6h-5zM642,605.4h1v12.6h-1zM644,605.4h2v12.6h-2zM664,605.4h1v12.6h-1zM672,605.4h1v12.6h-1zM675,605.4h2v12.6h-2zM680,605.4h3v12.6h-3zM685,605.4h3v12.6h-3zM692,605.4h1v12.6h-1zM701,605.4h2v12.6h-2zM704,605.4h2v12.6h-2zM723,605.4h2v12.6h-2zM726,605.4h2v12.6h-2zM730,605.4h1v12.6h-1zM754,605.4h2v12.6h-2zM778,605.4h1v12.6h-1zM781,605.4h1v12.6h-1zM789,605.4h1v12.6h-1zM798,605.4h1v12.6h-1zM805,605.4h1v12.6h-1zM815,605.4h3v12.6h-3zM819,605.4h1v12.6h-1zM827,605.4h2v12.6h-2zM834,605.4h1v12.6h-1zM838,605.4h1v12.6h-1zM840,605.4h1v12.6h-1zM845,605.4h1v12.6h-1zM849,605.4h2v12.6h-2zM871,605.4h2v12.6h-2zM878,605.4h1v12.6h-1zM892,605.4h1v12.6h-1zM898,605.4h2v12.6h-2zM906,605.4h3v12.6h-3zM913,605.4h1v12.6h-1zM927,605.4h3v12.6h-3zM935,605.4h1v12.6h-1zM937,605.4h1v12.6h-1zM942,605.4h2v12.6h-2zM950,605.4h4v12.6h-4zM956,605.4h2v12.6h-2zM960,605.4h1v12.6h-1zM970,605.4h1v12.6h-1zM983,605.4h3v12.6h-3zM987,605.4h4v12.6h-4zM995,605.4h3v12.6h-3zM1000,605.4h1v12.6h-1zM1005,605.4h4v12.6h-4zM1010,605.4h1v12.6h-1zM1013,605.4h2v12.6h-2zM1019,605.4h2v12.6h-2zM1029,605.4h4v12.6h-4zM1035,605.4h1v12.6h-1zM1037,605.4h1v12.6h-1zM1043,605.4h1v12.6h-1zM1048,605.4h2v12.6h-2zM1052,605.4h1v12.6h-1zM1057,605.4h1v12.6h-1zM1066,605.4h1v12.6h-1zM1070,605.4h3v12.6h-3zM98,618.0h1v12.7h-1zM102,618.0h3v12.7h-3zM107,618.0h1v12.7h-1zM113,618.0h2v12.7h-2zM130,618.0h1v12.7h-1zM150,618.0h1v12.7h-1zM158,618.0h1v12.7h-1zM164,618.0h2v12.7h-2zM172,618.0h1v12.7h-1zM176,618.0h2v12.7h-2zM179,618.0h1v12.7h-1zM181,618.0h1v12.7h-1zM183,618.0h1v12.7h-1zM190,618.0h1v12.7h-1zM205,618.0h1v12.7h-1zM222,618.0h1v12.7h-1zM224,618.0h7v12.7h-7zM239,618.0h1v12.7h-1zM242,618.0h2v12.7h-2zM253,618.0h5v12.7h-5zM262,618.0h1v12.7h-1zM274,618.0h1v12.7h-1zM277,618.0h1v12.7h-1zM280,618.0h3v12.7h-3zM287,618.0h1v12.7h-1zM300,618.0h2v12.7h-2zM304,618.0h3v12.7h-3zM323,618.0h1v12.7h-1zM336,618.0h1v12.7h-1zM344,618.0h2v12.7h-2zM353,618.0h1v12.7h-1zM363,618.0h1v12.7h-1zM381,618.0h6v12.7h-6zM403,618.0h1v12.7h-1zM413,618.0h3v12.7h-3zM417,618.0h4v12.7h-4zM431,618.0h2v12.7h-2zM445,618.0h2v12.7h-2zM458,618.0h3v12.7h-3zM464,618.0h6v12.7h-6zM472,618.0h4v12.7h-4zM480,618.0h3v12.7h-3zM492,618.0h1v12.7h-1zM498,618.0h1v12.7h-1zM506,618.0h1v12.7h-1zM512,618.0h3v12.7h-3zM525,618.0h2v12.7h-2zM540,618.0h2v12.7h-2zM546,618.0h4v12.7h-4zM554,618.0h7v12.7h-7zM564,618.0h2v12.7h-2zM574,618.0h1v12.7h-1zM577,618.0h4v12.7h-4zM599,618.0h1v12.7h-1zM601,618.0h2v12.7h-2zM607,618.0h3v12.7h-3zM626,618.0h1v12.7h-1zM632,618.0h1v12.7h-1zM634,618.0h2v12.7h-2zM639,618.0h1v12.7h-1zM644,618.0h3v12.7h-3zM651,618.0h1v12.7h-1zM664,618.0h2v12.7h-2zM672,618.0h1v12.7h-1zM675,618.0h2v12.7h-2zM680,618.0h3v12.7h-3zM685,618.0h3v12.7h-3zM692,618.0h5v12.7h-5zM701,618.0h5v12.7h-5zM710,618.0h2v12.7h-2zM723,618.0h2v12.7h-2zM726,618.0h2v12.7h-2zM730,618.0h1v12.7h-1zM740,618.0h1v12.7h-1zM742,618.0h2v12.7h-2zM754,618.0h2v12.7h-2zM770,618.0h1v12.7h-1zM772,618.0h1v12.7h-1zM778,618.0h1v12.7h-1zM789,618.0h3v12.7h-3zM795,618.0h1v12.7h-1zM798,618.0h1v12.7h-1zM805,618.0h1v12.7h-1zM819,618.0h1v12.7h-1zM821,618.0h1v12.7h-1zM827,618.0h2v12.7h-2zM834,618.0h2v12.7h-2zM838,618.0h1v12.7h-1zM843,618.0h3v12.7h-3zM849,618.0h4v12.7h-4zM856,618.0h1v12.7h-1zM868,618.0h1v12.7h-1zM871,618.0h2v12.7h-2zM878,618.0h1v12.7h-1zM892,618.0h1v12.7h-1zM898,618.0h2v12.7h-2zM906,618.0h5v12.7h-5zM928,618.0h2v12.7h-2zM935,618.0h1v12.7h-1zM937,618.0h2v12.7h-2zM942,618.0h2v12.7h-2zM950,618.0h4v12.7h-4zM956,618.0h2v12.7h-2zM959,618.0h1v12.7h-1zM970,618.0h1v12.7h-1zM976,618.0h1v12.7h-1zM987,618.0h4v12.7h-4zM995,618.0h3v12.7h-3zM1000,618.0h1v12.7h-1zM1005,618.0h3v12.7h-3zM1010,618.0h1v12.7h-1zM1013,618.0h2v12.7h-2zM1029,618.0h2v12.7h-2zM1033,618.0h3v12.7h-3zM1037,618.0h1v12.7h-1zM1048,618.0h1v12.7h-1zM1052,618.0h1v12.7h-1zM1057,618.0h3v12.7h-3zM1070,618.0h3v12.7h-3zM98,630.7h1v16.6h-1zM100,630.7h2v16.6h-2zM107,630.7h1v16.6h-1zM113,630.7h2v16.6h-2zM121,630.7h2v16.6h-2zM150,630.7h1v16.6h-1zM158,630.7h1v16.6h-1zM164,630.7h4v16.6h-4zM176,630.7h2v16.6h-2zM181,630.7h1v16.6h-1zM183,630.7h1v16.6h-1zM185,630.7h2v16.6h-2zM189,630.7h2v16.6h-2zM196,630.7h1v16.6h-1zM208,630.7h3v16.6h-3zM212,630.7h3v16.6h-3zM222,630.7h1v16.6h-1zM226,630.7h5v16.6h-5zM233,630.7h1v16.6h-1zM239,630.7h1v16.6h-1zM242,630.7h2v16.6h-2zM253,630.7h1v16.6h-1zM274,630.7h1v16.6h-1zM277,630.7h1v16.6h-1zM279,630.7h4v16.6h-4zM287,630.7h1v16.6h-1zM300,630.7h2v16.6h-2zM306,630.7h1v16.6h-1zM320,630.7h4v16.6h-4zM330,630.7h1v16.6h-1zM336,630.7h1v16.6h-1zM344,630.7h2v16.6h-2zM357,630.7h2v16.6h-2zM381,630.7h6v16.6h-6zM388,630.7h2v16.6h-2zM398,630.7h2v16.6h-2zM403,630.7h1v16.6h-1zM413,630.7h3v16.6h-3zM417,630.7h4v16.6h-4zM424,630.7h2v16.6h-2zM428,630.7h1v16.6h-1zM431,630.7h2v16.6h-2zM438,630.7h1v16.6h-1zM445,630.7h1v16.6h-1zM450,630.7h1v16.6h-1zM458,630.7h3v16.6h-3zM462,630.7h1v16.6h-1zM464,630.7h5v16.6h-5zM471,630.7h3v16.6h-3zM475,630.7h1v16.6h-1zM480,630.7h3v16.6h-3zM492,630.7h1v16.6h-1zM494,630.7h2v16.6h-2zM498,630.7h2v16.6h-2zM503,630.7h1v16.6h-1zM506,630.7h1v16.6h-1zM512,630.7h3v16.6h-3zM525,630.7h3v16.6h-3zM546,630.7h4v16.6h-4zM564,630.7h2v16.6h-2zM574,630.7h1v16.6h-1zM577,630.7h4v16.6h-4zM584,630.7h2v16.6h-2zM589,630.7h1v16.6h-1zM599,630.7h1v16.6h-1zM601,630.7h2v16.6h-2zM626,630.7h1v16.6h-1zM632,630.7h1v16.6h-1zM634,630.7h2v16.6h-2zM639,630.7h1v16.6h-1zM646,630.7h1v16.6h-1zM648,630.7h2v16.6h-2zM651,630.7h1v16.6h-1zM657,630.7h2v16.6h-2zM665,630.7h1v16.6h-1zM668,630.7h2v16.6h-2zM672,630.7h1v16.6h-1zM680,630.7h3v16.6h-3zM692,630.7h1v16.6h-1zM701,630.7h3v16.6h-3zM710,630.7h2v16.6h-2zM723,630.7h2v16.6h-2zM726,630.7h2v16.6h-2zM731,630.7h1v16.6h-1zM740,630.7h4v16.6h-4zM754,630.7h3v16.6h-3zM763,630.7h1v16.6h-1zM772,630.7h1v16.6h-1zM778,630.7h1v16.6h-1zM789,630.7h3v16.6h-3zM795,630.7h2v16.6h-2zM798,630.7h1v16.6h-1zM805,630.7h1v16.6h-1zM827,630.7h2v16.6h-2zM834,630.7h2v16.6h-2zM843,630.7h3v16.6h-3zM851,630.7h1v16.6h-1zM855,630.7h2v16.6h-2zM868,630.7h5v16.6h-5zM882,630.7h2v16.6h-2zM900,630.7h2v16.6h-2zM906,630.7h5v16.6h-5zM920,630.7h2v16.6h-2zM928,630.7h2v16.6h-2zM931,630.7h2v16.6h-2zM937,630.7h2v16.6h-2zM942,630.7h2v16.6h-2zM949,630.7h5v16.6h-5zM955,630.7h3v16.6h-3zM967,630.7h1v16.6h-1zM987,630.7h1v16.6h-1zM995,630.7h3v16.6h-3zM1000,630.7h1v16.6h-1zM1002,630.7h2v16.6h-2zM1005,630.7h3v16.6h-3zM1013,630.7h2v16.6h-2zM1033,630.7h3v16.6h-3zM1037,630.7h3v16.6h-3zM1048,630.7h1v16.6h-1zM1052,630.7h1v16.6h-1zM1057,630.7h5v16.6h-5zM1067,630.7h1v16.6h-1zM1070,630.7h2v16.6h-2zM1078,630.7h2v16.6h-2zM98,647.3h1v16.6h-1zM107,647.3h1v16.6h-1zM111,647.3h3v16.6h-3zM121,647.3h2v16.6h-2zM132,647.3h1v16.6h-1zM143,647.3h1v16.6h-1zM150,647.3h1v16.6h-1zM158,647.3h1v16.6h-1zM166,647.3h2v16.6h-2zM171,647.3h1v16.6h-1zM183,647.3h1v16.6h-1zM185,647.3h2v16.6h-2zM189,647.3h2v16.6h-2zM193,647.3h2v16.6h-2zM196,647.3h1v16.6h-1zM199,647.3h4v16.6h-4zM211,647.3h2v16.6h-2zM214,647.3h1v16.6h-1zM222,647.3h1v16.6h-1zM226,647.3h5v16.6h-5zM233,647.3h1v16.6h-1zM242,647.3h2v16.6h-2zM253,647.3h1v16.6h-1zM274,647.3h1v16.6h-1zM277,647.3h1v16.6h-1zM279,647.3h4v16.6h-4zM287,647.3h1v16.6h-1zM291,647.3h2v16.6h-2zM300,647.3h2v16.6h-2zM306,647.3h1v16.6h-1zM308,647.3h4v16.6h-4zM318,647.3h1v16.6h-1zM320,647.3h3v16.6h-3zM326,647.3h1v16.6h-1zM330,647.3h1v16.6h-1zM342,647.3h1v16.6h-1zM344,647.3h2v16.6h-2zM357,647.3h2v16.6h-2zM367,647.3h1v16.6h-1zM371,647.3h1v16.6h-1zM381,647.3h4v16.6h-4zM388,647.3h2v16.6h-2zM398,647.3h2v16.6h-2zM402,647.3h1v16.6h-1zM413,647.3h3v16.6h-3zM419,647.3h2v16.6h-2zM424,647.3h2v16.6h-2zM428,647.3h1v16.6h-1zM431,647.3h2v16.6h-2zM435,647.3h1v16.6h-1zM438,647.3h1v16.6h-1zM445,647.3h1v16.6h-1zM449,647.3h1v16.6h-1zM451,647.3h1v16.6h-1zM458,647.3h3v16.6h-3zM462,647.3h4v16.6h-4zM471,647.3h3v16.6h-3zM475,647.3h1v16.6h-1zM480,647.3h3v16.6h-3zM494,647.3h2v16.6h-2zM498,647.3h2v16.6h-2zM502,647.3h2v16.6h-2zM506,647.3h1v16.6h-1zM524,647.3h1v16.6h-1zM527,647.3h1v16.6h-1zM549,647.3h1v16.6h-1zM564,647.3h2v16.6h-2zM574,647.3h1v16.6h-1zM577,647.3h1v16.6h-1zM580,647.3h1v16.6h-1zM584,647.3h2v16.6h-2zM588,647.3h2v16.6h-2zM599,647.3h1v16.6h-1zM601,647.3h2v16.6h-2zM614,647.3h1v16.6h-1zM632,647.3h1v16.6h-1zM634,647.3h2v16.6h-2zM639,647.3h1v16.6h-1zM642,647.3h1v16.6h-1zM646,647.3h1v16.6h-1zM648,647.3h2v16.6h-2zM651,647.3h1v16.6h-1zM657,647.3h2v16.6h-2zM665,647.3h1v16.6h-1zM680,647.3h3v16.6h-3zM692,647.3h3v16.6h-3zM701,647.3h3v16.6h-3zM710,647.3h2v16.6h-2zM723,647.3h2v16.6h-2zM726,647.3h2v16.6h-2zM740,647.3h4v16.6h-4zM754,647.3h3v16.6h-3zM786,647.3h1v16.6h-1zM789,647.3h3v16.6h-3zM795,647.3h1v16.6h-1zM798,647.3h2v16.6h-2zM805,647.3h1v16.6h-1zM827,647.3h2v16.6h-2zM834,647.3h1v16.6h-1zM843,647.3h2v16.6h-2zM856,647.3h1v16.6h-1zM869,647.3h2v16.6h-2zM872,647.3h1v16.6h-1zM874,647.3h2v16.6h-2zM881,647.3h3v16.6h-3zM893,647.3h1v16.6h-1zM906,647.3h4v16.6h-4zM922,647.3h3v16.6h-3zM928,647.3h2v16.6h-2zM931,647.3h2v16.6h-2zM937,647.3h2v16.6h-2zM942,647.3h2v16.6h-2zM945,647.3h1v16.6h-1zM950,647.3h4v16.6h-4zM955,647.3h1v16.6h-1zM959,647.3h1v16.6h-1zM968,647.3h1v16.6h-1zM976,647.3h2v16.6h-2zM979,647.3h1v16.6h-1zM987,647.3h1v16.6h-1zM995,647.3h3v16.6h-3zM1000,647.3h1v16.6h-1zM1002,647.3h2v16.6h-2zM1005,647.3h3v16.6h-3zM1015,647.3h1v16.6h-1zM1029,647.3h7v16.6h-7zM1037,647.3h1v16.6h-1zM1052,647.3h1v16.6h-1zM1058,647.3h4v16.6h-4zM1067,647.3h3v16.6h-3zM1078,647.3h2v16.6h-2zM96,663.9h7v12.6h-7zM105,663.9h9v12.6h-9zM115,663.9h1v12.6h-1zM121,663.9h5v12.6h-5zM132,663.9h1v12.6h-1zM150,663.9h1v12.6h-1zM155,663.9h1v12.6h-1zM158,663.9h1v12.6h-1zM171,663.9h1v12.6h-1zM178,663.9h1v12.6h-1zM183,663.9h1v12.6h-1zM190,663.9h1v12.6h-1zM193,663.9h2v12.6h-2zM196,663.9h1v12.6h-1zM199,663.9h4v12.6h-4zM211,663.9h2v12.6h-2zM214,663.9h1v12.6h-1zM222,663.9h1v12.6h-1zM226,663.9h5v12.6h-5zM232,663.9h2v12.6h-2zM240,663.9h1v12.6h-1zM242,663.9h2v12.6h-2zM253,663.9h1v12.6h-1zM271,663.9h1v12.6h-1zM277,663.9h3v12.6h-3zM283,663.9h2v12.6h-2zM287,663.9h1v12.6h-1zM291,663.9h2v12.6h-2zM300,663.9h2v12.6h-2zM304,663.9h3v12.6h-3zM308,663.9h4v12.6h-4zM318,663.9h1v12.6h-1zM320,663.9h3v12.6h-3zM326,663.9h1v12.6h-1zM328,663.9h1v12.6h-1zM330,663.9h4v12.6h-4zM336,663.9h4v12.6h-4zM342,663.9h5v12.6h-5zM349,663.9h2v12.6h-2zM359,663.9h1v12.6h-1zM363,663.9h1v12.6h-1zM367,663.9h5v12.6h-5zM375,663.9h3v12.6h-3zM380,663.9h5v12.6h-5zM388,663.9h5v12.6h-5zM394,663.9h1v12.6h-1zM398,663.9h2v12.6h-2zM402,663.9h1v12.6h-1zM413,663.9h3v12.6h-3zM424,663.9h1v12.6h-1zM428,663.9h1v12.6h-1zM431,663.9h2v12.6h-2zM434,663.9h1v12.6h-1zM442,663.9h1v12.6h-1zM449,663.9h1v12.6h-1zM453,663.9h2v12.6h-2zM462,663.9h4v12.6h-4zM471,663.9h3v12.6h-3zM476,663.9h1v12.6h-1zM479,663.9h4v12.6h-4zM494,663.9h2v12.6h-2zM498,663.9h2v12.6h-2zM502,663.9h2v12.6h-2zM506,663.9h1v12.6h-1zM527,663.9h1v12.6h-1zM546,663.9h4v12.6h-4zM565,663.9h1v12.6h-1zM576,663.9h2v12.6h-2zM580,663.9h1v12.6h-1zM584,663.9h2v12.6h-2zM588,663.9h1v12.6h-1zM598,663.9h1v12.6h-1zM614,663.9h1v12.6h-1zM627,663.9h1v12.6h-1zM632,663.9h1v12.6h-1zM634,663.9h1v12.6h-1zM639,663.9h1v12.6h-1zM646,663.9h1v12.6h-1zM648,663.9h2v12.6h-2zM651,663.9h1v12.6h-1zM654,663.9h1v12.6h-1zM659,663.9h4v12.6h-4zM664,663.9h6v12.6h-6zM671,663.9h2v12.6h-2zM674,663.9h1v12.6h-1zM676,663.9h1v12.6h-1zM679,663.9h6v12.6h-6zM688,663.9h2v12.6h-2zM693,663.9h3v12.6h-3zM698,663.9h1v12.6h-1zM703,663.9h1v12.6h-1zM706,663.9h2v12.6h-2zM710,663.9h2v12.6h-2zM718,663.9h2v12.6h-2zM723,663.9h5v12.6h-5zM740,663.9h4v12.6h-4zM745,663.9h4v12.6h-4zM752,663.9h1v12.6h-1zM754,663.9h3v12.6h-3zM759,663.9h2v12.6h-2zM763,663.9h1v12.6h-1zM765,663.9h4v12.6h-4zM790,663.9h2v12.6h-2zM798,663.9h1v12.6h-1zM814,663.9h1v12.6h-1zM822,663.9h5v12.6h-5zM834,663.9h1v12.6h-1zM843,663.9h3v12.6h-3zM848,663.9h3v12.6h-3zM856,663.9h3v12.6h-3zM863,663.9h2v12.6h-2zM872,663.9h1v12.6h-1zM878,663.9h1v12.6h-1zM882,663.9h2v12.6h-2zM886,663.9h1v12.6h-1zM890,663.9h2v12.6h-2zM893,663.9h1v12.6h-1zM903,663.9h10v12.6h-10zM914,663.9h2v12.6h-2zM917,663.9h2v12.6h-2zM928,663.9h2v12.6h-2zM934,663.9h1v12.6h-1zM937,663.9h2v12.6h-2zM942,663.9h2v12.6h-2zM945,663.9h1v12.6h-1zM950,663.9h2v12.6h-2zM954,663.9h2v12.6h-2zM968,663.9h1v12.6h-1zM975,663.9h3v12.6h-3zM979,663.9h3v12.6h-3zM983,663.9h5v12.6h-5zM995,663.9h3v12.6h-3zM1002,663.9h2v12.6h-2zM1005,663.9h3v12.6h-3zM1013,663.9h3v12.6h-3zM1029,663.9h7v12.6h-7zM1037,663.9h1v12.6h-1zM1058,663.9h2v12.6h-2zM1062,663.9h4v12.6h-4zM1067,663.9h3v12.6h-3zM1073,663.9h1v12.6h-1zM96,676.5h4v13.7h-4zM102,676.5h4v13.7h-4zM107,676.5h9v13.7h-9zM117,676.5h1v13.7h-1zM119,676.5h7v13.7h-7zM127,676.5h2v13.7h-2zM133,676.5h1v13.7h-1zM144,676.5h3v13.7h-3zM148,676.5h1v13.7h-1zM154,676.5h3v13.7h-3zM158,676.5h1v13.7h-1zM166,676.5h2v13.7h-2zM171,676.5h2v13.7h-2zM174,676.5h1v13.7h-1zM178,676.5h1v13.7h-1zM183,676.5h1v13.7h-1zM190,676.5h1v13.7h-1zM193,676.5h2v13.7h-2zM196,676.5h9v13.7h-9zM207,676.5h13v13.7h-13zM221,676.5h2v13.7h-2zM226,676.5h5v13.7h-5zM232,676.5h2v13.7h-2zM236,676.5h2v13.7h-2zM240,676.5h1v13.7h-1zM242,676.5h2v13.7h-2zM253,676.5h1v13.7h-1zM264,676.5h2v13.7h-2zM270,676.5h1v13.7h-1zM277,676.5h2v13.7h-2zM283,676.5h2v13.7h-2zM287,676.5h1v13.7h-1zM300,676.5h2v13.7h-2zM304,676.5h3v13.7h-3zM314,676.5h1v13.7h-1zM318,676.5h1v13.7h-1zM320,676.5h2v13.7h-2zM363,676.5h2v13.7h-2zM398,676.5h2v13.7h-2zM402,676.5h4v13.7h-4zM413,676.5h3v13.7h-3zM421,676.5h1v13.7h-1zM424,676.5h1v13.7h-1zM434,676.5h1v13.7h-1zM436,676.5h3v13.7h-3zM442,676.5h1v13.7h-1zM449,676.5h1v13.7h-1zM452,676.5h3v13.7h-3zM458,676.5h6v13.7h-6zM466,676.5h3v13.7h-3zM474,676.5h3v13.7h-3zM478,676.5h1v13.7h-1zM480,676.5h3v13.7h-3zM491,676.5h1v13.7h-1zM494,676.5h2v13.7h-2zM498,676.5h2v13.7h-2zM502,676.5h1v13.7h-1zM504,676.5h4v13.7h-4zM512,676.5h3v13.7h-3zM518,676.5h2v13.7h-2zM527,676.5h4v13.7h-4zM532,676.5h5v13.7h-5zM546,676.5h8v13.7h-8zM557,676.5h4v13.7h-4zM565,676.5h1v13.7h-1zM576,676.5h1v13.7h-1zM580,676.5h3v13.7h-3zM584,676.5h2v13.7h-2zM588,676.5h1v13.7h-1zM591,676.5h1v13.7h-1zM595,676.5h2v13.7h-2zM598,676.5h2v13.7h-2zM627,676.5h3v13.7h-3zM632,676.5h1v13.7h-1zM634,676.5h1v13.7h-1zM639,676.5h1v13.7h-1zM644,676.5h3v13.7h-3zM652,676.5h2v13.7h-2zM657,676.5h2v13.7h-2zM665,676.5h1v13.7h-1zM671,676.5h1v13.7h-1zM685,676.5h2v13.7h-2zM700,676.5h4v13.7h-4zM718,676.5h4v13.7h-4zM723,676.5h2v13.7h-2zM742,676.5h2v13.7h-2zM754,676.5h2v13.7h-2zM759,676.5h2v13.7h-2zM770,676.5h1v13.7h-1zM777,676.5h2v13.7h-2zM790,676.5h4v13.7h-4zM798,676.5h1v13.7h-1zM800,676.5h2v13.7h-2zM804,676.5h1v13.7h-1zM814,676.5h5v13.7h-5zM820,676.5h1v13.7h-1zM822,676.5h5v13.7h-5zM831,676.5h4v13.7h-4zM845,676.5h1v13.7h-1zM848,676.5h1v13.7h-1zM853,676.5h1v13.7h-1zM857,676.5h2v13.7h-2zM867,676.5h1v13.7h-1zM872,676.5h1v13.7h-1zM878,676.5h2v13.7h-2zM882,676.5h3v13.7h-3zM886,676.5h1v13.7h-1zM890,676.5h2v13.7h-2zM893,676.5h1v13.7h-1zM898,676.5h2v13.7h-2zM902,676.5h1v13.7h-1zM928,676.5h2v13.7h-2zM934,676.5h1v13.7h-1zM937,676.5h2v13.7h-2zM942,676.5h2v13.7h-2zM945,676.5h1v13.7h-1zM950,676.5h2v13.7h-2zM954,676.5h1v13.7h-1zM966,676.5h1v13.7h-1zM968,676.5h1v13.7h-1zM971,676.5h4v13.7h-4zM993,676.5h5v13.7h-5zM1002,676.5h2v13.7h-2zM1007,676.5h1v13.7h-1zM1015,676.5h1v13.7h-1zM1021,676.5h3v13.7h-3zM1028,676.5h3v13.7h-3zM1035,676.5h5v13.7h-5zM1042,676.5h2v13.7h-2zM1049,676.5h1v13.7h-1zM1060,676.5h2v13.7h-2zM1068,676.5h2v13.7h-2zM1072,676.5h2v13.7h-2zM1076,676.5h2v13.7h-2z" fill="url(#p4)" shape-rendering="crispEdges"/>
<path d="M710,514.0h2v11.4h-2zM732,514.0h1v11.4h-1zM750,514.0h3v11.4h-3zM1015,514.0h1v11.4h-1zM98,525.4h1v26.4h-1zM108,525.4h3v26.4h-3zM117,525.4h2v26.4h-2zM121,525.4h2v26.4h-2zM138,525.4h5v26.4h-5zM159,525.4h1v26.4h-1zM170,525.4h2v26.4h-2zM176,525.4h2v26.4h-2zM187,525.4h2v26.4h-2zM198,525.4h1v26.4h-1zM212,525.4h1v26.4h-1zM220,525.4h1v26.4h-1zM238,525.4h1v26.4h-1zM240,525.4h1v26.4h-1zM260,525.4h1v26.4h-1zM297,525.4h2v26.4h-2zM316,525.4h2v26.4h-2zM319,525.4h1v26.4h-1zM330,525.4h1v26.4h-1zM339,525.4h3v26.4h-3zM348,525.4h1v26.4h-1zM352,525.4h1v26.4h-1zM363,525.4h1v26.4h-1zM372,525.4h1v26.4h-1zM377,525.4h4v26.4h-4zM401,525.4h1v26.4h-1zM421,525.4h1v26.4h-1zM429,525.4h2v26.4h-2zM438,525.4h1v26.4h-1zM442,525.4h1v26.4h-1zM457,525.4h1v26.4h-1zM461,525.4h1v26.4h-1zM476,525.4h1v26.4h-1zM488,525.4h3v26.4h-3zM493,525.4h1v26.4h-1zM500,525.4h1v26.4h-1zM516,525.4h1v26.4h-1zM531,525.4h1v26.4h-1zM537,525.4h3v26.4h-3zM550,525.4h4v26.4h-4zM566,525.4h1v26.4h-1zM576,525.4h1v26.4h-1zM578,525.4h2v26.4h-2zM591,525.4h1v26.4h-1zM598,525.4h1v26.4h-1zM603,525.4h2v26.4h-2zM617,525.4h1v26.4h-1zM631,525.4h1v26.4h-1zM656,525.4h1v26.4h-1zM668,525.4h2v26.4h-2zM695,525.4h2v26.4h-2zM708,525.4h1v26.4h-1zM710,525.4h2v26.4h-2zM716,525.4h1v26.4h-1zM728,525.4h1v26.4h-1zM737,525.4h3v26.4h-3zM753,525.4h1v26.4h-1zM763,525.4h2v26.4h-2zM775,525.4h4v26.4h-4zM790,525.4h2v26.4h-2zM794,525.4h2v26.4h-2zM799,525.4h3v26.4h-3zM814,525.4h1v26.4h-1zM823,525.4h4v26.4h-4zM829,525.4h1v26.4h-1zM857,525.4h2v26.4h-2zM862,525.4h3v26.4h-3zM873,525.4h1v26.4h-1zM880,525.4h1v26.4h-1zM910,525.4h3v26.4h-3zM926,525.4h1v26.4h-1zM930,525.4h3v26.4h-3zM966,525.4h1v26.4h-1zM971,525.4h4v26.4h-4zM976,525.4h1v26.4h-1zM991,525.4h1v26.4h-1zM993,525.4h2v26.4h-2zM999,525.4h2v26.4h-2zM1048,525.4h1v26.4h-1zM1067,525.4h1v26.4h-1zM1076,525.4h2v26.4h-2zM117,551.8h2v16.6h-2zM129,551.8h1v16.6h-1zM138,551.8h5v16.6h-5zM176,551.8h3v16.6h-3zM187,551.8h2v16.6h-2zM198,551.8h1v16.6h-1zM211,551.8h2v16.6h-2zM223,551.8h1v16.6h-1zM238,551.8h1v16.6h-1zM240,551.8h1v16.6h-1zM260,551.8h1v16.6h-1zM297,551.8h2v16.6h-2zM304,551.8h2v16.6h-2zM316,551.8h2v16.6h-2zM330,551.8h1v16.6h-1zM337,551.8h1v16.6h-1zM360,551.8h1v16.6h-1zM363,551.8h1v16.6h-1zM372,551.8h1v16.6h-1zM377,551.8h4v16.6h-4zM387,551.8h1v16.6h-1zM401,551.8h1v16.6h-1zM429,551.8h2v16.6h-2zM438,551.8h1v16.6h-1zM461,551.8h1v16.6h-1zM488,551.8h3v16.6h-3zM493,551.8h1v16.6h-1zM500,551.8h1v16.6h-1zM516,551.8h1v16.6h-1zM523,551.8h1v16.6h-1zM531,551.8h1v16.6h-1zM537,551.8h3v16.6h-3zM550,551.8h4v16.6h-4zM566,551.8h1v16.6h-1zM576,551.8h1v16.6h-1zM591,551.8h1v16.6h-1zM598,551.8h1v16.6h-1zM603,551.8h2v16.6h-2zM617,551.8h1v16.6h-1zM654,551.8h1v16.6h-1zM656,551.8h6v16.6h-6zM666,551.8h1v16.6h-1zM668,551.8h2v16.6h-2zM695,551.8h2v16.6h-2zM710,551.8h2v16.6h-2zM716,551.8h1v16.6h-1zM728,551.8h1v16.6h-1zM737,551.8h3v16.6h-3zM753,551.8h1v16.6h-1zM774,551.8h4v16.6h-4zM788,551.8h4v16.6h-4zM794,551.8h1v16.6h-1zM799,551.8h3v16.6h-3zM823,551.8h4v16.6h-4zM861,551.8h1v16.6h-1zM863,551.8h2v16.6h-2zM867,551.8h1v16.6h-1zM873,551.8h1v16.6h-1zM880,551.8h1v16.6h-1zM910,551.8h1v16.6h-1zM930,551.8h3v16.6h-3zM945,551.8h1v16.6h-1zM971,551.8h4v16.6h-4zM976,551.8h2v16.6h-2zM991,551.8h1v16.6h-1zM993,551.8h2v16.6h-2zM999,551.8h2v16.6h-2zM1009,551.8h1v16.6h-1zM1024,551.8h2v16.6h-2zM1076,551.8h2v16.6h-2zM117,568.4h2v16.6h-2zM129,568.4h1v16.6h-1zM138,568.4h5v16.6h-5zM178,568.4h1v16.6h-1zM198,568.4h1v16.6h-1zM211,568.4h2v16.6h-2zM223,568.4h1v16.6h-1zM240,568.4h1v16.6h-1zM260,568.4h1v16.6h-1zM264,568.4h2v16.6h-2zM290,568.4h3v16.6h-3zM297,568.4h2v16.6h-2zM304,568.4h2v16.6h-2zM316,568.4h2v16.6h-2zM330,568.4h1v16.6h-1zM337,568.4h1v16.6h-1zM372,568.4h1v16.6h-1zM393,568.4h1v16.6h-1zM401,568.4h2v16.6h-2zM429,568.4h2v16.6h-2zM436,568.4h1v16.6h-1zM438,568.4h1v16.6h-1zM455,568.4h2v16.6h-2zM493,568.4h3v16.6h-3zM500,568.4h1v16.6h-1zM516,568.4h1v16.6h-1zM523,568.4h1v16.6h-1zM531,568.4h1v16.6h-1zM537,568.4h3v16.6h-3zM550,568.4h4v16.6h-4zM556,568.4h1v16.6h-1zM561,568.4h3v16.6h-3zM566,568.4h1v16.6h-1zM574,568.4h1v16.6h-1zM576,568.4h1v16.6h-1zM591,568.4h1v16.6h-1zM593,568.4h2v16.6h-2zM598,568.4h1v16.6h-1zM603,568.4h2v16.6h-2zM617,568.4h1v16.6h-1zM654,568.4h1v16.6h-1zM656,568.4h1v16.6h-1zM659,568.4h3v16.6h-3zM666,568.4h1v16.6h-1zM684,568.4h1v16.6h-1zM695,568.4h2v16.6h-2zM710,568.4h2v16.6h-2zM716,568.4h1v16.6h-1zM728,568.4h1v16.6h-1zM737,568.4h3v16.6h-3zM741,568.4h1v16.6h-1zM746,568.4h1v16.6h-1zM758,568.4h1v16.6h-1zM774,568.4h4v16.6h-4zM788,568.4h1v16.6h-1zM790,568.4h2v16.6h-2zM794,568.4h2v16.6h-2zM800,568.4h2v16.6h-2zM814,568.4h1v16.6h-1zM861,568.4h1v16.6h-1zM867,568.4h1v16.6h-1zM873,568.4h1v16.6h-1zM880,568.4h1v16.6h-1zM910,568.4h1v16.6h-1zM930,568.4h1v16.6h-1zM945,568.4h1v16.6h-1zM976,568.4h2v16.6h-2zM992,568.4h1v16.6h-1zM1009,568.4h1v16.6h-1zM117,585.0h1v20.4h-1zM121,585.0h2v20.4h-2zM144,585.0h3v20.4h-3zM178,585.0h1v20.4h-1zM196,585.0h1v20.4h-1zM198,585.0h1v20.4h-1zM211,585.0h2v20.4h-2zM240,585.0h1v20.4h-1zM290,585.0h3v20.4h-3zM296,585.0h3v20.4h-3zM304,585.0h2v20.4h-2zM316,585.0h2v20.4h-2zM330,585.0h1v20.4h-1zM372,585.0h1v20.4h-1zM393,585.0h1v20.4h-1zM401,585.0h2v20.4h-2zM404,585.0h2v20.4h-2zM429,585.0h2v20.4h-2zM436,585.0h1v20.4h-1zM438,585.0h1v20.4h-1zM455,585.0h2v20.4h-2zM470,585.0h1v20.4h-1zM493,585.0h3v20.4h-3zM523,585.0h1v20.4h-1zM531,585.0h1v20.4h-1zM556,585.0h1v20.4h-1zM561,585.0h3v20.4h-3zM566,585.0h1v20.4h-1zM591,585.0h1v20.4h-1zM603,585.0h2v20.4h-2zM617,585.0h1v20.4h-1zM654,585.0h1v20.4h-1zM666,585.0h1v20.4h-1zM684,585.0h1v20.4h-1zM695,585.0h2v20.4h-2zM716,585.0h1v20.4h-1zM728,585.0h1v20.4h-1zM741,585.0h1v20.4h-1zM750,585.0h3v20.4h-3zM758,585.0h1v20.4h-1zM774,585.0h1v20.4h-1zM777,585.0h1v20.4h-1zM788,585.0h1v20.4h-1zM794,585.0h1v20.4h-1zM814,585.0h1v20.4h-1zM861,585.0h1v20.4h-1zM867,585.0h1v20.4h-1zM873,585.0h1v20.4h-1zM880,585.0h1v20.4h-1zM894,585.0h1v20.4h-1zM910,585.0h1v20.4h-1zM938,585.0h1v20.4h-1zM945,585.0h1v20.4h-1zM949,585.0h1v20.4h-1zM976,585.0h2v20.4h-2zM992,585.0h1v20.4h-1zM1042,585.0h1v20.4h-1zM117,605.4h1v12.6h-1zM121,605.4h2v12.6h-2zM178,605.4h1v12.6h-1zM196,605.4h1v12.6h-1zM220,605.4h1v12.6h-1zM240,605.4h1v12.6h-1zM290,605.4h1v12.6h-1zM296,605.4h3v12.6h-3zM371,605.4h2v12.6h-2zM393,605.4h1v12.6h-1zM402,605.4h1v12.6h-1zM429,605.4h2v12.6h-2zM436,605.4h1v12.6h-1zM438,605.4h1v12.6h-1zM470,605.4h1v12.6h-1zM494,605.4h2v12.6h-2zM523,605.4h1v12.6h-1zM527,605.4h1v12.6h-1zM531,605.4h1v12.6h-1zM542,605.4h1v12.6h-1zM561,605.4h3v12.6h-3zM566,605.4h1v12.6h-1zM591,605.4h1v12.6h-1zM603,605.4h2v12.6h-2zM654,605.4h1v12.6h-1zM666,605.4h1v12.6h-1zM684,605.4h1v12.6h-1zM718,605.4h2v12.6h-2zM750,605.4h3v12.6h-3zM774,605.4h1v12.6h-1zM777,605.4h1v12.6h-1zM779,605.4h1v12.6h-1zM788,605.4h1v12.6h-1zM794,605.4h1v12.6h-1zM861,605.4h1v12.6h-1zM865,605.4h2v12.6h-2zM880,605.4h1v12.6h-1zM894,605.4h1v12.6h-1zM945,605.4h1v12.6h-1zM949,605.4h1v12.6h-1zM976,605.4h3v12.6h-3zM117,618.0h1v12.7h-1zM121,618.0h2v12.7h-2zM151,618.0h1v12.7h-1zM154,618.0h1v12.7h-1zM160,618.0h2v12.7h-2zM178,618.0h1v12.7h-1zM196,618.0h1v12.7h-1zM220,618.0h1v12.7h-1zM261,618.0h1v12.7h-1zM270,618.0h1v12.7h-1zM290,618.0h1v12.7h-1zM297,618.0h2v12.7h-2zM346,618.0h2v12.7h-2zM371,618.0h2v12.7h-2zM402,618.0h1v12.7h-1zM429,618.0h2v12.7h-2zM434,618.0h1v12.7h-1zM436,618.0h1v12.7h-1zM447,618.0h2v12.7h-2zM461,618.0h1v12.7h-1zM527,618.0h1v12.7h-1zM531,618.0h1v12.7h-1zM561,618.0h3v12.7h-3zM566,618.0h1v12.7h-1zM590,618.0h2v12.7h-2zM654,618.0h1v12.7h-1zM666,618.0h1v12.7h-1zM670,618.0h1v12.7h-1zM684,618.0h1v12.7h-1zM689,618.0h1v12.7h-1zM718,618.0h2v12.7h-2zM750,618.0h3v12.7h-3zM762,618.0h1v12.7h-1zM774,618.0h1v12.7h-1zM779,618.0h1v12.7h-1zM788,618.0h1v12.7h-1zM794,618.0h1v12.7h-1zM841,618.0h2v12.7h-2zM861,618.0h1v12.7h-1zM880,618.0h1v12.7h-1zM894,618.0h1v12.7h-1zM945,618.0h1v12.7h-1zM949,618.0h1v12.7h-1zM978,618.0h1v12.7h-1zM1073,618.0h3v12.7h-3zM117,630.7h1v16.6h-1zM151,630.7h1v16.6h-1zM154,630.7h1v16.6h-1zM160,630.7h2v16.6h-2zM195,630.7h1v16.6h-1zM220,630.7h1v16.6h-1zM261,630.7h1v16.6h-1zM270,630.7h1v16.6h-1zM294,630.7h1v16.6h-1zM297,630.7h2v16.6h-2zM331,630.7h1v16.6h-1zM346,630.7h2v16.6h-2zM429,630.7h2v16.6h-2zM434,630.7h1v16.6h-1zM436,630.7h1v16.6h-1zM442,630.7h1v16.6h-1zM447,630.7h2v16.6h-2zM461,630.7h1v16.6h-1zM504,630.7h2v16.6h-2zM531,630.7h1v16.6h-1zM557,630.7h1v16.6h-1zM561,630.7h3v16.6h-3zM566,630.7h1v16.6h-1zM590,630.7h2v16.6h-2zM666,630.7h1v16.6h-1zM670,630.7h1v16.6h-1zM684,630.7h1v16.6h-1zM689,630.7h1v16.6h-1zM737,630.7h3v16.6h-3zM750,630.7h3v16.6h-3zM774,630.7h1v16.6h-1zM779,630.7h1v16.6h-1zM788,630.7h1v16.6h-1zM794,630.7h1v16.6h-1zM838,630.7h1v16.6h-1zM861,630.7h1v16.6h-1zM880,630.7h1v16.6h-1zM894,630.7h1v16.6h-1zM914,630.7h2v16.6h-2zM926,630.7h1v16.6h-1zM945,630.7h1v16.6h-1zM958,630.7h2v16.6h-2zM978,630.7h1v16.6h-1zM1023,630.7h1v16.6h-1zM1074,630.7h2v16.6h-2zM117,647.3h1v16.6h-1zM125,647.3h1v16.6h-1zM151,647.3h1v16.6h-1zM154,647.3h1v16.6h-1zM160,647.3h2v16.6h-2zM220,647.3h1v16.6h-1zM261,647.3h1v16.6h-1zM270,647.3h1v16.6h-1zM290,647.3h1v16.6h-1zM293,647.3h2v16.6h-2zM297,647.3h2v16.6h-2zM331,647.3h1v16.6h-1zM346,647.3h2v16.6h-2zM369,647.3h1v16.6h-1zM429,647.3h2v16.6h-2zM434,647.3h1v16.6h-1zM436,647.3h1v16.6h-1zM443,647.3h2v16.6h-2zM455,647.3h2v16.6h-2zM461,647.3h1v16.6h-1zM504,647.3h2v16.6h-2zM542,647.3h1v16.6h-1zM554,647.3h2v16.6h-2zM557,647.3h1v16.6h-1zM561,647.3h3v16.6h-3zM566,647.3h1v16.6h-1zM594,647.3h1v16.6h-1zM662,647.3h2v16.6h-2zM666,647.3h1v16.6h-1zM670,647.3h1v16.6h-1zM684,647.3h1v16.6h-1zM689,647.3h1v16.6h-1zM706,647.3h2v16.6h-2zM722,647.3h1v16.6h-1zM737,647.3h3v16.6h-3zM750,647.3h3v16.6h-3zM774,647.3h1v16.6h-1zM779,647.3h1v16.6h-1zM788,647.3h1v16.6h-1zM794,647.3h1v16.6h-1zM814,647.3h1v16.6h-1zM832,647.3h2v16.6h-2zM835,647.3h1v16.6h-1zM838,647.3h1v16.6h-1zM861,647.3h1v16.6h-1zM880,647.3h1v16.6h-1zM900,647.3h2v16.6h-2zM926,647.3h1v16.6h-1zM933,647.3h1v16.6h-1zM935,647.3h1v16.6h-1zM958,647.3h1v16.6h-1zM964,647.3h2v16.6h-2zM978,647.3h1v16.6h-1zM1008,647.3h1v16.6h-1zM1023,647.3h1v16.6h-1zM1036,647.3h1v16.6h-1zM1048,647.3h1v16.6h-1zM1073,647.3h1v16.6h-1zM136,663.9h2v12.6h-2zM151,663.9h1v12.6h-1zM154,663.9h1v12.6h-1zM160,663.9h2v12.6h-2zM220,663.9h1v12.6h-1zM258,663.9h2v12.6h-2zM275,663.9h2v12.6h-2zM282,663.9h1v12.6h-1zM289,663.9h1v12.6h-1zM293,663.9h2v12.6h-2zM347,663.9h1v12.6h-1zM378,663.9h2v12.6h-2zM410,663.9h1v12.6h-1zM429,663.9h2v12.6h-2zM455,663.9h2v12.6h-2zM504,663.9h2v12.6h-2zM525,663.9h2v12.6h-2zM537,663.9h6v12.6h-6zM554,663.9h2v12.6h-2zM557,663.9h1v12.6h-1zM566,663.9h1v12.6h-1zM597,663.9h1v12.6h-1zM615,663.9h1v12.6h-1zM617,663.9h1v12.6h-1zM643,663.9h1v12.6h-1zM656,663.9h1v12.6h-1zM663,663.9h1v12.6h-1zM708,663.9h1v12.6h-1zM722,663.9h1v12.6h-1zM737,663.9h3v12.6h-3zM750,663.9h2v12.6h-2zM774,663.9h3v12.6h-3zM788,663.9h1v12.6h-1zM794,663.9h1v12.6h-1zM861,663.9h2v12.6h-2zM880,663.9h2v12.6h-2zM900,663.9h2v12.6h-2zM933,663.9h1v12.6h-1zM935,663.9h1v12.6h-1zM958,663.9h1v12.6h-1zM964,663.9h2v12.6h-2zM1008,663.9h1v12.6h-1zM1023,663.9h1v12.6h-1zM1028,663.9h1v12.6h-1zM1048,663.9h1v12.6h-1zM106,676.5h1v13.7h-1zM136,676.5h2v13.7h-2zM151,676.5h1v13.7h-1zM157,676.5h1v13.7h-1zM160,676.5h2v13.7h-2zM179,676.5h2v13.7h-2zM205,676.5h1v13.7h-1zM220,676.5h1v13.7h-1zM258,676.5h2v13.7h-2zM275,676.5h2v13.7h-2zM279,676.5h1v13.7h-1zM282,676.5h1v13.7h-1zM290,676.5h1v13.7h-1zM293,676.5h2v13.7h-2zM316,676.5h2v13.7h-2zM336,676.5h1v13.7h-1zM347,676.5h1v13.7h-1zM408,676.5h1v13.7h-1zM411,676.5h2v13.7h-2zM429,676.5h2v13.7h-2zM445,676.5h1v13.7h-1zM455,676.5h2v13.7h-2zM486,676.5h2v13.7h-2zM496,676.5h2v13.7h-2zM510,676.5h2v13.7h-2zM525,676.5h2v13.7h-2zM556,676.5h1v13.7h-1zM566,676.5h1v13.7h-1zM592,676.5h1v13.7h-1zM597,676.5h1v13.7h-1zM607,676.5h3v13.7h-3zM615,676.5h1v13.7h-1zM617,676.5h1v13.7h-1zM621,676.5h1v13.7h-1zM636,676.5h3v13.7h-3zM684,676.5h1v13.7h-1zM708,676.5h1v13.7h-1zM722,676.5h1v13.7h-1zM737,676.5h2v13.7h-2zM772,676.5h1v13.7h-1zM774,676.5h3v13.7h-3zM805,676.5h1v13.7h-1zM827,676.5h2v13.7h-2zM830,676.5h1v13.7h-1zM841,676.5h2v13.7h-2zM856,676.5h1v13.7h-1zM861,676.5h1v13.7h-1zM881,676.5h1v13.7h-1zM885,676.5h1v13.7h-1zM889,676.5h1v13.7h-1zM892,676.5h1v13.7h-1zM901,676.5h1v13.7h-1zM925,676.5h1v13.7h-1zM930,676.5h1v13.7h-1zM933,676.5h1v13.7h-1zM935,676.5h1v13.7h-1zM949,676.5h1v13.7h-1zM958,676.5h1v13.7h-1zM964,676.5h2v13.7h-2zM967,676.5h1v13.7h-1zM980,676.5h2v13.7h-2zM998,676.5h1v13.7h-1zM1008,676.5h1v13.7h-1zM1010,676.5h3v13.7h-3zM1016,676.5h1v13.7h-1zM1024,676.5h3v13.7h-3zM1040,676.5h1v13.7h-1zM1048,676.5h1v13.7h-1zM1050,676.5h2v13.7h-2zM1067,676.5h1v13.7h-1z" fill="url(#p4b)" shape-rendering="crispEdges"/>
<path d="M322,676.5h14v13.7h-14zM337,676.5h10v13.7h-10zM348,676.5h4v13.7h-4zM368,676.5h3v13.7h-3zM372,676.5h26v13.7h-26zM660,676.5h5v13.7h-5zM666,676.5h5v13.7h-5zM672,676.5h1v13.7h-1zM674,676.5h10v13.7h-10zM687,676.5h2v13.7h-2zM690,676.5h8v13.7h-8zM739,676.5h3v13.7h-3zM745,676.5h1v13.7h-1zM747,676.5h7v13.7h-7zM756,676.5h2v13.7h-2zM761,676.5h9v13.7h-9zM900,676.5h1v13.7h-1zM904,676.5h15v13.7h-15zM975,676.5h5v13.7h-5zM982,676.5h6v13.7h-6z" fill="url(#p4c)" shape-rendering="crispEdges"/>
<line x1="136.50" y1="688.00" x2="136.50" y2="690.00" stroke="#333" stroke-width="1" shape-rendering="crispEdges"/>
<line x1="177.50" y1="688.00" x2="177.50" y2="690.00" stroke="#333" stroke-width="1" shape-rendering="crispEdges"/>
<line x1="218.50" y1="688.00" x2="218.50" y2="690.00" stroke="#333" stroke-width="1" shape-rendering="crispEdges"/>
<line x1="259.50" y1="688.00" x2="259.50" y2="690.00" stroke="#333" stroke-width="1" shape-rendering="crispEdges"/>
<line x1="300.50" y1="688.00" x2="300.50" y2="690.00" stroke="#333" stroke-width="1" shape-rendering="crispEdges"/>
<line x1="341.50" y1="688.00" x2="341.50" y2="690.00" stroke="#333" stroke-width="1" shape-rendering="crispEdges"/>
<line x1="382.50" y1="688.00" x2="382.50" y2="690.00" stroke="#333" stroke-width="1" shape-rendering="crispEdges"/>
<line x1="423.50" y1="688.00" x2="423.50" y2="690.00" stroke="#333" stroke-width="1" shape-rendering="crispEdges"/>
<line x1="464.50" y1="688.00" x2="464.50" y2="690.00" stroke="#333" stroke-width="1" shape-rendering="crispEdges"/>
<line x1="505.50" y1="688.00" x2="505.50" y2="690.00" stroke="#333" stroke-width="1" shape-rendering="crispEdges"/>
<line x1="546.50" y1="688.00" x2="546.50" y2="690.00" stroke="#333" stroke-width="1" shape-rendering="crispEdges"/>
<line x1="587.50" y1="688.00" x2="587.50" y2="690.00" stroke="#333" stroke-width="1" shape-rendering="crispEdges"/>
<line x1="628.50" y1="688.00" x2="628.50" y2="690.00" stroke="#333" stroke-width="1" shape-rendering="crispEdges"/>
<line x1="669.50" y1="688.00" x2="669.50" y2="690.00" stroke="#333" stroke-width="1" shape-rendering="crispEdges"/>
<line x1="710.50" y1="688.00" x2="710.50" y2="690.00" stroke="#333" stroke-width="1" shape-rendering="crispEdges"/>
<line x1="751.50" y1="688.00" x2="751.50" y2="690.00" stroke="#333" stroke-width="1" shape-rendering="crispEdges"/>
<line x1="792.50" y1="688.00" x2="792.50" y2="690.00" stroke="#333" stroke-width="1" shape-rendering="crispEdges"/>
<line x1="833.50" y1="688.00" x2="833.50" y2="690.00" stroke="#333" stroke-width="1" shape-rendering="crispEdges"/>
<line x1="874.50" y1="688.00" x2="874.50" y2="690.00" stroke="#333" stroke-width="1" shape-rendering="crispEdges"/>
<line x1="915.50" y1="688.00" x2="915.50" y2="690.00" stroke="#333" stroke-width="1" shape-rendering="crispEdges"/>
<line x1="956.50" y1="688.00" x2="956.50" y2="690.00" stroke="#333" stroke-width="1" shape-rendering="crispEdges"/>
<line x1="997.50" y1="688.00" x2="997.50" y2="690.00" stroke="#333" stroke-width="1" shape-rendering="crispEdges"/>
<line x1="1038.50" y1="688.00" x2="1038.50" y2="690.00" stroke="#333" stroke-width="1" shape-rendering="crispEdges"/>
<line x1="95.00" y1="686.50" x2="91.00" y2="686.50" stroke="#111" stroke-width="1" shape-rendering="crispEdges"/>
<line x1="95.00" y1="679.50" x2="91.00" y2="679.50" stroke="#111" stroke-width="1" shape-rendering="crispEdges"/>
<line x1="95.00" y1="674.50" x2="91.00" y2="674.50" stroke="#111" stroke-width="1" shape-rendering="crispEdges"/>
<line x1="95.00" y1="670.50" x2="91.00" y2="670.50" stroke="#111" stroke-width="1" shape-rendering="crispEdges"/>
<line x1="95.00" y1="666.50" x2="91.00" y2="666.50" stroke="#111" stroke-width="1" shape-rendering="crispEdges"/>
<line x1="95.00" y1="663.50" x2="91.00" y2="663.50" stroke="#111" stroke-width="1" shape-rendering="crispEdges"/>
<line x1="95.00" y1="661.50" x2="91.00" y2="661.50" stroke="#111" stroke-width="1" shape-rendering="crispEdges"/>
<line x1="95.00" y1="658.50" x2="87.00" y2="658.50" stroke="#111" stroke-width="1" shape-rendering="crispEdges"/>
<line x1="95.00" y1="642.50" x2="91.00" y2="642.50" stroke="#111" stroke-width="1" shape-rendering="crispEdges"/>
<line x1="95.00" y1="633.50" x2="91.00" y2="633.50" stroke="#111" stroke-width="1" shape-rendering="crispEdges"/>
<line x1="95.00" y1="627.50" x2="91.00" y2="627.50" stroke="#111" stroke-width="1" shape-rendering="crispEdges"/>
<line x1="95.00" y1="622.50" x2="91.00" y2="622.50" stroke="#111" stroke-width="1" shape-rendering="crispEdges"/>
<line x1="95.00" y1="617.50" x2="91.00" y2="617.50" stroke="#111" stroke-width="1" shape-rendering="crispEdges"/>
<line x1="95.00" y1="614.50" x2="91.00" y2="614.50" stroke="#111" stroke-width="1" shape-rendering="crispEdges"/>
<line x1="95.00" y1="611.50" x2="91.00" y2="611.50" stroke="#111" stroke-width="1" shape-rendering="crispEdges"/>
<line x1="95.00" y1="608.50" x2="91.00" y2="608.50" stroke="#111" stroke-width="1" shape-rendering="crispEdges"/>
<line x1="95.00" y1="606.50" x2="87.00" y2="606.50" stroke="#111" stroke-width="1" shape-rendering="crispEdges"/>
<line x1="95.00" y1="590.50" x2="91.00" y2="590.50" stroke="#111" stroke-width="1" shape-rendering="crispEdges"/>
<line x1="95.00" y1="581.50" x2="91.00" y2="581.50" stroke="#111" stroke-width="1" shape-rendering="crispEdges"/>
<line x1="95.00" y1="574.50" x2="91.00" y2="574.50" stroke="#111" stroke-width="1" shape-rendering="crispEdges"/>
<line x1="95.00" y1="569.50" x2="91.00" y2="569.50" stroke="#111" stroke-width="1" shape-rendering="crispEdges"/>
<line x1="95.00" y1="565.50" x2="91.00" y2="565.50" stroke="#111" stroke-width="1" shape-rendering="crispEdges"/>
<line x1="95.00" y1="561.50" x2="91.00" y2="561.50" stroke="#111" stroke-width="1" shape-rendering="crispEdges"/>
<line x1="95.00" y1="558.50" x2="91.00" y2="558.50" stroke="#111" stroke-width="1" shape-rendering="crispEdges"/>
<line x1="95.00" y1="556.50" x2="91.00" y2="556.50" stroke="#111" stroke-width="1" shape-rendering="crispEdges"/>
<line x1="95.00" y1="553.50" x2="87.00" y2="553.50" stroke="#111" stroke-width="1" shape-rendering="crispEdges"/>
<line x1="95.00" y1="537.50" x2="91.00" y2="537.50" stroke="#111" stroke-width="1" shape-rendering="crispEdges"/>
<line x1="95.00" y1="528.50" x2="91.00" y2="528.50" stroke="#111" stroke-width="1" shape-rendering="crispEdges"/>
<line x1="95.00" y1="522.50" x2="91.00" y2="522.50" stroke="#111" stroke-width="1" shape-rendering="crispEdges"/>
<line x1="95.00" y1="517.50" x2="91.00" y2="517.50" stroke="#111" stroke-width="1" shape-rendering="crispEdges"/>
<line x1="95.00" y1="512.50" x2="91.00" y2="512.50" stroke="#111" stroke-width="1" shape-rendering="crispEdges"/>
<text x="81.50" y="561.80" text-anchor="end" font-size="12">10<tspan dx="1.5" dy="-6" font-size="10.5">4</tspan></text>
<text x="81.50" y="613.80" text-anchor="end" font-size="12">10<tspan dx="1.5" dy="-6" font-size="10.5">3</tspan></text>
<text x="81.50" y="666.80" text-anchor="end" font-size="12">10<tspan dx="1.5" dy="-6" font-size="10.5">2</tspan></text>
<text transform="translate(50.00,601.00) rotate(-90)" text-anchor="middle" font-size="11.5" >Energy (keV)</text>
<text x="9.50" y="537.00" text-anchor="start" font-size="11.6" textLength="65.5" lengthAdjust="spacingAndGlyphs">LEMMS Ions</text>
<rect x="1092" y="515" width="12.5" height="176.29999999999995" fill="url(#cb)"/>
<line x1="1104.50" y1="514.00" x2="1104.50" y2="691.00" stroke="#111" stroke-width="1" shape-rendering="crispEdges"/>
<line x1="1104.00" y1="515.50" x2="1113.00" y2="515.50" stroke="#111" stroke-width="1" shape-rendering="crispEdges"/>
<line x1="1104.00" y1="535.50" x2="1109.00" y2="535.50" stroke="#111" stroke-width="1" shape-rendering="crispEdges"/>
<line x1="1104.00" y1="554.50" x2="1113.00" y2="554.50" stroke="#111" stroke-width="1" shape-rendering="crispEdges"/>
<line x1="1104.00" y1="574.50" x2="1109.00" y2="574.50" stroke="#111" stroke-width="1" shape-rendering="crispEdges"/>
<line x1="1104.00" y1="593.50" x2="1113.00" y2="593.50" stroke="#111" stroke-width="1" shape-rendering="crispEdges"/>
<line x1="1104.00" y1="613.50" x2="1109.00" y2="613.50" stroke="#111" stroke-width="1" shape-rendering="crispEdges"/>
<line x1="1104.00" y1="632.50" x2="1113.00" y2="632.50" stroke="#111" stroke-width="1" shape-rendering="crispEdges"/>
<line x1="1104.00" y1="652.50" x2="1109.00" y2="652.50" stroke="#111" stroke-width="1" shape-rendering="crispEdges"/>
<line x1="1104.00" y1="671.50" x2="1113.00" y2="671.50" stroke="#111" stroke-width="1" shape-rendering="crispEdges"/>
<line x1="1104.00" y1="691.50" x2="1109.00" y2="691.50" stroke="#111" stroke-width="1" shape-rendering="crispEdges"/>
<text x="1117.50" y="523.50" font-size="12">10<tspan dx="1.5" dy="-6" font-size="10.5">4</tspan></text>
<text x="1117.50" y="562.50" font-size="12">10<tspan dx="1.5" dy="-6" font-size="10.5">2</tspan></text>
<text x="1117.50" y="601.30" font-size="12">10<tspan dx="1.5" dy="-6" font-size="10.5">0</tspan></text>
<text x="1117.50" y="640.50" font-size="12">10<tspan dx="1.5" dy="-6" font-size="10.5">-2</tspan></text>
<text x="1117.50" y="679.80" font-size="12">10<tspan dx="1.5" dy="-6" font-size="10.5">-4</tspan></text>
<text transform="translate(1156.00,601.50) rotate(90)" text-anchor="middle" font-size="11.5" >intensity 1/(s cm^2 ster keV)</text>
<rect x="95.75" y="695.5" width="984.75" height="15" fill="#00ff00" stroke="#111" stroke-width="1"/>
<line x1="96.00" y1="695.00" x2="96.00" y2="711.00" stroke="#111" stroke-width="2" />
<text x="78.80" y="706.00" text-anchor="end" font-size="11.3" textLength="49.5" lengthAdjust="spacingAndGlyphs">Sunlight?</text>
<line x1="136.50" y1="710.00" x2="136.50" y2="714.00" stroke="#111" stroke-width="1" shape-rendering="crispEdges"/>
<line x1="177.50" y1="710.00" x2="177.50" y2="714.00" stroke="#111" stroke-width="1" shape-rendering="crispEdges"/>
<line x1="218.50" y1="710.00" x2="218.50" y2="718.00" stroke="#111" stroke-width="1" shape-rendering="crispEdges"/>
<line x1="259.50" y1="710.00" x2="259.50" y2="714.00" stroke="#111" stroke-width="1" shape-rendering="crispEdges"/>
<line x1="300.50" y1="710.00" x2="300.50" y2="714.00" stroke="#111" stroke-width="1" shape-rendering="crispEdges"/>
<line x1="341.50" y1="710.00" x2="341.50" y2="718.00" stroke="#111" stroke-width="1" shape-rendering="crispEdges"/>
<line x1="382.50" y1="710.00" x2="382.50" y2="714.00" stroke="#111" stroke-width="1" shape-rendering="crispEdges"/>
<line x1="423.50" y1="710.00" x2="423.50" y2="714.00" stroke="#111" stroke-width="1" shape-rendering="crispEdges"/>
<line x1="464.50" y1="710.00" x2="464.50" y2="718.00" stroke="#111" stroke-width="1" shape-rendering="crispEdges"/>
<line x1="505.50" y1="710.00" x2="505.50" y2="714.00" stroke="#111" stroke-width="1" shape-rendering="crispEdges"/>
<line x1="546.50" y1="710.00" x2="546.50" y2="714.00" stroke="#111" stroke-width="1" shape-rendering="crispEdges"/>
<line x1="587.50" y1="710.00" x2="587.50" y2="718.00" stroke="#111" stroke-width="1" shape-rendering="crispEdges"/>
<line x1="628.50" y1="710.00" x2="628.50" y2="714.00" stroke="#111" stroke-width="1" shape-rendering="crispEdges"/>
<line x1="669.50" y1="710.00" x2="669.50" y2="714.00" stroke="#111" stroke-width="1" shape-rendering="crispEdges"/>
<line x1="710.50" y1="710.00" x2="710.50" y2="718.00" stroke="#111" stroke-width="1" shape-rendering="crispEdges"/>
<line x1="751.50" y1="710.00" x2="751.50" y2="714.00" stroke="#111" stroke-width="1" shape-rendering="crispEdges"/>
<line x1="792.50" y1="710.00" x2="792.50" y2="714.00" stroke="#111" stroke-width="1" shape-rendering="crispEdges"/>
<line x1="833.50" y1="710.00" x2="833.50" y2="718.00" stroke="#111" stroke-width="1" shape-rendering="crispEdges"/>
<line x1="874.50" y1="710.00" x2="874.50" y2="714.00" stroke="#111" stroke-width="1" shape-rendering="crispEdges"/>
<line x1="915.50" y1="710.00" x2="915.50" y2="714.00" stroke="#111" stroke-width="1" shape-rendering="crispEdges"/>
<line x1="956.50" y1="710.00" x2="956.50" y2="718.00" stroke="#111" stroke-width="1" shape-rendering="crispEdges"/>
<line x1="997.50" y1="710.00" x2="997.50" y2="714.00" stroke="#111" stroke-width="1" shape-rendering="crispEdges"/>
<line x1="1038.50" y1="710.00" x2="1038.50" y2="714.00" stroke="#111" stroke-width="1" shape-rendering="crispEdges"/>
<line x1="1079.50" y1="710.00" x2="1079.50" y2="718.00" stroke="#111" stroke-width="1" shape-rendering="crispEdges"/>
<text x="235.50" y="734.00" text-anchor="end" font-size="12" >03:00</text>
<text x="235.50" y="748.50" text-anchor="end" font-size="12" >9.89</text>
<text x="235.50" y="763.50" text-anchor="end" font-size="12" >28.15</text>
<text x="235.50" y="778.50" text-anchor="end" font-size="12" >29.42</text>
<text x="358.50" y="734.00" text-anchor="end" font-size="12" >06:00</text>
<text x="358.50" y="748.50" text-anchor="end" font-size="12" >9.94</text>
<text x="358.50" y="763.50" text-anchor="end" font-size="12" >27.57</text>
<text x="358.50" y="778.50" text-anchor="end" font-size="12" >28.57</text>
<text x="481.50" y="734.00" text-anchor="end" font-size="12" >09:00</text>
<text x="481.50" y="748.50" text-anchor="end" font-size="12" >9.99</text>
<text x="481.50" y="763.50" text-anchor="end" font-size="12" >26.98</text>
<text x="481.50" y="778.50" text-anchor="end" font-size="12" >27.74</text>
<text x="604.50" y="734.00" text-anchor="end" font-size="12" >12:00</text>
<text x="604.50" y="748.50" text-anchor="end" font-size="12" >10.04</text>
<text x="604.50" y="763.50" text-anchor="end" font-size="12" >26.39</text>
<text x="604.50" y="778.50" text-anchor="end" font-size="12" >26.93</text>
<text x="727.50" y="734.00" text-anchor="end" font-size="12" >15:00</text>
<text x="727.50" y="748.50" text-anchor="end" font-size="12" >10.10</text>
<text x="727.50" y="763.50" text-anchor="end" font-size="12" >25.78</text>
<text x="727.50" y="778.50" text-anchor="end" font-size="12" >26.14</text>
<text x="850.50" y="734.00" text-anchor="end" font-size="12" >18:00</text>
<text x="850.50" y="748.50" text-anchor="end" font-size="12" >10.16</text>
<text x="850.50" y="763.50" text-anchor="end" font-size="12" >25.17</text>
<text x="850.50" y="778.50" text-anchor="end" font-size="12" >25.38</text>
<text x="973.50" y="734.00" text-anchor="end" font-size="12" >21:00</text>
<text x="973.50" y="748.50" text-anchor="end" font-size="12" >10.22</text>
<text x="973.50" y="763.50" text-anchor="end" font-size="12" >24.55</text>
<text x="973.50" y="778.50" text-anchor="end" font-size="12" >24.65</text>
<text x="1096.50" y="734.00" text-anchor="end" font-size="12" >00:00</text>
<text x="1096.50" y="748.50" text-anchor="end" font-size="12" >10.28</text>
<text x="1096.50" y="763.50" text-anchor="end" font-size="12" >23.92</text>
<text x="1096.50" y="778.50" text-anchor="end" font-size="12" >23.95</text>
<text x="1062.00" y="746.00" text-anchor="start" font-size="12" textLength="62.5" lengthAdjust="spacing">2014-292</text>
<text x="60.00" y="748.50" text-anchor="end" font-size="11.6" >LT (hrs)</text>
<text x="60.00" y="763.50" text-anchor="end" font-size="11.6" >Rs</text>
<text x="60.00" y="778.50" text-anchor="end" font-size="11.6" >Dipole L</text>
<rect x="215.7" y="802.4" width="150.90000000000003" height="147.70000000000005" fill="#fff" stroke="#111" stroke-width="1"/>
<line x1="216.00" y1="803.50" x2="207.00" y2="803.50" stroke="#111" stroke-width="1" shape-rendering="crispEdges"/>
<line x1="215.70" y1="805.50" x2="211.20" y2="805.50" stroke="#000" stroke-width="1" shape-rendering="crispEdges"/>
<line x1="215.70" y1="807.50" x2="211.20" y2="807.50" stroke="#000" stroke-width="1" shape-rendering="crispEdges"/>
<line x1="215.70" y1="809.50" x2="211.20" y2="809.50" stroke="#000" stroke-width="1" shape-rendering="crispEdges"/>
<line x1="215.70" y1="810.50" x2="211.20" y2="810.50" stroke="#000" stroke-width="1" shape-rendering="crispEdges"/>
<line x1="215.70" y1="812.50" x2="211.20" y2="812.50" stroke="#000" stroke-width="1" shape-rendering="crispEdges"/>
<line x1="215.70" y1="814.50" x2="211.20" y2="814.50" stroke="#000" stroke-width="1" shape-rendering="crispEdges"/>
<line x1="215.70" y1="816.50" x2="211.20" y2="816.50" stroke="#000" stroke-width="1" shape-rendering="crispEdges"/>
<line x1="215.70" y1="818.50" x2="211.20" y2="818.50" stroke="#000" stroke-width="1" shape-rendering="crispEdges"/>
<line x1="215.70" y1="820.50" x2="211.20" y2="820.50" stroke="#000" stroke-width="1" shape-rendering="crispEdges"/>
<line x1="216.00" y1="821.50" x2="207.00" y2="821.50" stroke="#111" stroke-width="1" shape-rendering="crispEdges"/>
<line x1="215.70" y1="823.50" x2="211.20" y2="823.50" stroke="#000" stroke-width="1" shape-rendering="crispEdges"/>
<line x1="215.70" y1="825.50" x2="211.20" y2="825.50" stroke="#000" stroke-width="1" shape-rendering="crispEdges"/>
<line x1="215.70" y1="827.50" x2="211.20" y2="827.50" stroke="#000" stroke-width="1" shape-rendering="crispEdges"/>
<line x1="215.70" y1="829.50" x2="211.20" y2="829.50" stroke="#000" stroke-width="1" shape-rendering="crispEdges"/>
<line x1="215.70" y1="831.50" x2="211.20" y2="831.50" stroke="#000" stroke-width="1" shape-rendering="crispEdges"/>
<line x1="215.70" y1="832.50" x2="211.20" y2="832.50" stroke="#000" stroke-width="1" shape-rendering="crispEdges"/>
<line x1="215.70" y1="834.50" x2="211.20" y2="834.50" stroke="#000" stroke-width="1" shape-rendering="crispEdges"/>
<line x1="215.70" y1="836.50" x2="211.20" y2="836.50" stroke="#000" stroke-width="1" shape-rendering="crispEdges"/>
<line x1="215.70" y1="838.50" x2="211.20" y2="838.50" stroke="#000" stroke-width="1" shape-rendering="crispEdges"/>
<line x1="216.00" y1="839.50" x2="207.00" y2="839.50" stroke="#111" stroke-width="1" shape-rendering="crispEdges"/>
<line x1="215.70" y1="842.50" x2="211.20" y2="842.50" stroke="#000" stroke-width="1" shape-rendering="crispEdges"/>
<line x1="215.70" y1="843.50" x2="211.20" y2="843.50" stroke="#000" stroke-width="1" shape-rendering="crispEdges"/>
<line x1="215.70" y1="845.50" x2="211.20" y2="845.50" stroke="#000" stroke-width="1" shape-rendering="crispEdges"/>
<line x1="215.70" y1="847.50" x2="211.20" y2="847.50" stroke="#000" stroke-width="1" shape-rendering="crispEdges"/>
<line x1="215.70" y1="849.50" x2="211.20" y2="849.50" stroke="#000" stroke-width="1" shape-rendering="crispEdges"/>
<line x1="215.70" y1="851.50" x2="211.20" y2="851.50" stroke="#000" stroke-width="1" shape-rendering="crispEdges"/>
<line x1="215.70" y1="853.50" x2="211.20" y2="853.50" stroke="#000" stroke-width="1" shape-rendering="crispEdges"/>
<line x1="215.70" y1="854.50" x2="211.20" y2="854.50" stroke="#000" stroke-width="1" shape-rendering="crispEdges"/>
<line x1="215.70" y1="856.50" x2="211.20" y2="856.50" stroke="#000" stroke-width="1" shape-rendering="crispEdges"/>
<line x1="216.00" y1="858.50" x2="207.00" y2="858.50" stroke="#111" stroke-width="1" shape-rendering="crispEdges"/>
<line x1="215.70" y1="860.50" x2="211.20" y2="860.50" stroke="#000" stroke-width="1" shape-rendering="crispEdges"/>
<line x1="215.70" y1="862.50" x2="211.20" y2="862.50" stroke="#000" stroke-width="1" shape-rendering="crispEdges"/>
<line x1="215.70" y1="864.50" x2="211.20" y2="864.50" stroke="#000" stroke-width="1" shape-rendering="crispEdges"/>
<line x1="215.70" y1="866.50" x2="211.20" y2="866.50" stroke="#000" stroke-width="1" shape-rendering="crispEdges"/>
<line x1="215.70" y1="867.50" x2="211.20" y2="867.50" stroke="#000" stroke-width="1" shape-rendering="crispEdges"/>
<line x1="215.70" y1="869.50" x2="211.20" y2="869.50" stroke="#000" stroke-width="1" shape-rendering="crispEdges"/>
<line x1="215.70" y1="871.50" x2="211.20" y2="871.50" stroke="#000" stroke-width="1" shape-rendering="crispEdges"/>
<line x1="215.70" y1="873.50" x2="211.20" y2="873.50" stroke="#000" stroke-width="1" shape-rendering="crispEdges"/>
<line x1="215.70" y1="875.50" x2="211.20" y2="875.50" stroke="#000" stroke-width="1" shape-rendering="crispEdges"/>
<line x1="216.00" y1="876.50" x2="207.00" y2="876.50" stroke="#111" stroke-width="1" shape-rendering="crispEdges"/>
<line x1="215.70" y1="878.50" x2="211.20" y2="878.50" stroke="#000" stroke-width="1" shape-rendering="crispEdges"/>
<line x1="215.70" y1="880.50" x2="211.20" y2="880.50" stroke="#000" stroke-width="1" shape-rendering="crispEdges"/>
<line x1="215.70" y1="882.50" x2="211.20" y2="882.50" stroke="#000" stroke-width="1" shape-rendering="crispEdges"/>
<line x1="215.70" y1="884.50" x2="211.20" y2="884.50" stroke="#000" stroke-width="1" shape-rendering="crispEdges"/>
<line x1="215.70" y1="886.50" x2="211.20" y2="886.50" stroke="#000" stroke-width="1" shape-rendering="crispEdges"/>
<line x1="215.70" y1="888.50" x2="211.20" y2="888.50" stroke="#000" stroke-width="1" shape-rendering="crispEdges"/>
<line x1="215.70" y1="889.50" x2="211.20" y2="889.50" stroke="#000" stroke-width="1" shape-rendering="crispEdges"/>
<line x1="215.70" y1="891.50" x2="211.20" y2="891.50" stroke="#000" stroke-width="1" shape-rendering="crispEdges"/>
<line x1="215.70" y1="893.50" x2="211.20" y2="893.50" stroke="#000" stroke-width="1" shape-rendering="crispEdges"/>
<line x1="216.00" y1="894.50" x2="207.00" y2="894.50" stroke="#111" stroke-width="1" shape-rendering="crispEdges"/>
<line x1="215.70" y1="897.50" x2="211.20" y2="897.50" stroke="#000" stroke-width="1" shape-rendering="crispEdges"/>
<line x1="215.70" y1="899.50" x2="211.20" y2="899.50" stroke="#000" stroke-width="1" shape-rendering="crispEdges"/>
<line x1="215.70" y1="900.50" x2="211.20" y2="900.50" stroke="#000" stroke-width="1" shape-rendering="crispEdges"/>
<line x1="215.70" y1="902.50" x2="211.20" y2="902.50" stroke="#000" stroke-width="1" shape-rendering="crispEdges"/>
<line x1="215.70" y1="904.50" x2="211.20" y2="904.50" stroke="#000" stroke-width="1" shape-rendering="crispEdges"/>
<line x1="215.70" y1="906.50" x2="211.20" y2="906.50" stroke="#000" stroke-width="1" shape-rendering="crispEdges"/>
<line x1="215.70" y1="908.50" x2="211.20" y2="908.50" stroke="#000" stroke-width="1" shape-rendering="crispEdges"/>
<line x1="215.70" y1="910.50" x2="211.20" y2="910.50" stroke="#000" stroke-width="1" shape-rendering="crispEdges"/>
<line x1="215.70" y1="911.50" x2="211.20" y2="911.50" stroke="#000" stroke-width="1" shape-rendering="crispEdges"/>
<line x1="216.00" y1="913.50" x2="207.00" y2="913.50" stroke="#111" stroke-width="1" shape-rendering="crispEdges"/>
<line x1="215.70" y1="915.50" x2="211.20" y2="915.50" stroke="#000" stroke-width="1" shape-rendering="crispEdges"/>
<line x1="215.70" y1="917.50" x2="211.20" y2="917.50" stroke="#000" stroke-width="1" shape-rendering="crispEdges"/>
<line x1="215.70" y1="919.50" x2="211.20" y2="919.50" stroke="#000" stroke-width="1" shape-rendering="crispEdges"/>
<line x1="215.70" y1="921.50" x2="211.20" y2="921.50" stroke="#000" stroke-width="1" shape-rendering="crispEdges"/>
<line x1="215.70" y1="923.50" x2="211.20" y2="923.50" stroke="#000" stroke-width="1" shape-rendering="crispEdges"/>
<line x1="215.70" y1="924.50" x2="211.20" y2="924.50" stroke="#000" stroke-width="1" shape-rendering="crispEdges"/>
<line x1="215.70" y1="926.50" x2="211.20" y2="926.50" stroke="#000" stroke-width="1" shape-rendering="crispEdges"/>
<line x1="215.70" y1="928.50" x2="211.20" y2="928.50" stroke="#000" stroke-width="1" shape-rendering="crispEdges"/>
<line x1="215.70" y1="930.50" x2="211.20" y2="930.50" stroke="#000" stroke-width="1" shape-rendering="crispEdges"/>
<line x1="216.00" y1="931.50" x2="207.00" y2="931.50" stroke="#111" stroke-width="1" shape-rendering="crispEdges"/>
<line x1="215.70" y1="934.50" x2="211.20" y2="934.50" stroke="#000" stroke-width="1" shape-rendering="crispEdges"/>
<line x1="215.70" y1="935.50" x2="211.20" y2="935.50" stroke="#000" stroke-width="1" shape-rendering="crispEdges"/>
<line x1="215.70" y1="937.50" x2="211.20" y2="937.50" stroke="#000" stroke-width="1" shape-rendering="crispEdges"/>
<line x1="215.70" y1="939.50" x2="211.20" y2="939.50" stroke="#000" stroke-width="1" shape-rendering="crispEdges"/>
<line x1="215.70" y1="941.50" x2="211.20" y2="941.50" stroke="#000" stroke-width="1" shape-rendering="crispEdges"/>
<line x1="215.70" y1="943.50" x2="211.20" y2="943.50" stroke="#000" stroke-width="1" shape-rendering="crispEdges"/>
<line x1="215.70" y1="945.50" x2="211.20" y2="945.50" stroke="#000" stroke-width="1" shape-rendering="crispEdges"/>
<line x1="215.70" y1="946.50" x2="211.20" y2="946.50" stroke="#000" stroke-width="1" shape-rendering="crispEdges"/>
<line x1="215.70" y1="948.50" x2="211.20" y2="948.50" stroke="#000" stroke-width="1" shape-rendering="crispEdges"/>
<line x1="216.00" y1="950.50" x2="207.00" y2="950.50" stroke="#111" stroke-width="1" shape-rendering="crispEdges"/>
<line x1="216.50" y1="950.00" x2="216.50" y2="958.00" stroke="#111" stroke-width="1" shape-rendering="crispEdges"/>
<line x1="234.50" y1="950.00" x2="234.50" y2="954.00" stroke="#111" stroke-width="1" shape-rendering="crispEdges"/>
<line x1="253.50" y1="950.00" x2="253.50" y2="958.00" stroke="#111" stroke-width="1" shape-rendering="crispEdges"/>
<line x1="272.50" y1="950.00" x2="272.50" y2="954.00" stroke="#111" stroke-width="1" shape-rendering="crispEdges"/>
<line x1="291.50" y1="950.00" x2="291.50" y2="958.00" stroke="#111" stroke-width="1" shape-rendering="crispEdges"/>
<line x1="310.50" y1="950.00" x2="310.50" y2="954.00" stroke="#111" stroke-width="1" shape-rendering="crispEdges"/>
<line x1="328.50" y1="950.00" x2="328.50" y2="958.00" stroke="#111" stroke-width="1" shape-rendering="crispEdges"/>
<line x1="347.50" y1="950.00" x2="347.50" y2="954.00" stroke="#111" stroke-width="1" shape-rendering="crispEdges"/>
<line x1="366.50" y1="950.00" x2="366.50" y2="958.00" stroke="#111" stroke-width="1" shape-rendering="crispEdges"/>
<text x="201.30" y="807.40" text-anchor="end" font-size="12" >-40.</text>
<text x="201.30" y="825.79" text-anchor="end" font-size="12" >-30.</text>
<text x="201.30" y="844.17" text-anchor="end" font-size="12" >-20.</text>
<text x="201.30" y="862.56" text-anchor="end" font-size="12" >-10.</text>
<text x="201.30" y="880.95" text-anchor="end" font-size="12" >0.</text>
<text x="201.30" y="899.34" text-anchor="end" font-size="12" >10.</text>
<text x="201.30" y="917.73" text-anchor="end" font-size="12" >20.</text>
<text x="201.30" y="936.11" text-anchor="end" font-size="12" >30.</text>
<text x="201.30" y="954.50" text-anchor="end" font-size="12" >40.</text>
<text x="215.60" y="974.80" text-anchor="middle" font-size="12" >40.</text>
<text x="253.22" y="974.80" text-anchor="middle" font-size="12" >20.</text>
<text x="290.85" y="974.80" text-anchor="middle" font-size="12" >0.</text>
<text x="328.48" y="974.80" text-anchor="middle" font-size="12" >-20.</text>
<text x="366.10" y="974.80" text-anchor="middle" font-size="12" >-40.</text>
<text x="290.35" y="991.80" text-anchor="middle" font-size="11.6" textLength="38.5" lengthAdjust="spacing">KSM-X</text>
<text transform="translate(166.00,876.25) rotate(-90)" text-anchor="middle" font-size="11.6" textLength="38.5" lengthAdjust="spacing">KSM-Y</text>
<clipPath id="c1"><rect x="215.7" y="802.4" width="150.90000000000003" height="147.70000000000005"/></clipPath><g clip-path="url(#c1)">
<path d="M248.6,801.6C248.1,802.4 246.6,804.9 245.6,806.5C244.6,808.2 243.7,809.8 242.8,811.5C241.9,813.1 241.0,814.8 240.2,816.4C239.4,818.1 238.6,819.7 237.8,821.4C237.1,823.0 236.3,824.7 235.6,826.3C234.9,828.0 234.3,829.6 233.7,831.3C233.0,832.9 232.5,834.6 231.9,836.2C231.3,837.9 230.8,839.5 230.3,841.2C229.9,842.8 229.4,844.5 229.0,846.1C228.6,847.8 228.2,849.4 227.8,851.1C227.5,852.7 227.2,854.4 226.9,856.0C226.6,857.7 226.4,859.3 226.2,861.0C226.0,862.6 225.8,864.3 225.7,865.9C225.5,867.6 225.4,869.2 225.3,870.9C225.3,872.5 225.2,874.2 225.2,875.8C225.2,877.5 225.3,879.1 225.3,880.8C225.4,882.4 225.5,884.1 225.7,885.7C225.8,887.4 226.0,889.0 226.2,890.7C226.4,892.3 226.6,894.0 226.9,895.6C227.2,897.3 227.5,898.9 227.8,900.6C228.2,902.2 228.6,903.9 229.0,905.5C229.4,907.2 229.9,908.8 230.3,910.5C230.8,912.1 231.3,913.8 231.9,915.4C232.5,917.1 233.0,918.7 233.7,920.4C234.3,922.0 234.9,923.7 235.6,925.3C236.3,927.0 237.1,928.6 237.8,930.3C238.6,931.9 239.4,933.6 240.2,935.2C241.0,936.9 241.9,938.5 242.8,940.2C243.7,941.8 244.6,943.5 245.6,945.1C246.6,946.8 248.1,949.3 248.6,950.1" fill="none" stroke="#0000ff" stroke-width="1.1" stroke-dasharray="2.2 1.6"/>
<path d="M284.1,801.6C281.7,803.8 274.2,809.6 269.3,814.8C264.3,820.0 258.4,826.9 254.4,832.9C250.5,839.0 247.4,844.5 245.4,851.1C243.3,857.7 242.1,864.8 242.1,872.5C242.1,880.2 243.0,889.3 245.4,897.3C247.7,905.3 252.1,913.8 256.1,920.4C260.1,927.0 264.6,931.8 269.3,936.9C274.0,942.0 281.7,948.6 284.1,950.9" fill="none" stroke="#7a3b0a" stroke-width="1.1" stroke-dasharray="2.2 1.6"/>
<ellipse cx="291.7" cy="877.7" rx="34.9" ry="37.8" fill="none" stroke="#000" stroke-width="1.1"/>
<path d="M249.5,818.1C249.1,819.3 247.7,823.0 247.0,825.5C246.3,828.0 245.6,830.5 245.4,832.9C245.2,835.4 245.4,838.2 245.7,840.4C246.0,842.6 246.1,843.1 247.0,846.1C247.9,849.2 249.4,854.7 251.1,858.5C252.9,862.4 255.3,866.1 257.7,869.2C260.2,872.4 263.2,875.0 266.0,877.5C268.7,880.0 271.5,882.3 274.2,884.1C277.0,885.9 279.7,887.3 282.5,888.5C285.2,889.8 287.4,890.7 290.7,891.5C294.0,892.3 299.1,893.3 302.3,893.5C305.5,893.7 307.5,893.2 309.7,892.7C311.9,892.1 314.5,890.6 315.5,890.2" fill="none" stroke="#000" stroke-width="1.1"/>
<line x1="247.0" y1="848.1" x2="252.0" y2="858.2" stroke="#0000ff" stroke-width="4.3" stroke-linecap="round"/>
<path d="M242.2,843.0L250.2,851.0M242.2,851.0L250.2,843.0" stroke="#ff0000" stroke-width="1.1" fill="none"/>
<circle cx="270.3" cy="907.5" r="2.4" fill="#ff0000"/>
<path d="M289.4,875.2h3.2q1.4,0.2 1.2,1.6q-0.4,1.8 -2.2,1.8q-2,-0.2 -2.2,-3.4z" fill="#fff" stroke="#000" stroke-width="0.8"/>
</g>
<rect x="509.85" y="802.4" width="150.94999999999993" height="147.70000000000005" fill="#fff" stroke="#111" stroke-width="1"/>
<line x1="510.00" y1="803.50" x2="502.00" y2="803.50" stroke="#111" stroke-width="1" shape-rendering="crispEdges"/>
<line x1="509.85" y1="805.50" x2="505.35" y2="805.50" stroke="#000" stroke-width="1" shape-rendering="crispEdges"/>
<line x1="509.85" y1="807.50" x2="505.35" y2="807.50" stroke="#000" stroke-width="1" shape-rendering="crispEdges"/>
<line x1="509.85" y1="809.50" x2="505.35" y2="809.50" stroke="#000" stroke-width="1" shape-rendering="crispEdges"/>
<line x1="509.85" y1="810.50" x2="505.35" y2="810.50" stroke="#000" stroke-width="1" shape-rendering="crispEdges"/>
<line x1="509.85" y1="812.50" x2="505.35" y2="812.50" stroke="#000" stroke-width="1" shape-rendering="crispEdges"/>
<line x1="509.85" y1="814.50" x2="505.35" y2="814.50" stroke="#000" stroke-width="1" shape-rendering="crispEdges"/>
<line x1="509.85" y1="816.50" x2="505.35" y2="816.50" stroke="#000" stroke-width="1" shape-rendering="crispEdges"/>
<line x1="509.85" y1="818.50" x2="505.35" y2="818.50" stroke="#000" stroke-width="1" shape-rendering="crispEdges"/>
<line x1="509.85" y1="820.50" x2="505.35" y2="820.50" stroke="#000" stroke-width="1" shape-rendering="crispEdges"/>
<line x1="510.00" y1="821.50" x2="502.00" y2="821.50" stroke="#111" stroke-width="1" shape-rendering="crispEdges"/>
<line x1="509.85" y1="823.50" x2="505.35" y2="823.50" stroke="#000" stroke-width="1" shape-rendering="crispEdges"/>
<line x1="509.85" y1="825.50" x2="505.35" y2="825.50" stroke="#000" stroke-width="1" shape-rendering="crispEdges"/>
<line x1="509.85" y1="827.50" x2="505.35" y2="827.50" stroke="#000" stroke-width="1" shape-rendering="crispEdges"/>
<line x1="509.85" y1="829.50" x2="505.35" y2="829.50" stroke="#000" stroke-width="1" shape-rendering="crispEdges"/>
<line x1="509.85" y1="831.50" x2="505.35" y2="831.50" stroke="#000" stroke-width="1" shape-rendering="crispEdges"/>
<line x1="509.85" y1="832.50" x2="505.35" y2="832.50" stroke="#000" stroke-width="1" shape-rendering="crispEdges"/>
<line x1="509.85" y1="834.50" x2="505.35" y2="834.50" stroke="#000" stroke-width="1" shape-rendering="crispEdges"/>
<line x1="509.85" y1="836.50" x2="505.35" y2="836.50" stroke="#000" stroke-width="1" shape-rendering="crispEdges"/>
<line x1="509.85" y1="838.50" x2="505.35" y2="838.50" stroke="#000" stroke-width="1" shape-rendering="crispEdges"/>
<line x1="510.00" y1="839.50" x2="502.00" y2="839.50" stroke="#111" stroke-width="1" shape-rendering="crispEdges"/>
<line x1="509.85" y1="842.50" x2="505.35" y2="842.50" stroke="#000" stroke-width="1" shape-rendering="crispEdges"/>
<line x1="509.85" y1="843.50" x2="505.35" y2="843.50" stroke="#000" stroke-width="1" shape-rendering="crispEdges"/>
<line x1="509.85" y1="845.50" x2="505.35" y2="845.50" stroke="#000" stroke-width="1" shape-rendering="crispEdges"/>
<line x1="509.85" y1="847.50" x2="505.35" y2="847.50" stroke="#000" stroke-width="1" shape-rendering="crispEdges"/>
<line x1="509.85" y1="849.50" x2="505.35" y2="849.50" stroke="#000" stroke-width="1" shape-rendering="crispEdges"/>
<line x1="509.85" y1="851.50" x2="505.35" y2="851.50" stroke="#000" stroke-width="1" shape-rendering="crispEdges"/>
<line x1="509.85" y1="853.50" x2="505.35" y2="853.50" stroke="#000" stroke-width="1" shape-rendering="crispEdges"/>
<line x1="509.85" y1="854.50" x2="505.35" y2="854.50" stroke="#000" stroke-width="1" shape-rendering="crispEdges"/>
<line x1="509.85" y1="856.50" x2="505.35" y2="856.50" stroke="#000" stroke-width="1" shape-rendering="crispEdges"/>
<line x1="510.00" y1="858.50" x2="502.00" y2="858.50" stroke="#111" stroke-width="1" shape-rendering="crispEdges"/>
<line x1="509.85" y1="860.50" x2="505.35" y2="860.50" stroke="#000" stroke-width="1" shape-rendering="crispEdges"/>
<line x1="509.85" y1="862.50" x2="505.35" y2="862.50" stroke="#000" stroke-width="1" shape-rendering="crispEdges"/>
<line x1="509.85" y1="864.50" x2="505.35" y2="864.50" stroke="#000" stroke-width="1" shape-rendering="crispEdges"/>
<line x1="509.85" y1="866.50" x2="505.35" y2="866.50" stroke="#000" stroke-width="1" shape-rendering="crispEdges"/>
<line x1="509.85" y1="867.50" x2="505.35" y2="867.50" stroke="#000" stroke-width="1" shape-rendering="crispEdges"/>
<line x1="509.85" y1="869.50" x2="505.35" y2="869.50" stroke="#000" stroke-width="1" shape-rendering="crispEdges"/>
<line x1="509.85" y1="871.50" x2="505.35" y2="871.50" stroke="#000" stroke-width="1" shape-rendering="crispEdges"/>
<line x1="509.85" y1="873.50" x2="505.35" y2="873.50" stroke="#000" stroke-width="1" shape-rendering="crispEdges"/>
<line x1="509.85" y1="875.50" x2="505.35" y2="875.50" stroke="#000" stroke-width="1" shape-rendering="crispEdges"/>
<line x1="510.00" y1="876.50" x2="502.00" y2="876.50" stroke="#111" stroke-width="1" shape-rendering="crispEdges"/>
<line x1="509.85" y1="878.50" x2="505.35" y2="878.50" stroke="#000" stroke-width="1" shape-rendering="crispEdges"/>
<line x1="509.85" y1="880.50" x2="505.35" y2="880.50" stroke="#000" stroke-width="1" shape-rendering="crispEdges"/>
<line x1="509.85" y1="882.50" x2="505.35" y2="882.50" stroke="#000" stroke-width="1" shape-rendering="crispEdges"/>
<line x1="509.85" y1="884.50" x2="505.35" y2="884.50" stroke="#000" stroke-width="1" shape-rendering="crispEdges"/>
<line x1="509.85" y1="886.50" x2="505.35" y2="886.50" stroke="#000" stroke-width="1" shape-rendering="crispEdges"/>
<line x1="509.85" y1="888.50" x2="505.35" y2="888.50" stroke="#000" stroke-width="1" shape-rendering="crispEdges"/>
<line x1="509.85" y1="889.50" x2="505.35" y2="889.50" stroke="#000" stroke-width="1" shape-rendering="crispEdges"/>
<line x1="509.85" y1="891.50" x2="505.35" y2="891.50" stroke="#000" stroke-width="1" shape-rendering="crispEdges"/>
<line x1="509.85" y1="893.50" x2="505.35" y2="893.50" stroke="#000" stroke-width="1" shape-rendering="crispEdges"/>
<line x1="510.00" y1="894.50" x2="502.00" y2="894.50" stroke="#111" stroke-width="1" shape-rendering="crispEdges"/>
<line x1="509.85" y1="897.50" x2="505.35" y2="897.50" stroke="#000" stroke-width="1" shape-rendering="crispEdges"/>
<line x1="509.85" y1="899.50" x2="505.35" y2="899.50" stroke="#000" stroke-width="1" shape-rendering="crispEdges"/>
<line x1="509.85" y1="900.50" x2="505.35" y2="900.50" stroke="#000" stroke-width="1" shape-rendering="crispEdges"/>
<line x1="509.85" y1="902.50" x2="505.35" y2="902.50" stroke="#000" stroke-width="1" shape-rendering="crispEdges"/>
<line x1="509.85" y1="904.50" x2="505.35" y2="904.50" stroke="#000" stroke-width="1" shape-rendering="crispEdges"/>
<line x1="509.85" y1="906.50" x2="505.35" y2="906.50" stroke="#000" stroke-width="1" shape-rendering="crispEdges"/>
<line x1="509.85" y1="908.50" x2="505.35" y2="908.50" stroke="#000" stroke-width="1" shape-rendering="crispEdges"/>
<line x1="509.85" y1="910.50" x2="505.35" y2="910.50" stroke="#000" stroke-width="1" shape-rendering="crispEdges"/>
<line x1="509.85" y1="911.50" x2="505.35" y2="911.50" stroke="#000" stroke-width="1" shape-rendering="crispEdges"/>
<line x1="510.00" y1="913.50" x2="502.00" y2="913.50" stroke="#111" stroke-width="1" shape-rendering="crispEdges"/>
<line x1="509.85" y1="915.50" x2="505.35" y2="915.50" stroke="#000" stroke-width="1" shape-rendering="crispEdges"/>
<line x1="509.85" y1="917.50" x2="505.35" y2="917.50" stroke="#000" stroke-width="1" shape-rendering="crispEdges"/>
<line x1="509.85" y1="919.50" x2="505.35" y2="919.50" stroke="#000" stroke-width="1" shape-rendering="crispEdges"/>
<line x1="509.85" y1="921.50" x2="505.35" y2="921.50" stroke="#000" stroke-width="1" shape-rendering="crispEdges"/>
<line x1="509.85" y1="923.50" x2="505.35" y2="923.50" stroke="#000" stroke-width="1" shape-rendering="crispEdges"/>
<line x1="509.85" y1="924.50" x2="505.35" y2="924.50" stroke="#000" stroke-width="1" shape-rendering="crispEdges"/>
<line x1="509.85" y1="926.50" x2="505.35" y2="926.50" stroke="#000" stroke-width="1" shape-rendering="crispEdges"/>
<line x1="509.85" y1="928.50" x2="505.35" y2="928.50" stroke="#000" stroke-width="1" shape-rendering="crispEdges"/>
<line x1="509.85" y1="930.50" x2="505.35" y2="930.50" stroke="#000" stroke-width="1" shape-rendering="crispEdges"/>
<line x1="510.00" y1="931.50" x2="502.00" y2="931.50" stroke="#111" stroke-width="1" shape-rendering="crispEdges"/>
<line x1="509.85" y1="934.50" x2="505.35" y2="934.50" stroke="#000" stroke-width="1" shape-rendering="crispEdges"/>
<line x1="509.85" y1="935.50" x2="505.35" y2="935.50" stroke="#000" stroke-width="1" shape-rendering="crispEdges"/>
<line x1="509.85" y1="937.50" x2="505.35" y2="937.50" stroke="#000" stroke-width="1" shape-rendering="crispEdges"/>
<line x1="509.85" y1="939.50" x2="505.35" y2="939.50" stroke="#000" stroke-width="1" shape-rendering="crispEdges"/>
<line x1="509.85" y1="941.50" x2="505.35" y2="941.50" stroke="#000" stroke-width="1" shape-rendering="crispEdges"/>
<line x1="509.85" y1="943.50" x2="505.35" y2="943.50" stroke="#000" stroke-width="1" shape-rendering="crispEdges"/>
<line x1="509.85" y1="945.50" x2="505.35" y2="945.50" stroke="#000" stroke-width="1" shape-rendering="crispEdges"/>
<line x1="509.85" y1="946.50" x2="505.35" y2="946.50" stroke="#000" stroke-width="1" shape-rendering="crispEdges"/>
<line x1="509.85" y1="948.50" x2="505.35" y2="948.50" stroke="#000" stroke-width="1" shape-rendering="crispEdges"/>
<line x1="510.00" y1="950.50" x2="502.00" y2="950.50" stroke="#111" stroke-width="1" shape-rendering="crispEdges"/>
<line x1="510.50" y1="950.00" x2="510.50" y2="958.00" stroke="#111" stroke-width="1" shape-rendering="crispEdges"/>
<line x1="529.50" y1="950.00" x2="529.50" y2="954.00" stroke="#111" stroke-width="1" shape-rendering="crispEdges"/>
<line x1="547.50" y1="950.00" x2="547.50" y2="958.00" stroke="#111" stroke-width="1" shape-rendering="crispEdges"/>
<line x1="566.50" y1="950.00" x2="566.50" y2="954.00" stroke="#111" stroke-width="1" shape-rendering="crispEdges"/>
<line x1="585.50" y1="950.00" x2="585.50" y2="958.00" stroke="#111" stroke-width="1" shape-rendering="crispEdges"/>
<line x1="604.50" y1="950.00" x2="604.50" y2="954.00" stroke="#111" stroke-width="1" shape-rendering="crispEdges"/>
<line x1="623.50" y1="950.00" x2="623.50" y2="958.00" stroke="#111" stroke-width="1" shape-rendering="crispEdges"/>
<line x1="641.50" y1="950.00" x2="641.50" y2="954.00" stroke="#111" stroke-width="1" shape-rendering="crispEdges"/>
<line x1="660.50" y1="950.00" x2="660.50" y2="958.00" stroke="#111" stroke-width="1" shape-rendering="crispEdges"/>
<text x="495.50" y="807.40" text-anchor="end" font-size="12" >40.</text>
<text x="495.50" y="825.79" text-anchor="end" font-size="12" >30.</text>
<text x="495.50" y="844.17" text-anchor="end" font-size="12" >20.</text>
<text x="495.50" y="862.56" text-anchor="end" font-size="12" >10.</text>
<text x="495.50" y="880.95" text-anchor="end" font-size="12" >0.</text>
<text x="495.50" y="899.34" text-anchor="end" font-size="12" >-10.</text>
<text x="495.50" y="917.73" text-anchor="end" font-size="12" >-20.</text>
<text x="495.50" y="936.11" text-anchor="end" font-size="12" >-30.</text>
<text x="495.50" y="954.50" text-anchor="end" font-size="12" >-40.</text>
<text x="509.75" y="974.80" text-anchor="middle" font-size="12" >40.</text>
<text x="547.39" y="974.80" text-anchor="middle" font-size="12" >20.</text>
<text x="585.02" y="974.80" text-anchor="middle" font-size="12" >0.</text>
<text x="622.66" y="974.80" text-anchor="middle" font-size="12" >-20.</text>
<text x="660.30" y="974.80" text-anchor="middle" font-size="12" >-40.</text>
<text x="584.53" y="991.80" text-anchor="middle" font-size="11.6" textLength="38.5" lengthAdjust="spacing">KSM-X</text>
<text transform="translate(460.50,876.25) rotate(-90)" text-anchor="middle" font-size="11.6" textLength="38.5" lengthAdjust="spacing">KSM-Z</text>
<clipPath id="c2"><rect x="509.85" y="802.4" width="150.94999999999993" height="147.70000000000005"/></clipPath><g clip-path="url(#c2)">
<path d="M542.4,801.6C541.9,802.4 540.4,804.9 539.4,806.5C538.4,808.2 537.5,809.8 536.6,811.5C535.7,813.1 534.8,814.8 534.0,816.4C533.1,818.1 532.3,819.7 531.6,821.4C530.8,823.0 530.1,824.7 529.4,826.3C528.7,828.0 528.1,829.6 527.4,831.3C526.8,832.9 526.2,834.6 525.7,836.2C525.2,837.9 524.6,839.5 524.2,841.2C523.7,842.8 523.3,844.5 522.9,846.1C522.4,847.8 522.1,849.4 521.7,851.1C521.4,852.7 521.1,854.4 520.9,856.0C520.6,857.7 520.4,859.3 520.2,861.0C520.0,862.6 519.8,864.3 519.7,865.9C519.6,867.6 519.5,869.2 519.5,870.9C519.4,872.5 519.4,874.2 519.4,875.8C519.5,877.5 519.5,879.1 519.6,880.8C519.7,882.4 519.8,884.1 520.0,885.7C520.2,887.4 520.4,889.0 520.6,890.7C520.8,892.3 521.1,894.0 521.4,895.6C521.7,897.3 522.1,898.9 522.5,900.6C522.8,902.2 523.3,903.9 523.7,905.5C524.2,907.2 524.6,908.8 525.2,910.5C525.7,912.1 526.2,913.8 526.8,915.4C527.4,917.1 528.1,918.7 528.7,920.4C529.4,922.0 530.1,923.7 530.8,925.3C531.6,927.0 532.3,928.6 533.2,930.3C534.0,931.9 534.8,933.6 535.7,935.2C536.6,936.9 537.5,938.5 538.4,940.2C539.4,941.8 540.4,943.5 541.4,945.1C542.4,946.8 544.0,949.3 544.6,950.1" fill="none" stroke="#0000ff" stroke-width="1.1" stroke-dasharray="2.2 1.6"/>
<path d="M578.3,801.6C575.8,804.1 568.0,811.2 563.5,816.4C558.9,821.7 554.4,828.0 551.1,832.9C547.8,837.9 545.6,842.0 543.7,846.1C541.7,850.3 540.8,853.0 539.5,857.7C538.3,862.4 536.6,869.0 536.2,874.2C535.9,879.4 536.9,884.6 537.6,889.0C538.3,893.4 538.1,895.4 540.4,900.6C542.6,905.8 547.2,914.5 551.1,920.4C554.9,926.3 559.0,931.0 563.5,936.1C568.0,941.2 575.6,948.4 578.0,950.9" fill="none" stroke="#7a3b0a" stroke-width="1.1" stroke-dasharray="2.2 1.6"/>
<line x1="550.3" y1="891.5" x2="620.7" y2="862.3" stroke="#000" stroke-width="1.5"/>
<path d="M544.5,842.0C543.9,843.3 542.0,847.1 541.2,849.4C540.4,851.8 540.2,853.3 539.9,856.0C539.6,858.8 539.3,863.2 539.5,865.9C539.8,868.7 540.1,869.8 541.2,872.5C542.3,875.3 543.7,879.6 546.1,882.4C548.6,885.3 552.5,888.1 556.0,889.9C559.6,891.7 564.0,892.6 567.6,893.2C571.2,893.7 574.2,893.6 577.5,893.2C580.8,892.8 584.1,891.9 587.4,890.7C590.7,889.5 594.5,887.3 597.3,885.7C600.0,884.2 601.8,883.1 603.9,881.6C606.0,880.2 608.7,877.8 609.7,877.0" fill="none" stroke="#000" stroke-width="1.2"/>
<line x1="541.2" y1="872.9" x2="545.5" y2="880.5" stroke="#0000ff" stroke-width="4.3" stroke-linecap="round"/>
<path d="M536.4,867.7L544.4,875.7M536.4,875.7L544.4,867.7" stroke="#ff0000" stroke-width="1.1" fill="none"/>
<circle cx="564.3" cy="885.7" r="2.4" fill="#ff0000"/>
<path d="M583.2,875.2h3.2q1.4,0.2 1.2,1.6q-0.4,1.8 -2.2,1.8q-2,-0.2 -2.2,-3.4z" fill="#fff" stroke="#000" stroke-width="0.8"/>
</g>
<rect x="803.7" y="802.4" width="151.0" height="147.70000000000005" fill="#fff" stroke="#111" stroke-width="1"/>
<line x1="804.00" y1="803.50" x2="795.00" y2="803.50" stroke="#111" stroke-width="1" shape-rendering="crispEdges"/>
<line x1="803.70" y1="805.50" x2="799.20" y2="805.50" stroke="#000" stroke-width="1" shape-rendering="crispEdges"/>
<line x1="803.70" y1="807.50" x2="799.20" y2="807.50" stroke="#000" stroke-width="1" shape-rendering="crispEdges"/>
<line x1="803.70" y1="809.50" x2="799.20" y2="809.50" stroke="#000" stroke-width="1" shape-rendering="crispEdges"/>
<line x1="803.70" y1="810.50" x2="799.20" y2="810.50" stroke="#000" stroke-width="1" shape-rendering="crispEdges"/>
<line x1="803.70" y1="812.50" x2="799.20" y2="812.50" stroke="#000" stroke-width="1" shape-rendering="crispEdges"/>
<line x1="803.70" y1="814.50" x2="799.20" y2="814.50" stroke="#000" stroke-width="1" shape-rendering="crispEdges"/>
<line x1="803.70" y1="816.50" x2="799.20" y2="816.50" stroke="#000" stroke-width="1" shape-rendering="crispEdges"/>
<line x1="803.70" y1="818.50" x2="799.20" y2="818.50" stroke="#000" stroke-width="1" shape-rendering="crispEdges"/>
<line x1="803.70" y1="820.50" x2="799.20" y2="820.50" stroke="#000" stroke-width="1" shape-rendering="crispEdges"/>
<line x1="804.00" y1="821.50" x2="795.00" y2="821.50" stroke="#111" stroke-width="1" shape-rendering="crispEdges"/>
<line x1="803.70" y1="823.50" x2="799.20" y2="823.50" stroke="#000" stroke-width="1" shape-rendering="crispEdges"/>
<line x1="803.70" y1="825.50" x2="799.20" y2="825.50" stroke="#000" stroke-width="1" shape-rendering="crispEdges"/>
<line x1="803.70" y1="827.50" x2="799.20" y2="827.50" stroke="#000" stroke-width="1" shape-rendering="crispEdges"/>
<line x1="803.70" y1="829.50" x2="799.20" y2="829.50" stroke="#000" stroke-width="1" shape-rendering="crispEdges"/>
<line x1="803.70" y1="831.50" x2="799.20" y2="831.50" stroke="#000" stroke-width="1" shape-rendering="crispEdges"/>
<line x1="803.70" y1="832.50" x2="799.20" y2="832.50" stroke="#000" stroke-width="1" shape-rendering="crispEdges"/>
<line x1="803.70" y1="834.50" x2="799.20" y2="834.50" stroke="#000" stroke-width="1" shape-rendering="crispEdges"/>
<line x1="803.70" y1="836.50" x2="799.20" y2="836.50" stroke="#000" stroke-width="1" shape-rendering="crispEdges"/>
<line x1="803.70" y1="838.50" x2="799.20" y2="838.50" stroke="#000" stroke-width="1" shape-rendering="crispEdges"/>
<line x1="804.00" y1="839.50" x2="795.00" y2="839.50" stroke="#111" stroke-width="1" shape-rendering="crispEdges"/>
<line x1="803.70" y1="842.50" x2="799.20" y2="842.50" stroke="#000" stroke-width="1" shape-rendering="crispEdges"/>
<line x1="803.70" y1="843.50" x2="799.20" y2="843.50" stroke="#000" stroke-width="1" shape-rendering="crispEdges"/>
<line x1="803.70" y1="845.50" x2="799.20" y2="845.50" stroke="#000" stroke-width="1" shape-rendering="crispEdges"/>
<line x1="803.70" y1="847.50" x2="799.20" y2="847.50" stroke="#000" stroke-width="1" shape-rendering="crispEdges"/>
<line x1="803.70" y1="849.50" x2="799.20" y2="849.50" stroke="#000" stroke-width="1" shape-rendering="crispEdges"/>
<line x1="803.70" y1="851.50" x2="799.20" y2="851.50" stroke="#000" stroke-width="1" shape-rendering="crispEdges"/>
<line x1="803.70" y1="853.50" x2="799.20" y2="853.50" stroke="#000" stroke-width="1" shape-rendering="crispEdges"/>
<line x1="803.70" y1="854.50" x2="799.20" y2="854.50" stroke="#000" stroke-width="1" shape-rendering="crispEdges"/>
<line x1="803.70" y1="856.50" x2="799.20" y2="856.50" stroke="#000" stroke-width="1" shape-rendering="crispEdges"/>
<line x1="804.00" y1="858.50" x2="795.00" y2="858.50" stroke="#111" stroke-width="1" shape-rendering="crispEdges"/>
<line x1="803.70" y1="860.50" x2="799.20" y2="860.50" stroke="#000" stroke-width="1" shape-rendering="crispEdges"/>
<line x1="803.70" y1="862.50" x2="799.20" y2="862.50" stroke="#000" stroke-width="1" shape-rendering="crispEdges"/>
<line x1="803.70" y1="864.50" x2="799.20" y2="864.50" stroke="#000" stroke-width="1" shape-rendering="crispEdges"/>
<line x1="803.70" y1="866.50" x2="799.20" y2="866.50" stroke="#000" stroke-width="1" shape-rendering="crispEdges"/>
<line x1="803.70" y1="867.50" x2="799.20" y2="867.50" stroke="#000" stroke-width="1" shape-rendering="crispEdges"/>
<line x1="803.70" y1="869.50" x2="799.20" y2="869.50" stroke="#000" stroke-width="1" shape-rendering="crispEdges"/>
<line x1="803.70" y1="871.50" x2="799.20" y2="871.50" stroke="#000" stroke-width="1" shape-rendering="crispEdges"/>
<line x1="803.70" y1="873.50" x2="799.20" y2="873.50" stroke="#000" stroke-width="1" shape-rendering="crispEdges"/>
<line x1="803.70" y1="875.50" x2="799.20" y2="875.50" stroke="#000" stroke-width="1" shape-rendering="crispEdges"/>
<line x1="804.00" y1="876.50" x2="795.00" y2="876.50" stroke="#111" stroke-width="1" shape-rendering="crispEdges"/>
<line x1="803.70" y1="878.50" x2="799.20" y2="878.50" stroke="#000" stroke-width="1" shape-rendering="crispEdges"/>
<line x1="803.70" y1="880.50" x2="799.20" y2="880.50" stroke="#000" stroke-width="1" shape-rendering="crispEdges"/>
<line x1="803.70" y1="882.50" x2="799.20" y2="882.50" stroke="#000" stroke-width="1" shape-rendering="crispEdges"/>
<line x1="803.70" y1="884.50" x2="799.20" y2="884.50" stroke="#000" stroke-width="1" shape-rendering="crispEdges"/>
<line x1="803.70" y1="886.50" x2="799.20" y2="886.50" stroke="#000" stroke-width="1" shape-rendering="crispEdges"/>
<line x1="803.70" y1="888.50" x2="799.20" y2="888.50" stroke="#000" stroke-width="1" shape-rendering="crispEdges"/>
<line x1="803.70" y1="889.50" x2="799.20" y2="889.50" stroke="#000" stroke-width="1" shape-rendering="crispEdges"/>
<line x1="803.70" y1="891.50" x2="799.20" y2="891.50" stroke="#000" stroke-width="1" shape-rendering="crispEdges"/>
<line x1="803.70" y1="893.50" x2="799.20" y2="893.50" stroke="#000" stroke-width="1" shape-rendering="crispEdges"/>
<line x1="804.00" y1="894.50" x2="795.00" y2="894.50" stroke="#111" stroke-width="1" shape-rendering="crispEdges"/>
<line x1="803.70" y1="897.50" x2="799.20" y2="897.50" stroke="#000" stroke-width="1" shape-rendering="crispEdges"/>
<line x1="803.70" y1="899.50" x2="799.20" y2="899.50" stroke="#000" stroke-width="1" shape-rendering="crispEdges"/>
<line x1="803.70" y1="900.50" x2="799.20" y2="900.50" stroke="#000" stroke-width="1" shape-rendering="crispEdges"/>
<line x1="803.70" y1="902.50" x2="799.20" y2="902.50" stroke="#000" stroke-width="1" shape-rendering="crispEdges"/>
<line x1="803.70" y1="904.50" x2="799.20" y2="904.50" stroke="#000" stroke-width="1" shape-rendering="crispEdges"/>
<line x1="803.70" y1="906.50" x2="799.20" y2="906.50" stroke="#000" stroke-width="1" shape-rendering="crispEdges"/>
<line x1="803.70" y1="908.50" x2="799.20" y2="908.50" stroke="#000" stroke-width="1" shape-rendering="crispEdges"/>
<line x1="803.70" y1="910.50" x2="799.20" y2="910.50" stroke="#000" stroke-width="1" shape-rendering="crispEdges"/>
<line x1="803.70" y1="911.50" x2="799.20" y2="911.50" stroke="#000" stroke-width="1" shape-rendering="crispEdges"/>
<line x1="804.00" y1="913.50" x2="795.00" y2="913.50" stroke="#111" stroke-width="1" shape-rendering="crispEdges"/>
<line x1="803.70" y1="915.50" x2="799.20" y2="915.50" stroke="#000" stroke-width="1" shape-rendering="crispEdges"/>
<line x1="803.70" y1="917.50" x2="799.20" y2="917.50" stroke="#000" stroke-width="1" shape-rendering="crispEdges"/>
<line x1="803.70" y1="919.50" x2="799.20" y2="919.50" stroke="#000" stroke-width="1" shape-rendering="crispEdges"/>
<line x1="803.70" y1="921.50" x2="799.20" y2="921.50" stroke="#000" stroke-width="1" shape-rendering="crispEdges"/>
<line x1="803.70" y1="923.50" x2="799.20" y2="923.50" stroke="#000" stroke-width="1" shape-rendering="crispEdges"/>
<line x1="803.70" y1="924.50" x2="799.20" y2="924.50" stroke="#000" stroke-width="1" shape-rendering="crispEdges"/>
<line x1="803.70" y1="926.50" x2="799.20" y2="926.50" stroke="#000" stroke-width="1" shape-rendering="crispEdges"/>
<line x1="803.70" y1="928.50" x2="799.20" y2="928.50" stroke="#000" stroke-width="1" shape-rendering="crispEdges"/>
<line x1="803.70" y1="930.50" x2="799.20" y2="930.50" stroke="#000" stroke-width="1" shape-rendering="crispEdges"/>
<line x1="804.00" y1="931.50" x2="795.00" y2="931.50" stroke="#111" stroke-width="1" shape-rendering="crispEdges"/>
<line x1="803.70" y1="934.50" x2="799.20" y2="934.50" stroke="#000" stroke-width="1" shape-rendering="crispEdges"/>
<line x1="803.70" y1="935.50" x2="799.20" y2="935.50" stroke="#000" stroke-width="1" shape-rendering="crispEdges"/>
<line x1="803.70" y1="937.50" x2="799.20" y2="937.50" stroke="#000" stroke-width="1" shape-rendering="crispEdges"/>
<line x1="803.70" y1="939.50" x2="799.20" y2="939.50" stroke="#000" stroke-width="1" shape-rendering="crispEdges"/>
<line x1="803.70" y1="941.50" x2="799.20" y2="941.50" stroke="#000" stroke-width="1" shape-rendering="crispEdges"/>
<line x1="803.70" y1="943.50" x2="799.20" y2="943.50" stroke="#000" stroke-width="1" shape-rendering="crispEdges"/>
<line x1="803.70" y1="945.50" x2="799.20" y2="945.50" stroke="#000" stroke-width="1" shape-rendering="crispEdges"/>
<line x1="803.70" y1="946.50" x2="799.20" y2="946.50" stroke="#000" stroke-width="1" shape-rendering="crispEdges"/>
<line x1="803.70" y1="948.50" x2="799.20" y2="948.50" stroke="#000" stroke-width="1" shape-rendering="crispEdges"/>
<line x1="804.00" y1="950.50" x2="795.00" y2="950.50" stroke="#111" stroke-width="1" shape-rendering="crispEdges"/>
<line x1="804.50" y1="950.00" x2="804.50" y2="958.00" stroke="#111" stroke-width="1" shape-rendering="crispEdges"/>
<line x1="822.50" y1="950.00" x2="822.50" y2="954.00" stroke="#111" stroke-width="1" shape-rendering="crispEdges"/>
<line x1="841.50" y1="950.00" x2="841.50" y2="958.00" stroke="#111" stroke-width="1" shape-rendering="crispEdges"/>
<line x1="860.50" y1="950.00" x2="860.50" y2="954.00" stroke="#111" stroke-width="1" shape-rendering="crispEdges"/>
<line x1="879.50" y1="950.00" x2="879.50" y2="958.00" stroke="#111" stroke-width="1" shape-rendering="crispEdges"/>
<line x1="898.50" y1="950.00" x2="898.50" y2="954.00" stroke="#111" stroke-width="1" shape-rendering="crispEdges"/>
<line x1="917.50" y1="950.00" x2="917.50" y2="958.00" stroke="#111" stroke-width="1" shape-rendering="crispEdges"/>
<line x1="935.50" y1="950.00" x2="935.50" y2="954.00" stroke="#111" stroke-width="1" shape-rendering="crispEdges"/>
<line x1="954.50" y1="950.00" x2="954.50" y2="958.00" stroke="#111" stroke-width="1" shape-rendering="crispEdges"/>
<text x="790.00" y="807.40" text-anchor="end" font-size="12" >40.</text>
<text x="790.00" y="825.79" text-anchor="end" font-size="12" >30.</text>
<text x="790.00" y="844.17" text-anchor="end" font-size="12" >20.</text>
<text x="790.00" y="862.56" text-anchor="end" font-size="12" >10.</text>
<text x="790.00" y="880.95" text-anchor="end" font-size="12" >0.</text>
<text x="790.00" y="899.34" text-anchor="end" font-size="12" >-10.</text>
<text x="790.00" y="917.73" text-anchor="end" font-size="12" >-20.</text>
<text x="790.00" y="936.11" text-anchor="end" font-size="12" >-30.</text>
<text x="790.00" y="954.50" text-anchor="end" font-size="12" >-40.</text>
<text x="803.60" y="974.80" text-anchor="middle" font-size="12" >-40.</text>
<text x="841.25" y="974.80" text-anchor="middle" font-size="12" >-20.</text>
<text x="878.90" y="974.80" text-anchor="middle" font-size="12" >0.</text>
<text x="916.55" y="974.80" text-anchor="middle" font-size="12" >20.</text>
<text x="954.20" y="974.80" text-anchor="middle" font-size="12" >40.</text>
<text x="878.40" y="991.80" text-anchor="middle" font-size="11.6" textLength="38.5" lengthAdjust="spacing">KSM-Y</text>
<text transform="translate(754.50,876.25) rotate(-90)" text-anchor="middle" font-size="11.6" textLength="38.5" lengthAdjust="spacing">KSM-Z</text>
<clipPath id="c3"><rect x="802.7" y="801.4" width="153.0" height="149.70000000000005"/></clipPath><g clip-path="url(#c3)">
<ellipse cx="879.4" cy="876.3" rx="74.7" ry="73.1" fill="none" stroke="#0000ff" stroke-width="1.1" stroke-dasharray="2.2 1.6"/>
<ellipse cx="879.1" cy="876.3" rx="29.7" ry="29.0" fill="none" stroke="#7a3b0a" stroke-width="1.1" stroke-dasharray="2.2 1.6"/>
<ellipse cx="880.4" cy="877.0" rx="38.1" ry="14.5" fill="none" stroke="#000" stroke-width="1.2" transform="rotate(2 880.4 877.0)"/>
<path d="M820.2,843.2C822.0,845.3 828.0,852.6 831.2,856.0C834.5,859.5 836.7,861.4 839.5,864.0C842.2,866.5 844.2,868.4 847.7,871.2C851.3,874.0 856.8,878.0 860.9,880.8C865.1,883.6 868.9,886.3 872.5,888.2C876.1,890.1 879.4,891.2 882.4,892.0C885.4,892.8 888.4,893.5 890.6,893.2C892.8,892.8 894.6,891.4 895.6,889.9C896.6,888.4 896.7,886.2 896.4,884.1C896.1,881.9 894.1,878.2 893.6,877.0" fill="none" stroke="#000" stroke-width="1.1"/>
<line x1="849.4" y1="872.5" x2="860.6" y2="880.1" stroke="#0000ff" stroke-width="4.3" stroke-linecap="round"/>
<path d="M844.1,867.7L852.1,875.7M844.1,875.7L852.1,867.7" stroke="#ff0000" stroke-width="1.1" fill="none"/>
<circle cx="910.4" cy="885.4" r="2.4" fill="#ff0000"/>
<path d="M877.2,875.2h3.2q1.4,0.2 1.2,1.6q-0.4,1.8 -2.2,1.8q-2,-0.2 -2.2,-3.4z" fill="#fff" stroke="#000" stroke-width="0.8"/>
</g>
</svg></body></html>
